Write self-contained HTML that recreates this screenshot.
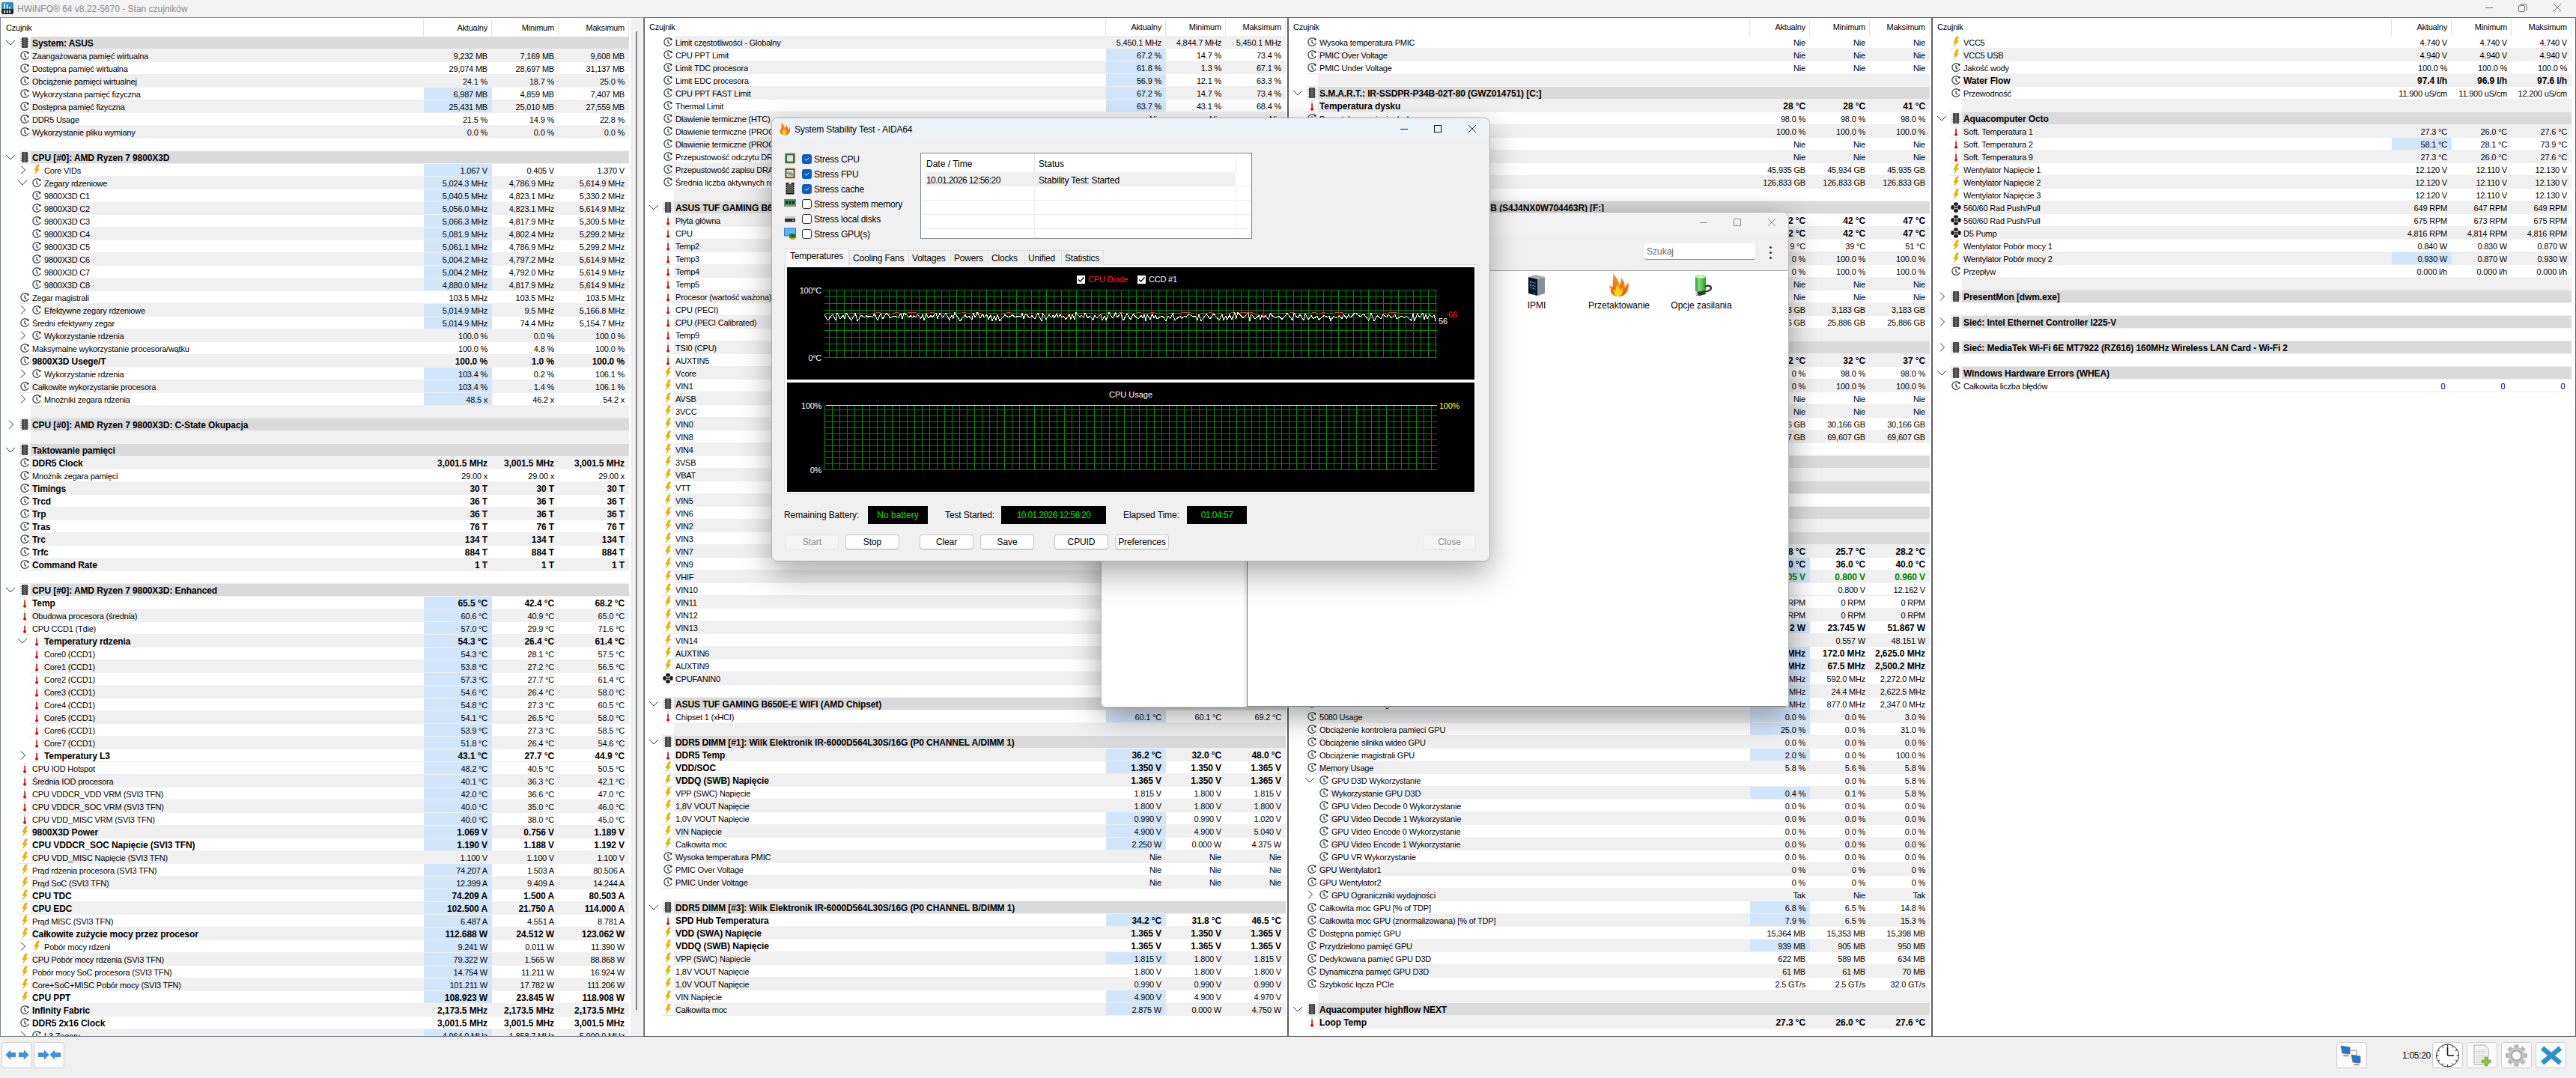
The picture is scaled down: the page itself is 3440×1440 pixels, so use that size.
<!DOCTYPE html>
<html><head><meta charset="utf-8"><title>HWiNFO</title><style>
*{box-sizing:border-box}
html,body{margin:0;padding:0}
body{width:3440px;height:1440px;overflow:hidden;position:relative;background:#f0f0f0;font-family:"Liberation Sans",sans-serif;color:#000}
div,span,svg{position:absolute}
.pn{overflow:hidden;background:#fff}
.t{white-space:nowrap;font-size:11px;line-height:18px;letter-spacing:-0.2px}
.t.b{font-weight:bold;font-size:12px;line-height:17px;letter-spacing:-0.1px}
.t.r{text-align:right}
.t.hd{line-height:20px}
.ic{overflow:visible}
.u{white-space:nowrap}
</style></head>
<body>

<div style="left:0;top:0;width:3440px;height:23px;background:#f3f3f3"></div>
<div class="pn" style="left:0px;top:23px;width:860px;height:1362px">
<div style="position:absolute;left:0px;top:-23px;width:3440px;height:1440px">
<span class="t hd" style="left:8px;top:27px;">Czujnik</span>
<span class="t r hd" style="left:561px;top:27px;width:90px;">Aktualny</span>
<span class="t r hd" style="left:650px;top:27px;width:90px;">Minimum</span>
<span class="t r hd" style="left:744px;top:27px;width:90px;">Maksimum</span>
<div style="left:565px;top:26px;width:1px;height:23px;background:#e5e5e5"></div>
<div style="left:656px;top:26px;width:1px;height:23px;background:#e5e5e5"></div>
<div style="left:745px;top:26px;width:1px;height:23px;background:#e5e5e5"></div>
<div style="left:839px;top:26px;width:1px;height:23px;background:#e5e5e5"></div>
<div style="left:25px;top:49px;width:16px;height:16px;background:#f7f7f7"></div>
<div style="left:41px;top:49px;width:799px;height:16px;background:#dadada"></div>
<div style="left:41px;top:65px;width:799px;height:1px;background:#f0f0f0"></div>
<div style="left:25px;top:65px;width:16px;height:1px;background:#e9e9e9"></div>
<svg class="ic" style="left:7px;top:49px" width="14" height="16" viewBox="0 0 14 16"><path d="M1 5L7 11L13 5" fill="none" stroke="#303030" stroke-width="1"/></svg>
<svg class="ic" style="left:25px;top:49px" width="16" height="16" viewBox="0 0 16 16"><g fill="#a9a9a9"><rect x="2" y="3" width="2" height="1"/><rect x="2" y="6" width="2" height="1"/><rect x="2" y="9" width="2" height="1"/><rect x="2" y="12" width="2" height="1"/><rect x="12" y="3" width="2" height="1"/><rect x="12" y="6" width="2" height="1"/><rect x="12" y="9" width="2" height="1"/><rect x="12" y="12" width="2" height="1"/></g><rect x="4" y="1" width="8" height="14" rx="0.8" fill="#444"/><rect x="6.5" y="1" width="3" height="14" fill="#626262"/></svg>
<span class="t b" style="left:43px;top:50px;">System: ASUS</span>
<div style="left:41px;top:66px;width:799px;height:16px;background:#f0f0f0"></div>
<div style="left:41px;top:82px;width:799px;height:1px;background:#f0f0f0"></div>
<div style="left:25px;top:82px;width:16px;height:1px;background:#e9e9e9"></div>
<svg class="ic" style="left:25px;top:66px" width="16" height="16" viewBox="0 0 16 16"><path d="M13.2 9.8A5.3 5.3 0 1 1 11.6 4.0" fill="none" stroke="#4d5257" stroke-width="1.4"/><circle cx="12.3" cy="4.6" r="1.3" fill="#1e1e1e"/><path d="M8 5.2V8.6L10 10.4" fill="none" stroke="#3d4247" stroke-width="1.3"/></svg>
<span class="t " style="left:43px;top:66px;">Zaangażowana pamięć wirtualna</span>
<span class="t r " style="left:531px;top:66px;width:120px;">9,232 MB</span>
<span class="t r " style="left:620px;top:66px;width:120px;">7,169 MB</span>
<span class="t r " style="left:714px;top:66px;width:120px;">9,608 MB</span>
<div style="left:41px;top:99px;width:799px;height:1px;background:#f0f0f0"></div>
<div style="left:25px;top:99px;width:16px;height:1px;background:#e9e9e9"></div>
<svg class="ic" style="left:25px;top:83px" width="16" height="16" viewBox="0 0 16 16"><path d="M13.2 9.8A5.3 5.3 0 1 1 11.6 4.0" fill="none" stroke="#4d5257" stroke-width="1.4"/><circle cx="12.3" cy="4.6" r="1.3" fill="#1e1e1e"/><path d="M8 5.2V8.6L10 10.4" fill="none" stroke="#3d4247" stroke-width="1.3"/></svg>
<span class="t " style="left:43px;top:83px;">Dostępna pamięć wirtualna</span>
<span class="t r " style="left:531px;top:83px;width:120px;">29,074 MB</span>
<span class="t r " style="left:620px;top:83px;width:120px;">28,697 MB</span>
<span class="t r " style="left:714px;top:83px;width:120px;">31,137 MB</span>
<div style="left:41px;top:100px;width:799px;height:16px;background:#f0f0f0"></div>
<div style="left:41px;top:116px;width:799px;height:1px;background:#f0f0f0"></div>
<div style="left:25px;top:116px;width:16px;height:1px;background:#e9e9e9"></div>
<svg class="ic" style="left:25px;top:100px" width="16" height="16" viewBox="0 0 16 16"><path d="M13.2 9.8A5.3 5.3 0 1 1 11.6 4.0" fill="none" stroke="#4d5257" stroke-width="1.4"/><circle cx="12.3" cy="4.6" r="1.3" fill="#1e1e1e"/><path d="M8 5.2V8.6L10 10.4" fill="none" stroke="#3d4247" stroke-width="1.3"/></svg>
<span class="t " style="left:43px;top:100px;">Obciążenie pamięci wirtualnej</span>
<span class="t r " style="left:531px;top:100px;width:120px;">24.1 %</span>
<span class="t r " style="left:620px;top:100px;width:120px;">18.7 %</span>
<span class="t r " style="left:714px;top:100px;width:120px;">25.0 %</span>
<div style="left:41px;top:133px;width:799px;height:1px;background:#f0f0f0"></div>
<div style="left:25px;top:133px;width:16px;height:1px;background:#e9e9e9"></div>
<svg class="ic" style="left:25px;top:117px" width="16" height="16" viewBox="0 0 16 16"><path d="M13.2 9.8A5.3 5.3 0 1 1 11.6 4.0" fill="none" stroke="#4d5257" stroke-width="1.4"/><circle cx="12.3" cy="4.6" r="1.3" fill="#1e1e1e"/><path d="M8 5.2V8.6L10 10.4" fill="none" stroke="#3d4247" stroke-width="1.3"/></svg>
<div style="left:566px;top:117px;width:91px;height:16px;background:#d1e5fb"></div>
<span class="t " style="left:43px;top:117px;">Wykorzystana pamięć fizyczna</span>
<span class="t r " style="left:531px;top:117px;width:120px;">6,987 MB</span>
<span class="t r " style="left:620px;top:117px;width:120px;">4,859 MB</span>
<span class="t r " style="left:714px;top:117px;width:120px;">7,407 MB</span>
<div style="left:41px;top:134px;width:799px;height:16px;background:#f0f0f0"></div>
<div style="left:41px;top:150px;width:799px;height:1px;background:#f0f0f0"></div>
<div style="left:25px;top:150px;width:16px;height:1px;background:#e9e9e9"></div>
<svg class="ic" style="left:25px;top:134px" width="16" height="16" viewBox="0 0 16 16"><path d="M13.2 9.8A5.3 5.3 0 1 1 11.6 4.0" fill="none" stroke="#4d5257" stroke-width="1.4"/><circle cx="12.3" cy="4.6" r="1.3" fill="#1e1e1e"/><path d="M8 5.2V8.6L10 10.4" fill="none" stroke="#3d4247" stroke-width="1.3"/></svg>
<div style="left:566px;top:134px;width:91px;height:16px;background:#d1e5fb"></div>
<span class="t " style="left:43px;top:134px;">Dostępna pamięć fizyczna</span>
<span class="t r " style="left:531px;top:134px;width:120px;">25,431 MB</span>
<span class="t r " style="left:620px;top:134px;width:120px;">25,010 MB</span>
<span class="t r " style="left:714px;top:134px;width:120px;">27,559 MB</span>
<div style="left:41px;top:167px;width:799px;height:1px;background:#f0f0f0"></div>
<div style="left:25px;top:167px;width:16px;height:1px;background:#e9e9e9"></div>
<svg class="ic" style="left:25px;top:151px" width="16" height="16" viewBox="0 0 16 16"><path d="M13.2 9.8A5.3 5.3 0 1 1 11.6 4.0" fill="none" stroke="#4d5257" stroke-width="1.4"/><circle cx="12.3" cy="4.6" r="1.3" fill="#1e1e1e"/><path d="M8 5.2V8.6L10 10.4" fill="none" stroke="#3d4247" stroke-width="1.3"/></svg>
<span class="t " style="left:43px;top:151px;">DDR5 Usage</span>
<span class="t r " style="left:531px;top:151px;width:120px;">21.5 %</span>
<span class="t r " style="left:620px;top:151px;width:120px;">14.9 %</span>
<span class="t r " style="left:714px;top:151px;width:120px;">22.8 %</span>
<div style="left:41px;top:168px;width:799px;height:16px;background:#f0f0f0"></div>
<div style="left:41px;top:184px;width:799px;height:1px;background:#f0f0f0"></div>
<div style="left:25px;top:184px;width:16px;height:1px;background:#e9e9e9"></div>
<svg class="ic" style="left:25px;top:168px" width="16" height="16" viewBox="0 0 16 16"><path d="M13.2 9.8A5.3 5.3 0 1 1 11.6 4.0" fill="none" stroke="#4d5257" stroke-width="1.4"/><circle cx="12.3" cy="4.6" r="1.3" fill="#1e1e1e"/><path d="M8 5.2V8.6L10 10.4" fill="none" stroke="#3d4247" stroke-width="1.3"/></svg>
<span class="t " style="left:43px;top:168px;">Wykorzystanie pliku wymiany</span>
<span class="t r " style="left:531px;top:168px;width:120px;">0.0 %</span>
<span class="t r " style="left:620px;top:168px;width:120px;">0.0 %</span>
<span class="t r " style="left:714px;top:168px;width:120px;">0.0 %</span>
<div style="left:41px;top:201px;width:799px;height:1px;background:#f0f0f0"></div>
<div style="left:25px;top:201px;width:16px;height:1px;background:#e9e9e9"></div>
<div style="left:25px;top:202px;width:16px;height:16px;background:#f7f7f7"></div>
<div style="left:41px;top:202px;width:799px;height:16px;background:#dadada"></div>
<div style="left:41px;top:218px;width:799px;height:1px;background:#f0f0f0"></div>
<div style="left:25px;top:218px;width:16px;height:1px;background:#e9e9e9"></div>
<svg class="ic" style="left:7px;top:202px" width="14" height="16" viewBox="0 0 14 16"><path d="M1 5L7 11L13 5" fill="none" stroke="#303030" stroke-width="1"/></svg>
<svg class="ic" style="left:25px;top:202px" width="16" height="16" viewBox="0 0 16 16"><g fill="#a9a9a9"><rect x="2" y="3" width="2" height="1"/><rect x="2" y="6" width="2" height="1"/><rect x="2" y="9" width="2" height="1"/><rect x="2" y="12" width="2" height="1"/><rect x="12" y="3" width="2" height="1"/><rect x="12" y="6" width="2" height="1"/><rect x="12" y="9" width="2" height="1"/><rect x="12" y="12" width="2" height="1"/></g><rect x="4" y="1" width="8" height="14" rx="0.8" fill="#444"/><rect x="6.5" y="1" width="3" height="14" fill="#626262"/></svg>
<span class="t b" style="left:43px;top:203px;">CPU [#0]: AMD Ryzen 7 9800X3D</span>
<div style="left:57px;top:235px;width:783px;height:1px;background:#f0f0f0"></div>
<div style="left:41px;top:235px;width:16px;height:1px;background:#e9e9e9"></div>
<svg class="ic" style="left:25px;top:219px" width="12" height="16" viewBox="0 0 12 16"><path d="M3 2.5L8.5 8L3 13.5" fill="none" stroke="#2a2a2a" stroke-width="1"/></svg>
<svg class="ic" style="left:41px;top:219px" width="16" height="16" viewBox="0 0 16 16"><path d="M8.4 0.8H12.2L9.4 6.2L12.2 6.4L4.2 15.6L7 9.2L4.4 9Z" fill="#e9b30c"/></svg>
<div style="left:566px;top:219px;width:91px;height:16px;background:#d1e5fb"></div>
<span class="t " style="left:59px;top:219px;">Core VIDs</span>
<span class="t r " style="left:531px;top:219px;width:120px;">1.067 V</span>
<span class="t r " style="left:620px;top:219px;width:120px;">0.405 V</span>
<span class="t r " style="left:714px;top:219px;width:120px;">1.370 V</span>
<div style="left:57px;top:236px;width:783px;height:16px;background:#f0f0f0"></div>
<div style="left:57px;top:252px;width:783px;height:1px;background:#f0f0f0"></div>
<div style="left:41px;top:252px;width:16px;height:1px;background:#e9e9e9"></div>
<svg class="ic" style="left:23px;top:236px" width="14" height="16" viewBox="0 0 14 16"><path d="M1 5L7 11L13 5" fill="none" stroke="#303030" stroke-width="1"/></svg>
<svg class="ic" style="left:41px;top:236px" width="16" height="16" viewBox="0 0 16 16"><path d="M13.2 9.8A5.3 5.3 0 1 1 11.6 4.0" fill="none" stroke="#4d5257" stroke-width="1.4"/><circle cx="12.3" cy="4.6" r="1.3" fill="#1e1e1e"/><path d="M8 5.2V8.6L10 10.4" fill="none" stroke="#3d4247" stroke-width="1.3"/></svg>
<div style="left:566px;top:236px;width:91px;height:16px;background:#d1e5fb"></div>
<span class="t " style="left:59px;top:236px;">Zegary rdzeniowe</span>
<span class="t r " style="left:531px;top:236px;width:120px;">5,024.3 MHz</span>
<span class="t r " style="left:620px;top:236px;width:120px;">4,786.9 MHz</span>
<span class="t r " style="left:714px;top:236px;width:120px;">5,614.9 MHz</span>
<div style="left:57px;top:269px;width:783px;height:1px;background:#f0f0f0"></div>
<div style="left:41px;top:269px;width:16px;height:1px;background:#e9e9e9"></div>
<svg class="ic" style="left:41px;top:253px" width="16" height="16" viewBox="0 0 16 16"><path d="M13.2 9.8A5.3 5.3 0 1 1 11.6 4.0" fill="none" stroke="#4d5257" stroke-width="1.4"/><circle cx="12.3" cy="4.6" r="1.3" fill="#1e1e1e"/><path d="M8 5.2V8.6L10 10.4" fill="none" stroke="#3d4247" stroke-width="1.3"/></svg>
<div style="left:566px;top:253px;width:91px;height:16px;background:#d1e5fb"></div>
<span class="t " style="left:59px;top:253px;">9800X3D C1</span>
<span class="t r " style="left:531px;top:253px;width:120px;">5,040.5 MHz</span>
<span class="t r " style="left:620px;top:253px;width:120px;">4,823.1 MHz</span>
<span class="t r " style="left:714px;top:253px;width:120px;">5,330.2 MHz</span>
<div style="left:57px;top:270px;width:783px;height:16px;background:#f0f0f0"></div>
<div style="left:57px;top:286px;width:783px;height:1px;background:#f0f0f0"></div>
<div style="left:41px;top:286px;width:16px;height:1px;background:#e9e9e9"></div>
<svg class="ic" style="left:41px;top:270px" width="16" height="16" viewBox="0 0 16 16"><path d="M13.2 9.8A5.3 5.3 0 1 1 11.6 4.0" fill="none" stroke="#4d5257" stroke-width="1.4"/><circle cx="12.3" cy="4.6" r="1.3" fill="#1e1e1e"/><path d="M8 5.2V8.6L10 10.4" fill="none" stroke="#3d4247" stroke-width="1.3"/></svg>
<div style="left:566px;top:270px;width:91px;height:16px;background:#d1e5fb"></div>
<span class="t " style="left:59px;top:270px;">9800X3D C2</span>
<span class="t r " style="left:531px;top:270px;width:120px;">5,056.0 MHz</span>
<span class="t r " style="left:620px;top:270px;width:120px;">4,823.1 MHz</span>
<span class="t r " style="left:714px;top:270px;width:120px;">5,614.9 MHz</span>
<div style="left:57px;top:303px;width:783px;height:1px;background:#f0f0f0"></div>
<div style="left:41px;top:303px;width:16px;height:1px;background:#e9e9e9"></div>
<svg class="ic" style="left:41px;top:287px" width="16" height="16" viewBox="0 0 16 16"><path d="M13.2 9.8A5.3 5.3 0 1 1 11.6 4.0" fill="none" stroke="#4d5257" stroke-width="1.4"/><circle cx="12.3" cy="4.6" r="1.3" fill="#1e1e1e"/><path d="M8 5.2V8.6L10 10.4" fill="none" stroke="#3d4247" stroke-width="1.3"/></svg>
<div style="left:566px;top:287px;width:91px;height:16px;background:#d1e5fb"></div>
<span class="t " style="left:59px;top:287px;">9800X3D C3</span>
<span class="t r " style="left:531px;top:287px;width:120px;">5,066.3 MHz</span>
<span class="t r " style="left:620px;top:287px;width:120px;">4,817.9 MHz</span>
<span class="t r " style="left:714px;top:287px;width:120px;">5,309.5 MHz</span>
<div style="left:57px;top:304px;width:783px;height:16px;background:#f0f0f0"></div>
<div style="left:57px;top:320px;width:783px;height:1px;background:#f0f0f0"></div>
<div style="left:41px;top:320px;width:16px;height:1px;background:#e9e9e9"></div>
<svg class="ic" style="left:41px;top:304px" width="16" height="16" viewBox="0 0 16 16"><path d="M13.2 9.8A5.3 5.3 0 1 1 11.6 4.0" fill="none" stroke="#4d5257" stroke-width="1.4"/><circle cx="12.3" cy="4.6" r="1.3" fill="#1e1e1e"/><path d="M8 5.2V8.6L10 10.4" fill="none" stroke="#3d4247" stroke-width="1.3"/></svg>
<div style="left:566px;top:304px;width:91px;height:16px;background:#d1e5fb"></div>
<span class="t " style="left:59px;top:304px;">9800X3D C4</span>
<span class="t r " style="left:531px;top:304px;width:120px;">5,081.9 MHz</span>
<span class="t r " style="left:620px;top:304px;width:120px;">4,802.4 MHz</span>
<span class="t r " style="left:714px;top:304px;width:120px;">5,299.2 MHz</span>
<div style="left:57px;top:337px;width:783px;height:1px;background:#f0f0f0"></div>
<div style="left:41px;top:337px;width:16px;height:1px;background:#e9e9e9"></div>
<svg class="ic" style="left:41px;top:321px" width="16" height="16" viewBox="0 0 16 16"><path d="M13.2 9.8A5.3 5.3 0 1 1 11.6 4.0" fill="none" stroke="#4d5257" stroke-width="1.4"/><circle cx="12.3" cy="4.6" r="1.3" fill="#1e1e1e"/><path d="M8 5.2V8.6L10 10.4" fill="none" stroke="#3d4247" stroke-width="1.3"/></svg>
<div style="left:566px;top:321px;width:91px;height:16px;background:#d1e5fb"></div>
<span class="t " style="left:59px;top:321px;">9800X3D C5</span>
<span class="t r " style="left:531px;top:321px;width:120px;">5,061.1 MHz</span>
<span class="t r " style="left:620px;top:321px;width:120px;">4,786.9 MHz</span>
<span class="t r " style="left:714px;top:321px;width:120px;">5,299.2 MHz</span>
<div style="left:57px;top:338px;width:783px;height:16px;background:#f0f0f0"></div>
<div style="left:57px;top:354px;width:783px;height:1px;background:#f0f0f0"></div>
<div style="left:41px;top:354px;width:16px;height:1px;background:#e9e9e9"></div>
<svg class="ic" style="left:41px;top:338px" width="16" height="16" viewBox="0 0 16 16"><path d="M13.2 9.8A5.3 5.3 0 1 1 11.6 4.0" fill="none" stroke="#4d5257" stroke-width="1.4"/><circle cx="12.3" cy="4.6" r="1.3" fill="#1e1e1e"/><path d="M8 5.2V8.6L10 10.4" fill="none" stroke="#3d4247" stroke-width="1.3"/></svg>
<div style="left:566px;top:338px;width:91px;height:16px;background:#d1e5fb"></div>
<span class="t " style="left:59px;top:338px;">9800X3D C6</span>
<span class="t r " style="left:531px;top:338px;width:120px;">5,004.2 MHz</span>
<span class="t r " style="left:620px;top:338px;width:120px;">4,797.2 MHz</span>
<span class="t r " style="left:714px;top:338px;width:120px;">5,614.9 MHz</span>
<div style="left:57px;top:371px;width:783px;height:1px;background:#f0f0f0"></div>
<div style="left:41px;top:371px;width:16px;height:1px;background:#e9e9e9"></div>
<svg class="ic" style="left:41px;top:355px" width="16" height="16" viewBox="0 0 16 16"><path d="M13.2 9.8A5.3 5.3 0 1 1 11.6 4.0" fill="none" stroke="#4d5257" stroke-width="1.4"/><circle cx="12.3" cy="4.6" r="1.3" fill="#1e1e1e"/><path d="M8 5.2V8.6L10 10.4" fill="none" stroke="#3d4247" stroke-width="1.3"/></svg>
<div style="left:566px;top:355px;width:91px;height:16px;background:#d1e5fb"></div>
<span class="t " style="left:59px;top:355px;">9800X3D C7</span>
<span class="t r " style="left:531px;top:355px;width:120px;">5,004.2 MHz</span>
<span class="t r " style="left:620px;top:355px;width:120px;">4,792.0 MHz</span>
<span class="t r " style="left:714px;top:355px;width:120px;">5,614.9 MHz</span>
<div style="left:57px;top:372px;width:783px;height:16px;background:#f0f0f0"></div>
<div style="left:57px;top:388px;width:783px;height:1px;background:#f0f0f0"></div>
<div style="left:41px;top:388px;width:16px;height:1px;background:#e9e9e9"></div>
<svg class="ic" style="left:41px;top:372px" width="16" height="16" viewBox="0 0 16 16"><path d="M13.2 9.8A5.3 5.3 0 1 1 11.6 4.0" fill="none" stroke="#4d5257" stroke-width="1.4"/><circle cx="12.3" cy="4.6" r="1.3" fill="#1e1e1e"/><path d="M8 5.2V8.6L10 10.4" fill="none" stroke="#3d4247" stroke-width="1.3"/></svg>
<div style="left:566px;top:372px;width:91px;height:16px;background:#d1e5fb"></div>
<span class="t " style="left:59px;top:372px;">9800X3D C8</span>
<span class="t r " style="left:531px;top:372px;width:120px;">4,880.0 MHz</span>
<span class="t r " style="left:620px;top:372px;width:120px;">4,817.9 MHz</span>
<span class="t r " style="left:714px;top:372px;width:120px;">5,614.9 MHz</span>
<div style="left:41px;top:405px;width:799px;height:1px;background:#f0f0f0"></div>
<div style="left:25px;top:405px;width:16px;height:1px;background:#e9e9e9"></div>
<svg class="ic" style="left:25px;top:389px" width="16" height="16" viewBox="0 0 16 16"><path d="M13.2 9.8A5.3 5.3 0 1 1 11.6 4.0" fill="none" stroke="#4d5257" stroke-width="1.4"/><circle cx="12.3" cy="4.6" r="1.3" fill="#1e1e1e"/><path d="M8 5.2V8.6L10 10.4" fill="none" stroke="#3d4247" stroke-width="1.3"/></svg>
<span class="t " style="left:43px;top:389px;">Zegar magistrali</span>
<span class="t r " style="left:531px;top:389px;width:120px;">103.5 MHz</span>
<span class="t r " style="left:620px;top:389px;width:120px;">103.5 MHz</span>
<span class="t r " style="left:714px;top:389px;width:120px;">103.5 MHz</span>
<div style="left:57px;top:406px;width:783px;height:16px;background:#f0f0f0"></div>
<div style="left:57px;top:422px;width:783px;height:1px;background:#f0f0f0"></div>
<div style="left:41px;top:422px;width:16px;height:1px;background:#e9e9e9"></div>
<svg class="ic" style="left:25px;top:406px" width="12" height="16" viewBox="0 0 12 16"><path d="M3 2.5L8.5 8L3 13.5" fill="none" stroke="#2a2a2a" stroke-width="1"/></svg>
<svg class="ic" style="left:41px;top:406px" width="16" height="16" viewBox="0 0 16 16"><path d="M13.2 9.8A5.3 5.3 0 1 1 11.6 4.0" fill="none" stroke="#4d5257" stroke-width="1.4"/><circle cx="12.3" cy="4.6" r="1.3" fill="#1e1e1e"/><path d="M8 5.2V8.6L10 10.4" fill="none" stroke="#3d4247" stroke-width="1.3"/></svg>
<div style="left:566px;top:406px;width:91px;height:16px;background:#d1e5fb"></div>
<span class="t " style="left:59px;top:406px;">Efektywne zegary rdzeniowe</span>
<span class="t r " style="left:531px;top:406px;width:120px;">5,014.9 MHz</span>
<span class="t r " style="left:620px;top:406px;width:120px;">9.5 MHz</span>
<span class="t r " style="left:714px;top:406px;width:120px;">5,166.8 MHz</span>
<div style="left:41px;top:439px;width:799px;height:1px;background:#f0f0f0"></div>
<div style="left:25px;top:439px;width:16px;height:1px;background:#e9e9e9"></div>
<svg class="ic" style="left:25px;top:423px" width="16" height="16" viewBox="0 0 16 16"><path d="M13.2 9.8A5.3 5.3 0 1 1 11.6 4.0" fill="none" stroke="#4d5257" stroke-width="1.4"/><circle cx="12.3" cy="4.6" r="1.3" fill="#1e1e1e"/><path d="M8 5.2V8.6L10 10.4" fill="none" stroke="#3d4247" stroke-width="1.3"/></svg>
<div style="left:566px;top:423px;width:91px;height:16px;background:#d1e5fb"></div>
<span class="t " style="left:43px;top:423px;">Średni efektywny zegar</span>
<span class="t r " style="left:531px;top:423px;width:120px;">5,014.9 MHz</span>
<span class="t r " style="left:620px;top:423px;width:120px;">74.4 MHz</span>
<span class="t r " style="left:714px;top:423px;width:120px;">5,154.7 MHz</span>
<div style="left:57px;top:440px;width:783px;height:16px;background:#f0f0f0"></div>
<div style="left:57px;top:456px;width:783px;height:1px;background:#f0f0f0"></div>
<div style="left:41px;top:456px;width:16px;height:1px;background:#e9e9e9"></div>
<svg class="ic" style="left:25px;top:440px" width="12" height="16" viewBox="0 0 12 16"><path d="M3 2.5L8.5 8L3 13.5" fill="none" stroke="#2a2a2a" stroke-width="1"/></svg>
<svg class="ic" style="left:41px;top:440px" width="16" height="16" viewBox="0 0 16 16"><path d="M13.2 9.8A5.3 5.3 0 1 1 11.6 4.0" fill="none" stroke="#4d5257" stroke-width="1.4"/><circle cx="12.3" cy="4.6" r="1.3" fill="#1e1e1e"/><path d="M8 5.2V8.6L10 10.4" fill="none" stroke="#3d4247" stroke-width="1.3"/></svg>
<span class="t " style="left:59px;top:440px;">Wykorzystanie rdzenia</span>
<span class="t r " style="left:531px;top:440px;width:120px;">100.0 %</span>
<span class="t r " style="left:620px;top:440px;width:120px;">0.0 %</span>
<span class="t r " style="left:714px;top:440px;width:120px;">100.0 %</span>
<div style="left:41px;top:473px;width:799px;height:1px;background:#f0f0f0"></div>
<div style="left:25px;top:473px;width:16px;height:1px;background:#e9e9e9"></div>
<svg class="ic" style="left:25px;top:457px" width="16" height="16" viewBox="0 0 16 16"><path d="M13.2 9.8A5.3 5.3 0 1 1 11.6 4.0" fill="none" stroke="#4d5257" stroke-width="1.4"/><circle cx="12.3" cy="4.6" r="1.3" fill="#1e1e1e"/><path d="M8 5.2V8.6L10 10.4" fill="none" stroke="#3d4247" stroke-width="1.3"/></svg>
<span class="t " style="left:43px;top:457px;">Maksymalne wykorzystanie procesora/wątku</span>
<span class="t r " style="left:531px;top:457px;width:120px;">100.0 %</span>
<span class="t r " style="left:620px;top:457px;width:120px;">4.8 %</span>
<span class="t r " style="left:714px;top:457px;width:120px;">100.0 %</span>
<div style="left:41px;top:474px;width:799px;height:16px;background:#f0f0f0"></div>
<div style="left:41px;top:490px;width:799px;height:1px;background:#f0f0f0"></div>
<div style="left:25px;top:490px;width:16px;height:1px;background:#e9e9e9"></div>
<svg class="ic" style="left:25px;top:474px" width="16" height="16" viewBox="0 0 16 16"><path d="M13.2 9.8A5.3 5.3 0 1 1 11.6 4.0" fill="none" stroke="#4d5257" stroke-width="1.4"/><circle cx="12.3" cy="4.6" r="1.3" fill="#1e1e1e"/><path d="M8 5.2V8.6L10 10.4" fill="none" stroke="#3d4247" stroke-width="1.3"/></svg>
<span class="t b" style="left:43px;top:475px;">9800X3D Usege/T</span>
<span class="t r b" style="left:531px;top:475px;width:120px;">100.0 %</span>
<span class="t r b" style="left:620px;top:475px;width:120px;">1.0 %</span>
<span class="t r b" style="left:714px;top:475px;width:120px;">100.0 %</span>
<div style="left:57px;top:507px;width:783px;height:1px;background:#f0f0f0"></div>
<div style="left:41px;top:507px;width:16px;height:1px;background:#e9e9e9"></div>
<svg class="ic" style="left:25px;top:491px" width="12" height="16" viewBox="0 0 12 16"><path d="M3 2.5L8.5 8L3 13.5" fill="none" stroke="#2a2a2a" stroke-width="1"/></svg>
<svg class="ic" style="left:41px;top:491px" width="16" height="16" viewBox="0 0 16 16"><path d="M13.2 9.8A5.3 5.3 0 1 1 11.6 4.0" fill="none" stroke="#4d5257" stroke-width="1.4"/><circle cx="12.3" cy="4.6" r="1.3" fill="#1e1e1e"/><path d="M8 5.2V8.6L10 10.4" fill="none" stroke="#3d4247" stroke-width="1.3"/></svg>
<div style="left:566px;top:491px;width:91px;height:16px;background:#d1e5fb"></div>
<span class="t " style="left:59px;top:491px;">Wykorzystanie rdzenia</span>
<span class="t r " style="left:531px;top:491px;width:120px;">103.4 %</span>
<span class="t r " style="left:620px;top:491px;width:120px;">0.2 %</span>
<span class="t r " style="left:714px;top:491px;width:120px;">106.1 %</span>
<div style="left:41px;top:508px;width:799px;height:16px;background:#f0f0f0"></div>
<div style="left:41px;top:524px;width:799px;height:1px;background:#f0f0f0"></div>
<div style="left:25px;top:524px;width:16px;height:1px;background:#e9e9e9"></div>
<svg class="ic" style="left:25px;top:508px" width="16" height="16" viewBox="0 0 16 16"><path d="M13.2 9.8A5.3 5.3 0 1 1 11.6 4.0" fill="none" stroke="#4d5257" stroke-width="1.4"/><circle cx="12.3" cy="4.6" r="1.3" fill="#1e1e1e"/><path d="M8 5.2V8.6L10 10.4" fill="none" stroke="#3d4247" stroke-width="1.3"/></svg>
<div style="left:566px;top:508px;width:91px;height:16px;background:#d1e5fb"></div>
<span class="t " style="left:43px;top:508px;">Całkowite wykorzystanie procesora</span>
<span class="t r " style="left:531px;top:508px;width:120px;">103.4 %</span>
<span class="t r " style="left:620px;top:508px;width:120px;">1.4 %</span>
<span class="t r " style="left:714px;top:508px;width:120px;">106.1 %</span>
<div style="left:57px;top:541px;width:783px;height:1px;background:#f0f0f0"></div>
<div style="left:41px;top:541px;width:16px;height:1px;background:#e9e9e9"></div>
<svg class="ic" style="left:25px;top:525px" width="12" height="16" viewBox="0 0 12 16"><path d="M3 2.5L8.5 8L3 13.5" fill="none" stroke="#2a2a2a" stroke-width="1"/></svg>
<svg class="ic" style="left:41px;top:525px" width="16" height="16" viewBox="0 0 16 16"><path d="M13.2 9.8A5.3 5.3 0 1 1 11.6 4.0" fill="none" stroke="#4d5257" stroke-width="1.4"/><circle cx="12.3" cy="4.6" r="1.3" fill="#1e1e1e"/><path d="M8 5.2V8.6L10 10.4" fill="none" stroke="#3d4247" stroke-width="1.3"/></svg>
<div style="left:566px;top:525px;width:91px;height:16px;background:#d1e5fb"></div>
<span class="t " style="left:59px;top:525px;">Mnożniki zegara rdzenia</span>
<span class="t r " style="left:531px;top:525px;width:120px;">48.5 x</span>
<span class="t r " style="left:620px;top:525px;width:120px;">46.2 x</span>
<span class="t r " style="left:714px;top:525px;width:120px;">54.2 x</span>
<div style="left:41px;top:542px;width:799px;height:16px;background:#f0f0f0"></div>
<div style="left:41px;top:558px;width:799px;height:1px;background:#f0f0f0"></div>
<div style="left:25px;top:558px;width:16px;height:1px;background:#e9e9e9"></div>
<div style="left:25px;top:559px;width:16px;height:16px;background:#f7f7f7"></div>
<div style="left:41px;top:559px;width:799px;height:16px;background:#dadada"></div>
<div style="left:41px;top:575px;width:799px;height:1px;background:#f0f0f0"></div>
<div style="left:25px;top:575px;width:16px;height:1px;background:#e9e9e9"></div>
<svg class="ic" style="left:9px;top:559px" width="12" height="16" viewBox="0 0 12 16"><path d="M3 2.5L8.5 8L3 13.5" fill="none" stroke="#2a2a2a" stroke-width="1"/></svg>
<svg class="ic" style="left:25px;top:559px" width="16" height="16" viewBox="0 0 16 16"><g fill="#a9a9a9"><rect x="2" y="3" width="2" height="1"/><rect x="2" y="6" width="2" height="1"/><rect x="2" y="9" width="2" height="1"/><rect x="2" y="12" width="2" height="1"/><rect x="12" y="3" width="2" height="1"/><rect x="12" y="6" width="2" height="1"/><rect x="12" y="9" width="2" height="1"/><rect x="12" y="12" width="2" height="1"/></g><rect x="4" y="1" width="8" height="14" rx="0.8" fill="#444"/><rect x="6.5" y="1" width="3" height="14" fill="#626262"/></svg>
<span class="t b" style="left:43px;top:560px;">CPU [#0]: AMD Ryzen 7 9800X3D: C-State Okupacja</span>
<div style="left:41px;top:576px;width:799px;height:16px;background:#f0f0f0"></div>
<div style="left:41px;top:592px;width:799px;height:1px;background:#f0f0f0"></div>
<div style="left:25px;top:592px;width:16px;height:1px;background:#e9e9e9"></div>
<div style="left:25px;top:593px;width:16px;height:16px;background:#f7f7f7"></div>
<div style="left:41px;top:593px;width:799px;height:16px;background:#dadada"></div>
<div style="left:41px;top:609px;width:799px;height:1px;background:#f0f0f0"></div>
<div style="left:25px;top:609px;width:16px;height:1px;background:#e9e9e9"></div>
<svg class="ic" style="left:7px;top:593px" width="14" height="16" viewBox="0 0 14 16"><path d="M1 5L7 11L13 5" fill="none" stroke="#303030" stroke-width="1"/></svg>
<svg class="ic" style="left:25px;top:593px" width="16" height="16" viewBox="0 0 16 16"><g fill="#a9a9a9"><rect x="2" y="3" width="2" height="1"/><rect x="2" y="6" width="2" height="1"/><rect x="2" y="9" width="2" height="1"/><rect x="2" y="12" width="2" height="1"/><rect x="12" y="3" width="2" height="1"/><rect x="12" y="6" width="2" height="1"/><rect x="12" y="9" width="2" height="1"/><rect x="12" y="12" width="2" height="1"/></g><rect x="4" y="1" width="8" height="14" rx="0.8" fill="#444"/><rect x="6.5" y="1" width="3" height="14" fill="#626262"/></svg>
<span class="t b" style="left:43px;top:594px;">Taktowanie pamięci</span>
<div style="left:41px;top:610px;width:799px;height:16px;background:#f0f0f0"></div>
<div style="left:41px;top:626px;width:799px;height:1px;background:#f0f0f0"></div>
<div style="left:25px;top:626px;width:16px;height:1px;background:#e9e9e9"></div>
<svg class="ic" style="left:25px;top:610px" width="16" height="16" viewBox="0 0 16 16"><path d="M13.2 9.8A5.3 5.3 0 1 1 11.6 4.0" fill="none" stroke="#4d5257" stroke-width="1.4"/><circle cx="12.3" cy="4.6" r="1.3" fill="#1e1e1e"/><path d="M8 5.2V8.6L10 10.4" fill="none" stroke="#3d4247" stroke-width="1.3"/></svg>
<span class="t b" style="left:43px;top:611px;">DDR5 Clock</span>
<span class="t r b" style="left:531px;top:611px;width:120px;">3,001.5 MHz</span>
<span class="t r b" style="left:620px;top:611px;width:120px;">3,001.5 MHz</span>
<span class="t r b" style="left:714px;top:611px;width:120px;">3,001.5 MHz</span>
<div style="left:41px;top:643px;width:799px;height:1px;background:#f0f0f0"></div>
<div style="left:25px;top:643px;width:16px;height:1px;background:#e9e9e9"></div>
<svg class="ic" style="left:25px;top:627px" width="16" height="16" viewBox="0 0 16 16"><path d="M13.2 9.8A5.3 5.3 0 1 1 11.6 4.0" fill="none" stroke="#4d5257" stroke-width="1.4"/><circle cx="12.3" cy="4.6" r="1.3" fill="#1e1e1e"/><path d="M8 5.2V8.6L10 10.4" fill="none" stroke="#3d4247" stroke-width="1.3"/></svg>
<span class="t " style="left:43px;top:627px;">Mnożnik zegara pamięci</span>
<span class="t r " style="left:531px;top:627px;width:120px;">29.00 x</span>
<span class="t r " style="left:620px;top:627px;width:120px;">29.00 x</span>
<span class="t r " style="left:714px;top:627px;width:120px;">29.00 x</span>
<div style="left:41px;top:644px;width:799px;height:16px;background:#f0f0f0"></div>
<div style="left:41px;top:660px;width:799px;height:1px;background:#f0f0f0"></div>
<div style="left:25px;top:660px;width:16px;height:1px;background:#e9e9e9"></div>
<svg class="ic" style="left:25px;top:644px" width="16" height="16" viewBox="0 0 16 16"><path d="M13.2 9.8A5.3 5.3 0 1 1 11.6 4.0" fill="none" stroke="#4d5257" stroke-width="1.4"/><circle cx="12.3" cy="4.6" r="1.3" fill="#1e1e1e"/><path d="M8 5.2V8.6L10 10.4" fill="none" stroke="#3d4247" stroke-width="1.3"/></svg>
<span class="t b" style="left:43px;top:645px;">Timings</span>
<span class="t r b" style="left:531px;top:645px;width:120px;">30 T</span>
<span class="t r b" style="left:620px;top:645px;width:120px;">30 T</span>
<span class="t r b" style="left:714px;top:645px;width:120px;">30 T</span>
<div style="left:41px;top:677px;width:799px;height:1px;background:#f0f0f0"></div>
<div style="left:25px;top:677px;width:16px;height:1px;background:#e9e9e9"></div>
<svg class="ic" style="left:25px;top:661px" width="16" height="16" viewBox="0 0 16 16"><path d="M13.2 9.8A5.3 5.3 0 1 1 11.6 4.0" fill="none" stroke="#4d5257" stroke-width="1.4"/><circle cx="12.3" cy="4.6" r="1.3" fill="#1e1e1e"/><path d="M8 5.2V8.6L10 10.4" fill="none" stroke="#3d4247" stroke-width="1.3"/></svg>
<span class="t b" style="left:43px;top:662px;">Trcd</span>
<span class="t r b" style="left:531px;top:662px;width:120px;">36 T</span>
<span class="t r b" style="left:620px;top:662px;width:120px;">36 T</span>
<span class="t r b" style="left:714px;top:662px;width:120px;">36 T</span>
<div style="left:41px;top:678px;width:799px;height:16px;background:#f0f0f0"></div>
<div style="left:41px;top:694px;width:799px;height:1px;background:#f0f0f0"></div>
<div style="left:25px;top:694px;width:16px;height:1px;background:#e9e9e9"></div>
<svg class="ic" style="left:25px;top:678px" width="16" height="16" viewBox="0 0 16 16"><path d="M13.2 9.8A5.3 5.3 0 1 1 11.6 4.0" fill="none" stroke="#4d5257" stroke-width="1.4"/><circle cx="12.3" cy="4.6" r="1.3" fill="#1e1e1e"/><path d="M8 5.2V8.6L10 10.4" fill="none" stroke="#3d4247" stroke-width="1.3"/></svg>
<span class="t b" style="left:43px;top:679px;">Trp</span>
<span class="t r b" style="left:531px;top:679px;width:120px;">36 T</span>
<span class="t r b" style="left:620px;top:679px;width:120px;">36 T</span>
<span class="t r b" style="left:714px;top:679px;width:120px;">36 T</span>
<div style="left:41px;top:711px;width:799px;height:1px;background:#f0f0f0"></div>
<div style="left:25px;top:711px;width:16px;height:1px;background:#e9e9e9"></div>
<svg class="ic" style="left:25px;top:695px" width="16" height="16" viewBox="0 0 16 16"><path d="M13.2 9.8A5.3 5.3 0 1 1 11.6 4.0" fill="none" stroke="#4d5257" stroke-width="1.4"/><circle cx="12.3" cy="4.6" r="1.3" fill="#1e1e1e"/><path d="M8 5.2V8.6L10 10.4" fill="none" stroke="#3d4247" stroke-width="1.3"/></svg>
<span class="t b" style="left:43px;top:696px;">Tras</span>
<span class="t r b" style="left:531px;top:696px;width:120px;">76 T</span>
<span class="t r b" style="left:620px;top:696px;width:120px;">76 T</span>
<span class="t r b" style="left:714px;top:696px;width:120px;">76 T</span>
<div style="left:41px;top:712px;width:799px;height:16px;background:#f0f0f0"></div>
<div style="left:41px;top:728px;width:799px;height:1px;background:#f0f0f0"></div>
<div style="left:25px;top:728px;width:16px;height:1px;background:#e9e9e9"></div>
<svg class="ic" style="left:25px;top:712px" width="16" height="16" viewBox="0 0 16 16"><path d="M13.2 9.8A5.3 5.3 0 1 1 11.6 4.0" fill="none" stroke="#4d5257" stroke-width="1.4"/><circle cx="12.3" cy="4.6" r="1.3" fill="#1e1e1e"/><path d="M8 5.2V8.6L10 10.4" fill="none" stroke="#3d4247" stroke-width="1.3"/></svg>
<span class="t b" style="left:43px;top:713px;">Trc</span>
<span class="t r b" style="left:531px;top:713px;width:120px;">134 T</span>
<span class="t r b" style="left:620px;top:713px;width:120px;">134 T</span>
<span class="t r b" style="left:714px;top:713px;width:120px;">134 T</span>
<div style="left:41px;top:745px;width:799px;height:1px;background:#f0f0f0"></div>
<div style="left:25px;top:745px;width:16px;height:1px;background:#e9e9e9"></div>
<svg class="ic" style="left:25px;top:729px" width="16" height="16" viewBox="0 0 16 16"><path d="M13.2 9.8A5.3 5.3 0 1 1 11.6 4.0" fill="none" stroke="#4d5257" stroke-width="1.4"/><circle cx="12.3" cy="4.6" r="1.3" fill="#1e1e1e"/><path d="M8 5.2V8.6L10 10.4" fill="none" stroke="#3d4247" stroke-width="1.3"/></svg>
<span class="t b" style="left:43px;top:730px;">Trfc</span>
<span class="t r b" style="left:531px;top:730px;width:120px;">884 T</span>
<span class="t r b" style="left:620px;top:730px;width:120px;">884 T</span>
<span class="t r b" style="left:714px;top:730px;width:120px;">884 T</span>
<div style="left:41px;top:746px;width:799px;height:16px;background:#f0f0f0"></div>
<div style="left:41px;top:762px;width:799px;height:1px;background:#f0f0f0"></div>
<div style="left:25px;top:762px;width:16px;height:1px;background:#e9e9e9"></div>
<svg class="ic" style="left:25px;top:746px" width="16" height="16" viewBox="0 0 16 16"><path d="M13.2 9.8A5.3 5.3 0 1 1 11.6 4.0" fill="none" stroke="#4d5257" stroke-width="1.4"/><circle cx="12.3" cy="4.6" r="1.3" fill="#1e1e1e"/><path d="M8 5.2V8.6L10 10.4" fill="none" stroke="#3d4247" stroke-width="1.3"/></svg>
<span class="t b" style="left:43px;top:747px;">Command Rate</span>
<span class="t r b" style="left:531px;top:747px;width:120px;">1 T</span>
<span class="t r b" style="left:620px;top:747px;width:120px;">1 T</span>
<span class="t r b" style="left:714px;top:747px;width:120px;">1 T</span>
<div style="left:41px;top:779px;width:799px;height:1px;background:#f0f0f0"></div>
<div style="left:25px;top:779px;width:16px;height:1px;background:#e9e9e9"></div>
<div style="left:25px;top:780px;width:16px;height:16px;background:#f7f7f7"></div>
<div style="left:41px;top:780px;width:799px;height:16px;background:#dadada"></div>
<div style="left:41px;top:796px;width:799px;height:1px;background:#f0f0f0"></div>
<div style="left:25px;top:796px;width:16px;height:1px;background:#e9e9e9"></div>
<svg class="ic" style="left:7px;top:780px" width="14" height="16" viewBox="0 0 14 16"><path d="M1 5L7 11L13 5" fill="none" stroke="#303030" stroke-width="1"/></svg>
<svg class="ic" style="left:25px;top:780px" width="16" height="16" viewBox="0 0 16 16"><g fill="#a9a9a9"><rect x="2" y="3" width="2" height="1"/><rect x="2" y="6" width="2" height="1"/><rect x="2" y="9" width="2" height="1"/><rect x="2" y="12" width="2" height="1"/><rect x="12" y="3" width="2" height="1"/><rect x="12" y="6" width="2" height="1"/><rect x="12" y="9" width="2" height="1"/><rect x="12" y="12" width="2" height="1"/></g><rect x="4" y="1" width="8" height="14" rx="0.8" fill="#444"/><rect x="6.5" y="1" width="3" height="14" fill="#626262"/></svg>
<span class="t b" style="left:43px;top:781px;">CPU [#0]: AMD Ryzen 7 9800X3D: Enhanced</span>
<div style="left:41px;top:813px;width:799px;height:1px;background:#f0f0f0"></div>
<div style="left:25px;top:813px;width:16px;height:1px;background:#e9e9e9"></div>
<svg class="ic" style="left:25px;top:797px" width="16" height="16" viewBox="0 0 16 16"><rect x="7.2" y="1" width="1.8" height="4" fill="#d8d8d8"/><rect x="7.2" y="5" width="1.8" height="7" fill="#cf2a2a"/><circle cx="8.1" cy="12.7" r="2" fill="#d40f0f"/></svg>
<div style="left:566px;top:797px;width:91px;height:16px;background:#d1e5fb"></div>
<span class="t b" style="left:43px;top:798px;">Temp</span>
<span class="t r b" style="left:531px;top:798px;width:120px;">65.5 °C</span>
<span class="t r b" style="left:620px;top:798px;width:120px;">42.4 °C</span>
<span class="t r b" style="left:714px;top:798px;width:120px;">68.2 °C</span>
<div style="left:41px;top:814px;width:799px;height:16px;background:#f0f0f0"></div>
<div style="left:41px;top:830px;width:799px;height:1px;background:#f0f0f0"></div>
<div style="left:25px;top:830px;width:16px;height:1px;background:#e9e9e9"></div>
<svg class="ic" style="left:25px;top:814px" width="16" height="16" viewBox="0 0 16 16"><rect x="7.2" y="1" width="1.8" height="4" fill="#d8d8d8"/><rect x="7.2" y="5" width="1.8" height="7" fill="#cf2a2a"/><circle cx="8.1" cy="12.7" r="2" fill="#d40f0f"/></svg>
<div style="left:566px;top:814px;width:91px;height:16px;background:#d1e5fb"></div>
<span class="t " style="left:43px;top:814px;">Obudowa procesora (średnia)</span>
<span class="t r " style="left:531px;top:814px;width:120px;">60.6 °C</span>
<span class="t r " style="left:620px;top:814px;width:120px;">40.9 °C</span>
<span class="t r " style="left:714px;top:814px;width:120px;">65.0 °C</span>
<div style="left:41px;top:847px;width:799px;height:1px;background:#f0f0f0"></div>
<div style="left:25px;top:847px;width:16px;height:1px;background:#e9e9e9"></div>
<svg class="ic" style="left:25px;top:831px" width="16" height="16" viewBox="0 0 16 16"><rect x="7.2" y="1" width="1.8" height="4" fill="#d8d8d8"/><rect x="7.2" y="5" width="1.8" height="7" fill="#cf2a2a"/><circle cx="8.1" cy="12.7" r="2" fill="#d40f0f"/></svg>
<div style="left:566px;top:831px;width:91px;height:16px;background:#d1e5fb"></div>
<span class="t " style="left:43px;top:831px;">CPU CCD1 (Tdie)</span>
<span class="t r " style="left:531px;top:831px;width:120px;">57.0 °C</span>
<span class="t r " style="left:620px;top:831px;width:120px;">29.9 °C</span>
<span class="t r " style="left:714px;top:831px;width:120px;">71.6 °C</span>
<div style="left:57px;top:848px;width:783px;height:16px;background:#f0f0f0"></div>
<div style="left:57px;top:864px;width:783px;height:1px;background:#f0f0f0"></div>
<div style="left:41px;top:864px;width:16px;height:1px;background:#e9e9e9"></div>
<svg class="ic" style="left:23px;top:848px" width="14" height="16" viewBox="0 0 14 16"><path d="M1 5L7 11L13 5" fill="none" stroke="#303030" stroke-width="1"/></svg>
<svg class="ic" style="left:41px;top:848px" width="16" height="16" viewBox="0 0 16 16"><rect x="7.2" y="1" width="1.8" height="4" fill="#d8d8d8"/><rect x="7.2" y="5" width="1.8" height="7" fill="#cf2a2a"/><circle cx="8.1" cy="12.7" r="2" fill="#d40f0f"/></svg>
<div style="left:566px;top:848px;width:91px;height:16px;background:#d1e5fb"></div>
<span class="t b" style="left:59px;top:849px;">Temperatury rdzenia</span>
<span class="t r b" style="left:531px;top:849px;width:120px;">54.3 °C</span>
<span class="t r b" style="left:620px;top:849px;width:120px;">26.4 °C</span>
<span class="t r b" style="left:714px;top:849px;width:120px;">61.4 °C</span>
<div style="left:57px;top:881px;width:783px;height:1px;background:#f0f0f0"></div>
<div style="left:41px;top:881px;width:16px;height:1px;background:#e9e9e9"></div>
<svg class="ic" style="left:41px;top:865px" width="16" height="16" viewBox="0 0 16 16"><rect x="7.2" y="1" width="1.8" height="4" fill="#d8d8d8"/><rect x="7.2" y="5" width="1.8" height="7" fill="#cf2a2a"/><circle cx="8.1" cy="12.7" r="2" fill="#d40f0f"/></svg>
<div style="left:566px;top:865px;width:91px;height:16px;background:#d1e5fb"></div>
<span class="t " style="left:59px;top:865px;">Core0 (CCD1)</span>
<span class="t r " style="left:531px;top:865px;width:120px;">54.3 °C</span>
<span class="t r " style="left:620px;top:865px;width:120px;">28.1 °C</span>
<span class="t r " style="left:714px;top:865px;width:120px;">57.5 °C</span>
<div style="left:57px;top:882px;width:783px;height:16px;background:#f0f0f0"></div>
<div style="left:57px;top:898px;width:783px;height:1px;background:#f0f0f0"></div>
<div style="left:41px;top:898px;width:16px;height:1px;background:#e9e9e9"></div>
<svg class="ic" style="left:41px;top:882px" width="16" height="16" viewBox="0 0 16 16"><rect x="7.2" y="1" width="1.8" height="4" fill="#d8d8d8"/><rect x="7.2" y="5" width="1.8" height="7" fill="#cf2a2a"/><circle cx="8.1" cy="12.7" r="2" fill="#d40f0f"/></svg>
<div style="left:566px;top:882px;width:91px;height:16px;background:#d1e5fb"></div>
<span class="t " style="left:59px;top:882px;">Core1 (CCD1)</span>
<span class="t r " style="left:531px;top:882px;width:120px;">53.8 °C</span>
<span class="t r " style="left:620px;top:882px;width:120px;">27.2 °C</span>
<span class="t r " style="left:714px;top:882px;width:120px;">56.5 °C</span>
<div style="left:57px;top:915px;width:783px;height:1px;background:#f0f0f0"></div>
<div style="left:41px;top:915px;width:16px;height:1px;background:#e9e9e9"></div>
<svg class="ic" style="left:41px;top:899px" width="16" height="16" viewBox="0 0 16 16"><rect x="7.2" y="1" width="1.8" height="4" fill="#d8d8d8"/><rect x="7.2" y="5" width="1.8" height="7" fill="#cf2a2a"/><circle cx="8.1" cy="12.7" r="2" fill="#d40f0f"/></svg>
<div style="left:566px;top:899px;width:91px;height:16px;background:#d1e5fb"></div>
<span class="t " style="left:59px;top:899px;">Core2 (CCD1)</span>
<span class="t r " style="left:531px;top:899px;width:120px;">57.3 °C</span>
<span class="t r " style="left:620px;top:899px;width:120px;">27.7 °C</span>
<span class="t r " style="left:714px;top:899px;width:120px;">61.4 °C</span>
<div style="left:57px;top:916px;width:783px;height:16px;background:#f0f0f0"></div>
<div style="left:57px;top:932px;width:783px;height:1px;background:#f0f0f0"></div>
<div style="left:41px;top:932px;width:16px;height:1px;background:#e9e9e9"></div>
<svg class="ic" style="left:41px;top:916px" width="16" height="16" viewBox="0 0 16 16"><rect x="7.2" y="1" width="1.8" height="4" fill="#d8d8d8"/><rect x="7.2" y="5" width="1.8" height="7" fill="#cf2a2a"/><circle cx="8.1" cy="12.7" r="2" fill="#d40f0f"/></svg>
<div style="left:566px;top:916px;width:91px;height:16px;background:#d1e5fb"></div>
<span class="t " style="left:59px;top:916px;">Core3 (CCD1)</span>
<span class="t r " style="left:531px;top:916px;width:120px;">54.6 °C</span>
<span class="t r " style="left:620px;top:916px;width:120px;">26.4 °C</span>
<span class="t r " style="left:714px;top:916px;width:120px;">58.0 °C</span>
<div style="left:57px;top:949px;width:783px;height:1px;background:#f0f0f0"></div>
<div style="left:41px;top:949px;width:16px;height:1px;background:#e9e9e9"></div>
<svg class="ic" style="left:41px;top:933px" width="16" height="16" viewBox="0 0 16 16"><rect x="7.2" y="1" width="1.8" height="4" fill="#d8d8d8"/><rect x="7.2" y="5" width="1.8" height="7" fill="#cf2a2a"/><circle cx="8.1" cy="12.7" r="2" fill="#d40f0f"/></svg>
<div style="left:566px;top:933px;width:91px;height:16px;background:#d1e5fb"></div>
<span class="t " style="left:59px;top:933px;">Core4 (CCD1)</span>
<span class="t r " style="left:531px;top:933px;width:120px;">54.8 °C</span>
<span class="t r " style="left:620px;top:933px;width:120px;">27.3 °C</span>
<span class="t r " style="left:714px;top:933px;width:120px;">60.5 °C</span>
<div style="left:57px;top:950px;width:783px;height:16px;background:#f0f0f0"></div>
<div style="left:57px;top:966px;width:783px;height:1px;background:#f0f0f0"></div>
<div style="left:41px;top:966px;width:16px;height:1px;background:#e9e9e9"></div>
<svg class="ic" style="left:41px;top:950px" width="16" height="16" viewBox="0 0 16 16"><rect x="7.2" y="1" width="1.8" height="4" fill="#d8d8d8"/><rect x="7.2" y="5" width="1.8" height="7" fill="#cf2a2a"/><circle cx="8.1" cy="12.7" r="2" fill="#d40f0f"/></svg>
<div style="left:566px;top:950px;width:91px;height:16px;background:#d1e5fb"></div>
<span class="t " style="left:59px;top:950px;">Core5 (CCD1)</span>
<span class="t r " style="left:531px;top:950px;width:120px;">54.1 °C</span>
<span class="t r " style="left:620px;top:950px;width:120px;">26.5 °C</span>
<span class="t r " style="left:714px;top:950px;width:120px;">58.0 °C</span>
<div style="left:57px;top:983px;width:783px;height:1px;background:#f0f0f0"></div>
<div style="left:41px;top:983px;width:16px;height:1px;background:#e9e9e9"></div>
<svg class="ic" style="left:41px;top:967px" width="16" height="16" viewBox="0 0 16 16"><rect x="7.2" y="1" width="1.8" height="4" fill="#d8d8d8"/><rect x="7.2" y="5" width="1.8" height="7" fill="#cf2a2a"/><circle cx="8.1" cy="12.7" r="2" fill="#d40f0f"/></svg>
<div style="left:566px;top:967px;width:91px;height:16px;background:#d1e5fb"></div>
<span class="t " style="left:59px;top:967px;">Core6 (CCD1)</span>
<span class="t r " style="left:531px;top:967px;width:120px;">53.9 °C</span>
<span class="t r " style="left:620px;top:967px;width:120px;">27.3 °C</span>
<span class="t r " style="left:714px;top:967px;width:120px;">58.5 °C</span>
<div style="left:57px;top:984px;width:783px;height:16px;background:#f0f0f0"></div>
<div style="left:57px;top:1000px;width:783px;height:1px;background:#f0f0f0"></div>
<div style="left:41px;top:1000px;width:16px;height:1px;background:#e9e9e9"></div>
<svg class="ic" style="left:41px;top:984px" width="16" height="16" viewBox="0 0 16 16"><rect x="7.2" y="1" width="1.8" height="4" fill="#d8d8d8"/><rect x="7.2" y="5" width="1.8" height="7" fill="#cf2a2a"/><circle cx="8.1" cy="12.7" r="2" fill="#d40f0f"/></svg>
<div style="left:566px;top:984px;width:91px;height:16px;background:#d1e5fb"></div>
<span class="t " style="left:59px;top:984px;">Core7 (CCD1)</span>
<span class="t r " style="left:531px;top:984px;width:120px;">51.8 °C</span>
<span class="t r " style="left:620px;top:984px;width:120px;">26.4 °C</span>
<span class="t r " style="left:714px;top:984px;width:120px;">54.6 °C</span>
<div style="left:57px;top:1017px;width:783px;height:1px;background:#f0f0f0"></div>
<div style="left:41px;top:1017px;width:16px;height:1px;background:#e9e9e9"></div>
<svg class="ic" style="left:25px;top:1001px" width="12" height="16" viewBox="0 0 12 16"><path d="M3 2.5L8.5 8L3 13.5" fill="none" stroke="#2a2a2a" stroke-width="1"/></svg>
<svg class="ic" style="left:41px;top:1001px" width="16" height="16" viewBox="0 0 16 16"><rect x="7.2" y="1" width="1.8" height="4" fill="#d8d8d8"/><rect x="7.2" y="5" width="1.8" height="7" fill="#cf2a2a"/><circle cx="8.1" cy="12.7" r="2" fill="#d40f0f"/></svg>
<div style="left:566px;top:1001px;width:91px;height:16px;background:#d1e5fb"></div>
<span class="t b" style="left:59px;top:1002px;">Temperatury L3</span>
<span class="t r b" style="left:531px;top:1002px;width:120px;">43.1 °C</span>
<span class="t r b" style="left:620px;top:1002px;width:120px;">27.7 °C</span>
<span class="t r b" style="left:714px;top:1002px;width:120px;">44.9 °C</span>
<div style="left:41px;top:1034px;width:799px;height:1px;background:#f0f0f0"></div>
<div style="left:25px;top:1034px;width:16px;height:1px;background:#e9e9e9"></div>
<svg class="ic" style="left:25px;top:1018px" width="16" height="16" viewBox="0 0 16 16"><rect x="7.2" y="1" width="1.8" height="4" fill="#d8d8d8"/><rect x="7.2" y="5" width="1.8" height="7" fill="#cf2a2a"/><circle cx="8.1" cy="12.7" r="2" fill="#d40f0f"/></svg>
<div style="left:566px;top:1018px;width:91px;height:16px;background:#d1e5fb"></div>
<span class="t " style="left:43px;top:1018px;">CPU IOD Hotspot</span>
<span class="t r " style="left:531px;top:1018px;width:120px;">48.2 °C</span>
<span class="t r " style="left:620px;top:1018px;width:120px;">40.5 °C</span>
<span class="t r " style="left:714px;top:1018px;width:120px;">50.5 °C</span>
<div style="left:41px;top:1035px;width:799px;height:16px;background:#f0f0f0"></div>
<div style="left:41px;top:1051px;width:799px;height:1px;background:#f0f0f0"></div>
<div style="left:25px;top:1051px;width:16px;height:1px;background:#e9e9e9"></div>
<svg class="ic" style="left:25px;top:1035px" width="16" height="16" viewBox="0 0 16 16"><rect x="7.2" y="1" width="1.8" height="4" fill="#d8d8d8"/><rect x="7.2" y="5" width="1.8" height="7" fill="#cf2a2a"/><circle cx="8.1" cy="12.7" r="2" fill="#d40f0f"/></svg>
<div style="left:566px;top:1035px;width:91px;height:16px;background:#d1e5fb"></div>
<span class="t " style="left:43px;top:1035px;">Średnia IOD procesora</span>
<span class="t r " style="left:531px;top:1035px;width:120px;">40.1 °C</span>
<span class="t r " style="left:620px;top:1035px;width:120px;">36.3 °C</span>
<span class="t r " style="left:714px;top:1035px;width:120px;">42.1 °C</span>
<div style="left:41px;top:1068px;width:799px;height:1px;background:#f0f0f0"></div>
<div style="left:25px;top:1068px;width:16px;height:1px;background:#e9e9e9"></div>
<svg class="ic" style="left:25px;top:1052px" width="16" height="16" viewBox="0 0 16 16"><rect x="7.2" y="1" width="1.8" height="4" fill="#d8d8d8"/><rect x="7.2" y="5" width="1.8" height="7" fill="#cf2a2a"/><circle cx="8.1" cy="12.7" r="2" fill="#d40f0f"/></svg>
<div style="left:566px;top:1052px;width:91px;height:16px;background:#d1e5fb"></div>
<span class="t " style="left:43px;top:1052px;">CPU VDDCR_VDD VRM (SVI3 TFN)</span>
<span class="t r " style="left:531px;top:1052px;width:120px;">42.0 °C</span>
<span class="t r " style="left:620px;top:1052px;width:120px;">36.6 °C</span>
<span class="t r " style="left:714px;top:1052px;width:120px;">47.0 °C</span>
<div style="left:41px;top:1069px;width:799px;height:16px;background:#f0f0f0"></div>
<div style="left:41px;top:1085px;width:799px;height:1px;background:#f0f0f0"></div>
<div style="left:25px;top:1085px;width:16px;height:1px;background:#e9e9e9"></div>
<svg class="ic" style="left:25px;top:1069px" width="16" height="16" viewBox="0 0 16 16"><rect x="7.2" y="1" width="1.8" height="4" fill="#d8d8d8"/><rect x="7.2" y="5" width="1.8" height="7" fill="#cf2a2a"/><circle cx="8.1" cy="12.7" r="2" fill="#d40f0f"/></svg>
<div style="left:566px;top:1069px;width:91px;height:16px;background:#d1e5fb"></div>
<span class="t " style="left:43px;top:1069px;">CPU VDDCR_SOC VRM (SVI3 TFN)</span>
<span class="t r " style="left:531px;top:1069px;width:120px;">40.0 °C</span>
<span class="t r " style="left:620px;top:1069px;width:120px;">35.0 °C</span>
<span class="t r " style="left:714px;top:1069px;width:120px;">46.0 °C</span>
<div style="left:41px;top:1102px;width:799px;height:1px;background:#f0f0f0"></div>
<div style="left:25px;top:1102px;width:16px;height:1px;background:#e9e9e9"></div>
<svg class="ic" style="left:25px;top:1086px" width="16" height="16" viewBox="0 0 16 16"><rect x="7.2" y="1" width="1.8" height="4" fill="#d8d8d8"/><rect x="7.2" y="5" width="1.8" height="7" fill="#cf2a2a"/><circle cx="8.1" cy="12.7" r="2" fill="#d40f0f"/></svg>
<div style="left:566px;top:1086px;width:91px;height:16px;background:#d1e5fb"></div>
<span class="t " style="left:43px;top:1086px;">CPU VDD_MISC VRM (SVI3 TFN)</span>
<span class="t r " style="left:531px;top:1086px;width:120px;">40.0 °C</span>
<span class="t r " style="left:620px;top:1086px;width:120px;">38.0 °C</span>
<span class="t r " style="left:714px;top:1086px;width:120px;">45.0 °C</span>
<div style="left:41px;top:1103px;width:799px;height:16px;background:#f0f0f0"></div>
<div style="left:41px;top:1119px;width:799px;height:1px;background:#f0f0f0"></div>
<div style="left:25px;top:1119px;width:16px;height:1px;background:#e9e9e9"></div>
<svg class="ic" style="left:25px;top:1103px" width="16" height="16" viewBox="0 0 16 16"><path d="M8.4 0.8H12.2L9.4 6.2L12.2 6.4L4.2 15.6L7 9.2L4.4 9Z" fill="#e9b30c"/></svg>
<div style="left:566px;top:1103px;width:91px;height:16px;background:#d1e5fb"></div>
<span class="t b" style="left:43px;top:1104px;">9800X3D Power</span>
<span class="t r b" style="left:531px;top:1104px;width:120px;">1.069 V</span>
<span class="t r b" style="left:620px;top:1104px;width:120px;">0.756 V</span>
<span class="t r b" style="left:714px;top:1104px;width:120px;">1.189 V</span>
<div style="left:41px;top:1136px;width:799px;height:1px;background:#f0f0f0"></div>
<div style="left:25px;top:1136px;width:16px;height:1px;background:#e9e9e9"></div>
<svg class="ic" style="left:25px;top:1120px" width="16" height="16" viewBox="0 0 16 16"><path d="M8.4 0.8H12.2L9.4 6.2L12.2 6.4L4.2 15.6L7 9.2L4.4 9Z" fill="#e9b30c"/></svg>
<div style="left:566px;top:1120px;width:91px;height:16px;background:#d1e5fb"></div>
<span class="t b" style="left:43px;top:1121px;">CPU VDDCR_SOC Napięcie (SVI3 TFN)</span>
<span class="t r b" style="left:531px;top:1121px;width:120px;">1.190 V</span>
<span class="t r b" style="left:620px;top:1121px;width:120px;">1.188 V</span>
<span class="t r b" style="left:714px;top:1121px;width:120px;">1.192 V</span>
<div style="left:41px;top:1137px;width:799px;height:16px;background:#f0f0f0"></div>
<div style="left:41px;top:1153px;width:799px;height:1px;background:#f0f0f0"></div>
<div style="left:25px;top:1153px;width:16px;height:1px;background:#e9e9e9"></div>
<svg class="ic" style="left:25px;top:1137px" width="16" height="16" viewBox="0 0 16 16"><path d="M8.4 0.8H12.2L9.4 6.2L12.2 6.4L4.2 15.6L7 9.2L4.4 9Z" fill="#e9b30c"/></svg>
<span class="t " style="left:43px;top:1137px;">CPU VDD_MISC Napięcie (SVI3 TFN)</span>
<span class="t r " style="left:531px;top:1137px;width:120px;">1.100 V</span>
<span class="t r " style="left:620px;top:1137px;width:120px;">1.100 V</span>
<span class="t r " style="left:714px;top:1137px;width:120px;">1.100 V</span>
<div style="left:41px;top:1170px;width:799px;height:1px;background:#f0f0f0"></div>
<div style="left:25px;top:1170px;width:16px;height:1px;background:#e9e9e9"></div>
<svg class="ic" style="left:25px;top:1154px" width="16" height="16" viewBox="0 0 16 16"><path d="M8.4 0.8H12.2L9.4 6.2L12.2 6.4L4.2 15.6L7 9.2L4.4 9Z" fill="#e9b30c"/></svg>
<div style="left:566px;top:1154px;width:91px;height:16px;background:#d1e5fb"></div>
<span class="t " style="left:43px;top:1154px;">Prąd rdzenia procesora (SVI3 TFN)</span>
<span class="t r " style="left:531px;top:1154px;width:120px;">74.207 A</span>
<span class="t r " style="left:620px;top:1154px;width:120px;">1.503 A</span>
<span class="t r " style="left:714px;top:1154px;width:120px;">80.506 A</span>
<div style="left:41px;top:1171px;width:799px;height:16px;background:#f0f0f0"></div>
<div style="left:41px;top:1187px;width:799px;height:1px;background:#f0f0f0"></div>
<div style="left:25px;top:1187px;width:16px;height:1px;background:#e9e9e9"></div>
<svg class="ic" style="left:25px;top:1171px" width="16" height="16" viewBox="0 0 16 16"><path d="M8.4 0.8H12.2L9.4 6.2L12.2 6.4L4.2 15.6L7 9.2L4.4 9Z" fill="#e9b30c"/></svg>
<div style="left:566px;top:1171px;width:91px;height:16px;background:#d1e5fb"></div>
<span class="t " style="left:43px;top:1171px;">Prąd SoC (SVI3 TFN)</span>
<span class="t r " style="left:531px;top:1171px;width:120px;">12.399 A</span>
<span class="t r " style="left:620px;top:1171px;width:120px;">9.409 A</span>
<span class="t r " style="left:714px;top:1171px;width:120px;">14.244 A</span>
<div style="left:41px;top:1204px;width:799px;height:1px;background:#f0f0f0"></div>
<div style="left:25px;top:1204px;width:16px;height:1px;background:#e9e9e9"></div>
<svg class="ic" style="left:25px;top:1188px" width="16" height="16" viewBox="0 0 16 16"><path d="M8.4 0.8H12.2L9.4 6.2L12.2 6.4L4.2 15.6L7 9.2L4.4 9Z" fill="#e9b30c"/></svg>
<div style="left:566px;top:1188px;width:91px;height:16px;background:#d1e5fb"></div>
<span class="t b" style="left:43px;top:1189px;">CPU TDC</span>
<span class="t r b" style="left:531px;top:1189px;width:120px;">74.209 A</span>
<span class="t r b" style="left:620px;top:1189px;width:120px;">1.500 A</span>
<span class="t r b" style="left:714px;top:1189px;width:120px;">80.503 A</span>
<div style="left:41px;top:1205px;width:799px;height:16px;background:#f0f0f0"></div>
<div style="left:41px;top:1221px;width:799px;height:1px;background:#f0f0f0"></div>
<div style="left:25px;top:1221px;width:16px;height:1px;background:#e9e9e9"></div>
<svg class="ic" style="left:25px;top:1205px" width="16" height="16" viewBox="0 0 16 16"><path d="M8.4 0.8H12.2L9.4 6.2L12.2 6.4L4.2 15.6L7 9.2L4.4 9Z" fill="#e9b30c"/></svg>
<div style="left:566px;top:1205px;width:91px;height:16px;background:#d1e5fb"></div>
<span class="t b" style="left:43px;top:1206px;">CPU EDC</span>
<span class="t r b" style="left:531px;top:1206px;width:120px;">102.500 A</span>
<span class="t r b" style="left:620px;top:1206px;width:120px;">21.750 A</span>
<span class="t r b" style="left:714px;top:1206px;width:120px;">114.000 A</span>
<div style="left:41px;top:1238px;width:799px;height:1px;background:#f0f0f0"></div>
<div style="left:25px;top:1238px;width:16px;height:1px;background:#e9e9e9"></div>
<svg class="ic" style="left:25px;top:1222px" width="16" height="16" viewBox="0 0 16 16"><path d="M8.4 0.8H12.2L9.4 6.2L12.2 6.4L4.2 15.6L7 9.2L4.4 9Z" fill="#e9b30c"/></svg>
<div style="left:566px;top:1222px;width:91px;height:16px;background:#d1e5fb"></div>
<span class="t " style="left:43px;top:1222px;">Prąd MISC (SVI3 TFN)</span>
<span class="t r " style="left:531px;top:1222px;width:120px;">6.487 A</span>
<span class="t r " style="left:620px;top:1222px;width:120px;">4.551 A</span>
<span class="t r " style="left:714px;top:1222px;width:120px;">8.781 A</span>
<div style="left:41px;top:1239px;width:799px;height:16px;background:#f0f0f0"></div>
<div style="left:41px;top:1255px;width:799px;height:1px;background:#f0f0f0"></div>
<div style="left:25px;top:1255px;width:16px;height:1px;background:#e9e9e9"></div>
<svg class="ic" style="left:25px;top:1239px" width="16" height="16" viewBox="0 0 16 16"><path d="M8.4 0.8H12.2L9.4 6.2L12.2 6.4L4.2 15.6L7 9.2L4.4 9Z" fill="#e9b30c"/></svg>
<div style="left:566px;top:1239px;width:91px;height:16px;background:#d1e5fb"></div>
<span class="t b" style="left:43px;top:1240px;">Całkowite zużycie mocy przez procesor</span>
<span class="t r b" style="left:531px;top:1240px;width:120px;">112.688 W</span>
<span class="t r b" style="left:620px;top:1240px;width:120px;">24.512 W</span>
<span class="t r b" style="left:714px;top:1240px;width:120px;">123.062 W</span>
<div style="left:57px;top:1272px;width:783px;height:1px;background:#f0f0f0"></div>
<div style="left:41px;top:1272px;width:16px;height:1px;background:#e9e9e9"></div>
<svg class="ic" style="left:25px;top:1256px" width="12" height="16" viewBox="0 0 12 16"><path d="M3 2.5L8.5 8L3 13.5" fill="none" stroke="#2a2a2a" stroke-width="1"/></svg>
<svg class="ic" style="left:41px;top:1256px" width="16" height="16" viewBox="0 0 16 16"><path d="M8.4 0.8H12.2L9.4 6.2L12.2 6.4L4.2 15.6L7 9.2L4.4 9Z" fill="#e9b30c"/></svg>
<div style="left:566px;top:1256px;width:91px;height:16px;background:#d1e5fb"></div>
<span class="t " style="left:59px;top:1256px;">Pobór mocy rdzeni</span>
<span class="t r " style="left:531px;top:1256px;width:120px;">9.241 W</span>
<span class="t r " style="left:620px;top:1256px;width:120px;">0.011 W</span>
<span class="t r " style="left:714px;top:1256px;width:120px;">11.390 W</span>
<div style="left:41px;top:1273px;width:799px;height:16px;background:#f0f0f0"></div>
<div style="left:41px;top:1289px;width:799px;height:1px;background:#f0f0f0"></div>
<div style="left:25px;top:1289px;width:16px;height:1px;background:#e9e9e9"></div>
<svg class="ic" style="left:25px;top:1273px" width="16" height="16" viewBox="0 0 16 16"><path d="M8.4 0.8H12.2L9.4 6.2L12.2 6.4L4.2 15.6L7 9.2L4.4 9Z" fill="#e9b30c"/></svg>
<div style="left:566px;top:1273px;width:91px;height:16px;background:#d1e5fb"></div>
<span class="t " style="left:43px;top:1273px;">CPU Pobór mocy rdzenia (SVI3 TFN)</span>
<span class="t r " style="left:531px;top:1273px;width:120px;">79.322 W</span>
<span class="t r " style="left:620px;top:1273px;width:120px;">1.565 W</span>
<span class="t r " style="left:714px;top:1273px;width:120px;">88.868 W</span>
<div style="left:41px;top:1306px;width:799px;height:1px;background:#f0f0f0"></div>
<div style="left:25px;top:1306px;width:16px;height:1px;background:#e9e9e9"></div>
<svg class="ic" style="left:25px;top:1290px" width="16" height="16" viewBox="0 0 16 16"><path d="M8.4 0.8H12.2L9.4 6.2L12.2 6.4L4.2 15.6L7 9.2L4.4 9Z" fill="#e9b30c"/></svg>
<div style="left:566px;top:1290px;width:91px;height:16px;background:#d1e5fb"></div>
<span class="t " style="left:43px;top:1290px;">Pobór mocy SoC procesora (SVI3 TFN)</span>
<span class="t r " style="left:531px;top:1290px;width:120px;">14.754 W</span>
<span class="t r " style="left:620px;top:1290px;width:120px;">11.211 W</span>
<span class="t r " style="left:714px;top:1290px;width:120px;">16.924 W</span>
<div style="left:41px;top:1307px;width:799px;height:16px;background:#f0f0f0"></div>
<div style="left:41px;top:1323px;width:799px;height:1px;background:#f0f0f0"></div>
<div style="left:25px;top:1323px;width:16px;height:1px;background:#e9e9e9"></div>
<svg class="ic" style="left:25px;top:1307px" width="16" height="16" viewBox="0 0 16 16"><path d="M8.4 0.8H12.2L9.4 6.2L12.2 6.4L4.2 15.6L7 9.2L4.4 9Z" fill="#e9b30c"/></svg>
<div style="left:566px;top:1307px;width:91px;height:16px;background:#d1e5fb"></div>
<span class="t " style="left:43px;top:1307px;">Core+SoC+MISC Pobór mocy (SVI3 TFN)</span>
<span class="t r " style="left:531px;top:1307px;width:120px;">101.211 W</span>
<span class="t r " style="left:620px;top:1307px;width:120px;">17.782 W</span>
<span class="t r " style="left:714px;top:1307px;width:120px;">111.206 W</span>
<div style="left:41px;top:1340px;width:799px;height:1px;background:#f0f0f0"></div>
<div style="left:25px;top:1340px;width:16px;height:1px;background:#e9e9e9"></div>
<svg class="ic" style="left:25px;top:1324px" width="16" height="16" viewBox="0 0 16 16"><path d="M8.4 0.8H12.2L9.4 6.2L12.2 6.4L4.2 15.6L7 9.2L4.4 9Z" fill="#e9b30c"/></svg>
<div style="left:566px;top:1324px;width:91px;height:16px;background:#d1e5fb"></div>
<span class="t b" style="left:43px;top:1325px;">CPU PPT</span>
<span class="t r b" style="left:531px;top:1325px;width:120px;">108.923 W</span>
<span class="t r b" style="left:620px;top:1325px;width:120px;">23.845 W</span>
<span class="t r b" style="left:714px;top:1325px;width:120px;">118.908 W</span>
<div style="left:41px;top:1341px;width:799px;height:16px;background:#f0f0f0"></div>
<div style="left:41px;top:1357px;width:799px;height:1px;background:#f0f0f0"></div>
<div style="left:25px;top:1357px;width:16px;height:1px;background:#e9e9e9"></div>
<svg class="ic" style="left:25px;top:1341px" width="16" height="16" viewBox="0 0 16 16"><path d="M13.2 9.8A5.3 5.3 0 1 1 11.6 4.0" fill="none" stroke="#4d5257" stroke-width="1.4"/><circle cx="12.3" cy="4.6" r="1.3" fill="#1e1e1e"/><path d="M8 5.2V8.6L10 10.4" fill="none" stroke="#3d4247" stroke-width="1.3"/></svg>
<span class="t b" style="left:43px;top:1342px;">Infinity Fabric</span>
<span class="t r b" style="left:531px;top:1342px;width:120px;">2,173.5 MHz</span>
<span class="t r b" style="left:620px;top:1342px;width:120px;">2,173.5 MHz</span>
<span class="t r b" style="left:714px;top:1342px;width:120px;">2,173.5 MHz</span>
<div style="left:41px;top:1374px;width:799px;height:1px;background:#f0f0f0"></div>
<div style="left:25px;top:1374px;width:16px;height:1px;background:#e9e9e9"></div>
<svg class="ic" style="left:25px;top:1358px" width="16" height="16" viewBox="0 0 16 16"><path d="M13.2 9.8A5.3 5.3 0 1 1 11.6 4.0" fill="none" stroke="#4d5257" stroke-width="1.4"/><circle cx="12.3" cy="4.6" r="1.3" fill="#1e1e1e"/><path d="M8 5.2V8.6L10 10.4" fill="none" stroke="#3d4247" stroke-width="1.3"/></svg>
<span class="t b" style="left:43px;top:1359px;">DDR5 2x16 Clock</span>
<span class="t r b" style="left:531px;top:1359px;width:120px;">3,001.5 MHz</span>
<span class="t r b" style="left:620px;top:1359px;width:120px;">3,001.5 MHz</span>
<span class="t r b" style="left:714px;top:1359px;width:120px;">3,001.5 MHz</span>
<div style="left:57px;top:1375px;width:783px;height:16px;background:#f0f0f0"></div>
<div style="left:57px;top:1391px;width:783px;height:1px;background:#f0f0f0"></div>
<div style="left:41px;top:1391px;width:16px;height:1px;background:#e9e9e9"></div>
<svg class="ic" style="left:25px;top:1375px" width="12" height="16" viewBox="0 0 12 16"><path d="M3 2.5L8.5 8L3 13.5" fill="none" stroke="#2a2a2a" stroke-width="1"/></svg>
<svg class="ic" style="left:41px;top:1375px" width="16" height="16" viewBox="0 0 16 16"><path d="M13.2 9.8A5.3 5.3 0 1 1 11.6 4.0" fill="none" stroke="#4d5257" stroke-width="1.4"/><circle cx="12.3" cy="4.6" r="1.3" fill="#1e1e1e"/><path d="M8 5.2V8.6L10 10.4" fill="none" stroke="#3d4247" stroke-width="1.3"/></svg>
<div style="left:566px;top:1375px;width:91px;height:16px;background:#d1e5fb"></div>
<span class="t " style="left:59px;top:1375px;">L3 Zegary</span>
<span class="t r " style="left:531px;top:1375px;width:120px;">4,964.0 MHz</span>
<span class="t r " style="left:620px;top:1375px;width:120px;">1,858.7 MHz</span>
<span class="t r " style="left:714px;top:1375px;width:120px;">5,900.0 MHz</span>
<div style="left:842px;top:25px;width:16px;height:1359px;background:#f0f0f0"></div>
<div style="left:849px;top:42px;width:2px;height:1307px;background:#858585"></div>
</div>
<div style="left:0px;top:0px;width:860px;height:1px;background:#7b838d"></div>
<div style="left:0px;top:1361px;width:860px;height:1px;background:#7b838d"></div>
<div style="left:0px;top:0px;width:1px;height:1362px;background:#7b838d"></div>
<div style="left:859px;top:0px;width:1px;height:1362px;background:#7b838d"></div>
</div>
<div class="pn" style="left:860px;top:23px;width:860px;height:1362px">
<div style="position:absolute;left:-860px;top:-23px;width:3440px;height:1440px">
<span class="t hd" style="left:867px;top:26px;">Czujnik</span>
<span class="t r hd" style="left:1461px;top:26px;width:90px;">Aktualny</span>
<span class="t r hd" style="left:1541px;top:26px;width:90px;">Minimum</span>
<span class="t r hd" style="left:1621px;top:26px;width:90px;">Maksimum</span>
<div style="left:1476px;top:25px;width:1px;height:23px;background:#e5e5e5"></div>
<div style="left:1556px;top:25px;width:1px;height:23px;background:#e5e5e5"></div>
<div style="left:1636px;top:25px;width:1px;height:23px;background:#e5e5e5"></div>
<div style="left:1716px;top:25px;width:1px;height:23px;background:#e5e5e5"></div>
<div style="left:900px;top:48px;width:817px;height:16px;background:#f0f0f0"></div>
<div style="left:900px;top:64px;width:817px;height:1px;background:#f0f0f0"></div>
<div style="left:884px;top:64px;width:16px;height:1px;background:#e9e9e9"></div>
<svg class="ic" style="left:884px;top:48px" width="16" height="16" viewBox="0 0 16 16"><path d="M13.2 9.8A5.3 5.3 0 1 1 11.6 4.0" fill="none" stroke="#4d5257" stroke-width="1.4"/><circle cx="12.3" cy="4.6" r="1.3" fill="#1e1e1e"/><path d="M8 5.2V8.6L10 10.4" fill="none" stroke="#3d4247" stroke-width="1.3"/></svg>
<span class="t " style="left:902px;top:48px;">Limit częstotliwości - Globalny</span>
<span class="t r " style="left:1431px;top:48px;width:120px;">5,450.1 MHz</span>
<span class="t r " style="left:1511px;top:48px;width:120px;">4,844.7 MHz</span>
<span class="t r " style="left:1591px;top:48px;width:120px;">5,450.1 MHz</span>
<div style="left:900px;top:81px;width:817px;height:1px;background:#f0f0f0"></div>
<div style="left:884px;top:81px;width:16px;height:1px;background:#e9e9e9"></div>
<svg class="ic" style="left:884px;top:65px" width="16" height="16" viewBox="0 0 16 16"><path d="M13.2 9.8A5.3 5.3 0 1 1 11.6 4.0" fill="none" stroke="#4d5257" stroke-width="1.4"/><circle cx="12.3" cy="4.6" r="1.3" fill="#1e1e1e"/><path d="M8 5.2V8.6L10 10.4" fill="none" stroke="#3d4247" stroke-width="1.3"/></svg>
<div style="left:1477px;top:65px;width:80px;height:16px;background:#d1e5fb"></div>
<span class="t " style="left:902px;top:65px;">CPU PPT Limit</span>
<span class="t r " style="left:1431px;top:65px;width:120px;">67.2 %</span>
<span class="t r " style="left:1511px;top:65px;width:120px;">14.7 %</span>
<span class="t r " style="left:1591px;top:65px;width:120px;">73.4 %</span>
<div style="left:900px;top:82px;width:817px;height:16px;background:#f0f0f0"></div>
<div style="left:900px;top:98px;width:817px;height:1px;background:#f0f0f0"></div>
<div style="left:884px;top:98px;width:16px;height:1px;background:#e9e9e9"></div>
<svg class="ic" style="left:884px;top:82px" width="16" height="16" viewBox="0 0 16 16"><path d="M13.2 9.8A5.3 5.3 0 1 1 11.6 4.0" fill="none" stroke="#4d5257" stroke-width="1.4"/><circle cx="12.3" cy="4.6" r="1.3" fill="#1e1e1e"/><path d="M8 5.2V8.6L10 10.4" fill="none" stroke="#3d4247" stroke-width="1.3"/></svg>
<div style="left:1477px;top:82px;width:80px;height:16px;background:#d1e5fb"></div>
<span class="t " style="left:902px;top:82px;">Limit TDC procesora</span>
<span class="t r " style="left:1431px;top:82px;width:120px;">61.8 %</span>
<span class="t r " style="left:1511px;top:82px;width:120px;">1.3 %</span>
<span class="t r " style="left:1591px;top:82px;width:120px;">67.1 %</span>
<div style="left:900px;top:115px;width:817px;height:1px;background:#f0f0f0"></div>
<div style="left:884px;top:115px;width:16px;height:1px;background:#e9e9e9"></div>
<svg class="ic" style="left:884px;top:99px" width="16" height="16" viewBox="0 0 16 16"><path d="M13.2 9.8A5.3 5.3 0 1 1 11.6 4.0" fill="none" stroke="#4d5257" stroke-width="1.4"/><circle cx="12.3" cy="4.6" r="1.3" fill="#1e1e1e"/><path d="M8 5.2V8.6L10 10.4" fill="none" stroke="#3d4247" stroke-width="1.3"/></svg>
<div style="left:1477px;top:99px;width:80px;height:16px;background:#d1e5fb"></div>
<span class="t " style="left:902px;top:99px;">Limit EDC procesora</span>
<span class="t r " style="left:1431px;top:99px;width:120px;">56.9 %</span>
<span class="t r " style="left:1511px;top:99px;width:120px;">12.1 %</span>
<span class="t r " style="left:1591px;top:99px;width:120px;">63.3 %</span>
<div style="left:900px;top:116px;width:817px;height:16px;background:#f0f0f0"></div>
<div style="left:900px;top:132px;width:817px;height:1px;background:#f0f0f0"></div>
<div style="left:884px;top:132px;width:16px;height:1px;background:#e9e9e9"></div>
<svg class="ic" style="left:884px;top:116px" width="16" height="16" viewBox="0 0 16 16"><path d="M13.2 9.8A5.3 5.3 0 1 1 11.6 4.0" fill="none" stroke="#4d5257" stroke-width="1.4"/><circle cx="12.3" cy="4.6" r="1.3" fill="#1e1e1e"/><path d="M8 5.2V8.6L10 10.4" fill="none" stroke="#3d4247" stroke-width="1.3"/></svg>
<div style="left:1477px;top:116px;width:80px;height:16px;background:#d1e5fb"></div>
<span class="t " style="left:902px;top:116px;">CPU PPT FAST Limit</span>
<span class="t r " style="left:1431px;top:116px;width:120px;">67.2 %</span>
<span class="t r " style="left:1511px;top:116px;width:120px;">14.7 %</span>
<span class="t r " style="left:1591px;top:116px;width:120px;">73.4 %</span>
<div style="left:900px;top:149px;width:817px;height:1px;background:#f0f0f0"></div>
<div style="left:884px;top:149px;width:16px;height:1px;background:#e9e9e9"></div>
<svg class="ic" style="left:884px;top:133px" width="16" height="16" viewBox="0 0 16 16"><path d="M13.2 9.8A5.3 5.3 0 1 1 11.6 4.0" fill="none" stroke="#4d5257" stroke-width="1.4"/><circle cx="12.3" cy="4.6" r="1.3" fill="#1e1e1e"/><path d="M8 5.2V8.6L10 10.4" fill="none" stroke="#3d4247" stroke-width="1.3"/></svg>
<div style="left:1477px;top:133px;width:80px;height:16px;background:#d1e5fb"></div>
<span class="t " style="left:902px;top:133px;">Thermal Limit</span>
<span class="t r " style="left:1431px;top:133px;width:120px;">63.7 %</span>
<span class="t r " style="left:1511px;top:133px;width:120px;">43.1 %</span>
<span class="t r " style="left:1591px;top:133px;width:120px;">68.4 %</span>
<div style="left:900px;top:150px;width:817px;height:16px;background:#f0f0f0"></div>
<div style="left:900px;top:166px;width:817px;height:1px;background:#f0f0f0"></div>
<div style="left:884px;top:166px;width:16px;height:1px;background:#e9e9e9"></div>
<svg class="ic" style="left:884px;top:150px" width="16" height="16" viewBox="0 0 16 16"><path d="M13.2 9.8A5.3 5.3 0 1 1 11.6 4.0" fill="none" stroke="#4d5257" stroke-width="1.4"/><circle cx="12.3" cy="4.6" r="1.3" fill="#1e1e1e"/><path d="M8 5.2V8.6L10 10.4" fill="none" stroke="#3d4247" stroke-width="1.3"/></svg>
<span class="t " style="left:902px;top:150px;">Dławienie termiczne (HTC)</span>
<span class="t r " style="left:1431px;top:150px;width:120px;">Nie</span>
<span class="t r " style="left:1511px;top:150px;width:120px;">Nie</span>
<span class="t r " style="left:1591px;top:150px;width:120px;">Nie</span>
<div style="left:900px;top:183px;width:817px;height:1px;background:#f0f0f0"></div>
<div style="left:884px;top:183px;width:16px;height:1px;background:#e9e9e9"></div>
<svg class="ic" style="left:884px;top:167px" width="16" height="16" viewBox="0 0 16 16"><path d="M13.2 9.8A5.3 5.3 0 1 1 11.6 4.0" fill="none" stroke="#4d5257" stroke-width="1.4"/><circle cx="12.3" cy="4.6" r="1.3" fill="#1e1e1e"/><path d="M8 5.2V8.6L10 10.4" fill="none" stroke="#3d4247" stroke-width="1.3"/></svg>
<span class="t " style="left:902px;top:167px;">Dławienie termiczne (PROCHOT CPU)</span>
<span class="t r " style="left:1431px;top:167px;width:120px;">Nie</span>
<span class="t r " style="left:1511px;top:167px;width:120px;">Nie</span>
<span class="t r " style="left:1591px;top:167px;width:120px;">Nie</span>
<div style="left:900px;top:184px;width:817px;height:16px;background:#f0f0f0"></div>
<div style="left:900px;top:200px;width:817px;height:1px;background:#f0f0f0"></div>
<div style="left:884px;top:200px;width:16px;height:1px;background:#e9e9e9"></div>
<svg class="ic" style="left:884px;top:184px" width="16" height="16" viewBox="0 0 16 16"><path d="M13.2 9.8A5.3 5.3 0 1 1 11.6 4.0" fill="none" stroke="#4d5257" stroke-width="1.4"/><circle cx="12.3" cy="4.6" r="1.3" fill="#1e1e1e"/><path d="M8 5.2V8.6L10 10.4" fill="none" stroke="#3d4247" stroke-width="1.3"/></svg>
<span class="t " style="left:902px;top:184px;">Dławienie termiczne (PROCHOT EXT)</span>
<span class="t r " style="left:1431px;top:184px;width:120px;">Nie</span>
<span class="t r " style="left:1511px;top:184px;width:120px;">Nie</span>
<span class="t r " style="left:1591px;top:184px;width:120px;">Nie</span>
<div style="left:900px;top:217px;width:817px;height:1px;background:#f0f0f0"></div>
<div style="left:884px;top:217px;width:16px;height:1px;background:#e9e9e9"></div>
<svg class="ic" style="left:884px;top:201px" width="16" height="16" viewBox="0 0 16 16"><path d="M13.2 9.8A5.3 5.3 0 1 1 11.6 4.0" fill="none" stroke="#4d5257" stroke-width="1.4"/><circle cx="12.3" cy="4.6" r="1.3" fill="#1e1e1e"/><path d="M8 5.2V8.6L10 10.4" fill="none" stroke="#3d4247" stroke-width="1.3"/></svg>
<span class="t " style="left:902px;top:201px;">Przepustowość odczytu DRAM</span>
<div style="left:900px;top:218px;width:817px;height:16px;background:#f0f0f0"></div>
<div style="left:900px;top:234px;width:817px;height:1px;background:#f0f0f0"></div>
<div style="left:884px;top:234px;width:16px;height:1px;background:#e9e9e9"></div>
<svg class="ic" style="left:884px;top:218px" width="16" height="16" viewBox="0 0 16 16"><path d="M13.2 9.8A5.3 5.3 0 1 1 11.6 4.0" fill="none" stroke="#4d5257" stroke-width="1.4"/><circle cx="12.3" cy="4.6" r="1.3" fill="#1e1e1e"/><path d="M8 5.2V8.6L10 10.4" fill="none" stroke="#3d4247" stroke-width="1.3"/></svg>
<span class="t " style="left:902px;top:218px;">Przepustowość zapisu DRAM</span>
<div style="left:900px;top:251px;width:817px;height:1px;background:#f0f0f0"></div>
<div style="left:884px;top:251px;width:16px;height:1px;background:#e9e9e9"></div>
<svg class="ic" style="left:884px;top:235px" width="16" height="16" viewBox="0 0 16 16"><path d="M13.2 9.8A5.3 5.3 0 1 1 11.6 4.0" fill="none" stroke="#4d5257" stroke-width="1.4"/><circle cx="12.3" cy="4.6" r="1.3" fill="#1e1e1e"/><path d="M8 5.2V8.6L10 10.4" fill="none" stroke="#3d4247" stroke-width="1.3"/></svg>
<span class="t " style="left:902px;top:235px;">Średnia liczba aktywnych rdzeni</span>
<div style="left:900px;top:252px;width:817px;height:16px;background:#f0f0f0"></div>
<div style="left:900px;top:268px;width:817px;height:1px;background:#f0f0f0"></div>
<div style="left:884px;top:268px;width:16px;height:1px;background:#e9e9e9"></div>
<div style="left:884px;top:269px;width:16px;height:16px;background:#f7f7f7"></div>
<div style="left:900px;top:269px;width:817px;height:16px;background:#dadada"></div>
<div style="left:900px;top:285px;width:817px;height:1px;background:#f0f0f0"></div>
<div style="left:884px;top:285px;width:16px;height:1px;background:#e9e9e9"></div>
<svg class="ic" style="left:866px;top:269px" width="14" height="16" viewBox="0 0 14 16"><path d="M1 5L7 11L13 5" fill="none" stroke="#303030" stroke-width="1"/></svg>
<svg class="ic" style="left:884px;top:269px" width="16" height="16" viewBox="0 0 16 16"><g fill="#a9a9a9"><rect x="2" y="3" width="2" height="1"/><rect x="2" y="6" width="2" height="1"/><rect x="2" y="9" width="2" height="1"/><rect x="2" y="12" width="2" height="1"/><rect x="12" y="3" width="2" height="1"/><rect x="12" y="6" width="2" height="1"/><rect x="12" y="9" width="2" height="1"/><rect x="12" y="12" width="2" height="1"/></g><rect x="4" y="1" width="8" height="14" rx="0.8" fill="#444"/><rect x="6.5" y="1" width="3" height="14" fill="#626262"/></svg>
<span class="t b" style="left:902px;top:270px;">ASUS TUF GAMING B650E-E WIFI (Nuvoton NCT6799D)</span>
<div style="left:900px;top:286px;width:817px;height:16px;background:#f0f0f0"></div>
<div style="left:900px;top:302px;width:817px;height:1px;background:#f0f0f0"></div>
<div style="left:884px;top:302px;width:16px;height:1px;background:#e9e9e9"></div>
<svg class="ic" style="left:884px;top:286px" width="16" height="16" viewBox="0 0 16 16"><rect x="7.2" y="1" width="1.8" height="4" fill="#d8d8d8"/><rect x="7.2" y="5" width="1.8" height="7" fill="#cf2a2a"/><circle cx="8.1" cy="12.7" r="2" fill="#d40f0f"/></svg>
<span class="t " style="left:902px;top:286px;">Płyta główna</span>
<div style="left:900px;top:319px;width:817px;height:1px;background:#f0f0f0"></div>
<div style="left:884px;top:319px;width:16px;height:1px;background:#e9e9e9"></div>
<svg class="ic" style="left:884px;top:303px" width="16" height="16" viewBox="0 0 16 16"><rect x="7.2" y="1" width="1.8" height="4" fill="#d8d8d8"/><rect x="7.2" y="5" width="1.8" height="7" fill="#cf2a2a"/><circle cx="8.1" cy="12.7" r="2" fill="#d40f0f"/></svg>
<span class="t " style="left:902px;top:303px;">CPU</span>
<div style="left:900px;top:320px;width:817px;height:16px;background:#f0f0f0"></div>
<div style="left:900px;top:336px;width:817px;height:1px;background:#f0f0f0"></div>
<div style="left:884px;top:336px;width:16px;height:1px;background:#e9e9e9"></div>
<svg class="ic" style="left:884px;top:320px" width="16" height="16" viewBox="0 0 16 16"><rect x="7.2" y="1" width="1.8" height="4" fill="#d8d8d8"/><rect x="7.2" y="5" width="1.8" height="7" fill="#cf2a2a"/><circle cx="8.1" cy="12.7" r="2" fill="#d40f0f"/></svg>
<span class="t " style="left:902px;top:320px;">Temp2</span>
<div style="left:900px;top:353px;width:817px;height:1px;background:#f0f0f0"></div>
<div style="left:884px;top:353px;width:16px;height:1px;background:#e9e9e9"></div>
<svg class="ic" style="left:884px;top:337px" width="16" height="16" viewBox="0 0 16 16"><rect x="7.2" y="1" width="1.8" height="4" fill="#d8d8d8"/><rect x="7.2" y="5" width="1.8" height="7" fill="#cf2a2a"/><circle cx="8.1" cy="12.7" r="2" fill="#d40f0f"/></svg>
<span class="t " style="left:902px;top:337px;">Temp3</span>
<div style="left:900px;top:354px;width:817px;height:16px;background:#f0f0f0"></div>
<div style="left:900px;top:370px;width:817px;height:1px;background:#f0f0f0"></div>
<div style="left:884px;top:370px;width:16px;height:1px;background:#e9e9e9"></div>
<svg class="ic" style="left:884px;top:354px" width="16" height="16" viewBox="0 0 16 16"><rect x="7.2" y="1" width="1.8" height="4" fill="#d8d8d8"/><rect x="7.2" y="5" width="1.8" height="7" fill="#cf2a2a"/><circle cx="8.1" cy="12.7" r="2" fill="#d40f0f"/></svg>
<span class="t " style="left:902px;top:354px;">Temp4</span>
<div style="left:900px;top:387px;width:817px;height:1px;background:#f0f0f0"></div>
<div style="left:884px;top:387px;width:16px;height:1px;background:#e9e9e9"></div>
<svg class="ic" style="left:884px;top:371px" width="16" height="16" viewBox="0 0 16 16"><rect x="7.2" y="1" width="1.8" height="4" fill="#d8d8d8"/><rect x="7.2" y="5" width="1.8" height="7" fill="#cf2a2a"/><circle cx="8.1" cy="12.7" r="2" fill="#d40f0f"/></svg>
<span class="t " style="left:902px;top:371px;">Temp5</span>
<div style="left:900px;top:388px;width:817px;height:16px;background:#f0f0f0"></div>
<div style="left:900px;top:404px;width:817px;height:1px;background:#f0f0f0"></div>
<div style="left:884px;top:404px;width:16px;height:1px;background:#e9e9e9"></div>
<svg class="ic" style="left:884px;top:388px" width="16" height="16" viewBox="0 0 16 16"><rect x="7.2" y="1" width="1.8" height="4" fill="#d8d8d8"/><rect x="7.2" y="5" width="1.8" height="7" fill="#cf2a2a"/><circle cx="8.1" cy="12.7" r="2" fill="#d40f0f"/></svg>
<span class="t " style="left:902px;top:388px;">Procesor (wartość ważona)</span>
<div style="left:900px;top:421px;width:817px;height:1px;background:#f0f0f0"></div>
<div style="left:884px;top:421px;width:16px;height:1px;background:#e9e9e9"></div>
<svg class="ic" style="left:884px;top:405px" width="16" height="16" viewBox="0 0 16 16"><rect x="7.2" y="1" width="1.8" height="4" fill="#d8d8d8"/><rect x="7.2" y="5" width="1.8" height="7" fill="#cf2a2a"/><circle cx="8.1" cy="12.7" r="2" fill="#d40f0f"/></svg>
<span class="t " style="left:902px;top:405px;">CPU (PECI)</span>
<div style="left:900px;top:422px;width:817px;height:16px;background:#f0f0f0"></div>
<div style="left:900px;top:438px;width:817px;height:1px;background:#f0f0f0"></div>
<div style="left:884px;top:438px;width:16px;height:1px;background:#e9e9e9"></div>
<svg class="ic" style="left:884px;top:422px" width="16" height="16" viewBox="0 0 16 16"><rect x="7.2" y="1" width="1.8" height="4" fill="#d8d8d8"/><rect x="7.2" y="5" width="1.8" height="7" fill="#cf2a2a"/><circle cx="8.1" cy="12.7" r="2" fill="#d40f0f"/></svg>
<span class="t " style="left:902px;top:422px;">CPU (PECI Calibrated)</span>
<div style="left:900px;top:455px;width:817px;height:1px;background:#f0f0f0"></div>
<div style="left:884px;top:455px;width:16px;height:1px;background:#e9e9e9"></div>
<svg class="ic" style="left:884px;top:439px" width="16" height="16" viewBox="0 0 16 16"><rect x="7.2" y="1" width="1.8" height="4" fill="#d8d8d8"/><rect x="7.2" y="5" width="1.8" height="7" fill="#cf2a2a"/><circle cx="8.1" cy="12.7" r="2" fill="#d40f0f"/></svg>
<span class="t " style="left:902px;top:439px;">Temp9</span>
<div style="left:900px;top:456px;width:817px;height:16px;background:#f0f0f0"></div>
<div style="left:900px;top:472px;width:817px;height:1px;background:#f0f0f0"></div>
<div style="left:884px;top:472px;width:16px;height:1px;background:#e9e9e9"></div>
<svg class="ic" style="left:884px;top:456px" width="16" height="16" viewBox="0 0 16 16"><rect x="7.2" y="1" width="1.8" height="4" fill="#d8d8d8"/><rect x="7.2" y="5" width="1.8" height="7" fill="#cf2a2a"/><circle cx="8.1" cy="12.7" r="2" fill="#d40f0f"/></svg>
<span class="t " style="left:902px;top:456px;">TSI0 (CPU)</span>
<div style="left:900px;top:489px;width:817px;height:1px;background:#f0f0f0"></div>
<div style="left:884px;top:489px;width:16px;height:1px;background:#e9e9e9"></div>
<svg class="ic" style="left:884px;top:473px" width="16" height="16" viewBox="0 0 16 16"><rect x="7.2" y="1" width="1.8" height="4" fill="#d8d8d8"/><rect x="7.2" y="5" width="1.8" height="7" fill="#cf2a2a"/><circle cx="8.1" cy="12.7" r="2" fill="#d40f0f"/></svg>
<span class="t " style="left:902px;top:473px;">AUXTIN5</span>
<div style="left:900px;top:490px;width:817px;height:16px;background:#f0f0f0"></div>
<div style="left:900px;top:506px;width:817px;height:1px;background:#f0f0f0"></div>
<div style="left:884px;top:506px;width:16px;height:1px;background:#e9e9e9"></div>
<svg class="ic" style="left:884px;top:490px" width="16" height="16" viewBox="0 0 16 16"><path d="M8.4 0.8H12.2L9.4 6.2L12.2 6.4L4.2 15.6L7 9.2L4.4 9Z" fill="#e9b30c"/></svg>
<span class="t " style="left:902px;top:490px;">Vcore</span>
<div style="left:900px;top:523px;width:817px;height:1px;background:#f0f0f0"></div>
<div style="left:884px;top:523px;width:16px;height:1px;background:#e9e9e9"></div>
<svg class="ic" style="left:884px;top:507px" width="16" height="16" viewBox="0 0 16 16"><path d="M8.4 0.8H12.2L9.4 6.2L12.2 6.4L4.2 15.6L7 9.2L4.4 9Z" fill="#e9b30c"/></svg>
<span class="t " style="left:902px;top:507px;">VIN1</span>
<div style="left:900px;top:524px;width:817px;height:16px;background:#f0f0f0"></div>
<div style="left:900px;top:540px;width:817px;height:1px;background:#f0f0f0"></div>
<div style="left:884px;top:540px;width:16px;height:1px;background:#e9e9e9"></div>
<svg class="ic" style="left:884px;top:524px" width="16" height="16" viewBox="0 0 16 16"><path d="M8.4 0.8H12.2L9.4 6.2L12.2 6.4L4.2 15.6L7 9.2L4.4 9Z" fill="#e9b30c"/></svg>
<span class="t " style="left:902px;top:524px;">AVSB</span>
<div style="left:900px;top:557px;width:817px;height:1px;background:#f0f0f0"></div>
<div style="left:884px;top:557px;width:16px;height:1px;background:#e9e9e9"></div>
<svg class="ic" style="left:884px;top:541px" width="16" height="16" viewBox="0 0 16 16"><path d="M8.4 0.8H12.2L9.4 6.2L12.2 6.4L4.2 15.6L7 9.2L4.4 9Z" fill="#e9b30c"/></svg>
<span class="t " style="left:902px;top:541px;">3VCC</span>
<div style="left:900px;top:558px;width:817px;height:16px;background:#f0f0f0"></div>
<div style="left:900px;top:574px;width:817px;height:1px;background:#f0f0f0"></div>
<div style="left:884px;top:574px;width:16px;height:1px;background:#e9e9e9"></div>
<svg class="ic" style="left:884px;top:558px" width="16" height="16" viewBox="0 0 16 16"><path d="M8.4 0.8H12.2L9.4 6.2L12.2 6.4L4.2 15.6L7 9.2L4.4 9Z" fill="#e9b30c"/></svg>
<span class="t " style="left:902px;top:558px;">VIN0</span>
<div style="left:900px;top:591px;width:817px;height:1px;background:#f0f0f0"></div>
<div style="left:884px;top:591px;width:16px;height:1px;background:#e9e9e9"></div>
<svg class="ic" style="left:884px;top:575px" width="16" height="16" viewBox="0 0 16 16"><path d="M8.4 0.8H12.2L9.4 6.2L12.2 6.4L4.2 15.6L7 9.2L4.4 9Z" fill="#e9b30c"/></svg>
<span class="t " style="left:902px;top:575px;">VIN8</span>
<div style="left:900px;top:592px;width:817px;height:16px;background:#f0f0f0"></div>
<div style="left:900px;top:608px;width:817px;height:1px;background:#f0f0f0"></div>
<div style="left:884px;top:608px;width:16px;height:1px;background:#e9e9e9"></div>
<svg class="ic" style="left:884px;top:592px" width="16" height="16" viewBox="0 0 16 16"><path d="M8.4 0.8H12.2L9.4 6.2L12.2 6.4L4.2 15.6L7 9.2L4.4 9Z" fill="#e9b30c"/></svg>
<span class="t " style="left:902px;top:592px;">VIN4</span>
<div style="left:900px;top:625px;width:817px;height:1px;background:#f0f0f0"></div>
<div style="left:884px;top:625px;width:16px;height:1px;background:#e9e9e9"></div>
<svg class="ic" style="left:884px;top:609px" width="16" height="16" viewBox="0 0 16 16"><path d="M8.4 0.8H12.2L9.4 6.2L12.2 6.4L4.2 15.6L7 9.2L4.4 9Z" fill="#e9b30c"/></svg>
<span class="t " style="left:902px;top:609px;">3VSB</span>
<div style="left:900px;top:626px;width:817px;height:16px;background:#f0f0f0"></div>
<div style="left:900px;top:642px;width:817px;height:1px;background:#f0f0f0"></div>
<div style="left:884px;top:642px;width:16px;height:1px;background:#e9e9e9"></div>
<svg class="ic" style="left:884px;top:626px" width="16" height="16" viewBox="0 0 16 16"><path d="M8.4 0.8H12.2L9.4 6.2L12.2 6.4L4.2 15.6L7 9.2L4.4 9Z" fill="#e9b30c"/></svg>
<span class="t " style="left:902px;top:626px;">VBAT</span>
<div style="left:900px;top:659px;width:817px;height:1px;background:#f0f0f0"></div>
<div style="left:884px;top:659px;width:16px;height:1px;background:#e9e9e9"></div>
<svg class="ic" style="left:884px;top:643px" width="16" height="16" viewBox="0 0 16 16"><path d="M8.4 0.8H12.2L9.4 6.2L12.2 6.4L4.2 15.6L7 9.2L4.4 9Z" fill="#e9b30c"/></svg>
<span class="t " style="left:902px;top:643px;">VTT</span>
<div style="left:900px;top:660px;width:817px;height:16px;background:#f0f0f0"></div>
<div style="left:900px;top:676px;width:817px;height:1px;background:#f0f0f0"></div>
<div style="left:884px;top:676px;width:16px;height:1px;background:#e9e9e9"></div>
<svg class="ic" style="left:884px;top:660px" width="16" height="16" viewBox="0 0 16 16"><path d="M8.4 0.8H12.2L9.4 6.2L12.2 6.4L4.2 15.6L7 9.2L4.4 9Z" fill="#e9b30c"/></svg>
<span class="t " style="left:902px;top:660px;">VIN5</span>
<div style="left:900px;top:693px;width:817px;height:1px;background:#f0f0f0"></div>
<div style="left:884px;top:693px;width:16px;height:1px;background:#e9e9e9"></div>
<svg class="ic" style="left:884px;top:677px" width="16" height="16" viewBox="0 0 16 16"><path d="M8.4 0.8H12.2L9.4 6.2L12.2 6.4L4.2 15.6L7 9.2L4.4 9Z" fill="#e9b30c"/></svg>
<span class="t " style="left:902px;top:677px;">VIN6</span>
<div style="left:900px;top:694px;width:817px;height:16px;background:#f0f0f0"></div>
<div style="left:900px;top:710px;width:817px;height:1px;background:#f0f0f0"></div>
<div style="left:884px;top:710px;width:16px;height:1px;background:#e9e9e9"></div>
<svg class="ic" style="left:884px;top:694px" width="16" height="16" viewBox="0 0 16 16"><path d="M8.4 0.8H12.2L9.4 6.2L12.2 6.4L4.2 15.6L7 9.2L4.4 9Z" fill="#e9b30c"/></svg>
<span class="t " style="left:902px;top:694px;">VIN2</span>
<div style="left:900px;top:727px;width:817px;height:1px;background:#f0f0f0"></div>
<div style="left:884px;top:727px;width:16px;height:1px;background:#e9e9e9"></div>
<svg class="ic" style="left:884px;top:711px" width="16" height="16" viewBox="0 0 16 16"><path d="M8.4 0.8H12.2L9.4 6.2L12.2 6.4L4.2 15.6L7 9.2L4.4 9Z" fill="#e9b30c"/></svg>
<span class="t " style="left:902px;top:711px;">VIN3</span>
<div style="left:900px;top:728px;width:817px;height:16px;background:#f0f0f0"></div>
<div style="left:900px;top:744px;width:817px;height:1px;background:#f0f0f0"></div>
<div style="left:884px;top:744px;width:16px;height:1px;background:#e9e9e9"></div>
<svg class="ic" style="left:884px;top:728px" width="16" height="16" viewBox="0 0 16 16"><path d="M8.4 0.8H12.2L9.4 6.2L12.2 6.4L4.2 15.6L7 9.2L4.4 9Z" fill="#e9b30c"/></svg>
<span class="t " style="left:902px;top:728px;">VIN7</span>
<div style="left:900px;top:761px;width:817px;height:1px;background:#f0f0f0"></div>
<div style="left:884px;top:761px;width:16px;height:1px;background:#e9e9e9"></div>
<svg class="ic" style="left:884px;top:745px" width="16" height="16" viewBox="0 0 16 16"><path d="M8.4 0.8H12.2L9.4 6.2L12.2 6.4L4.2 15.6L7 9.2L4.4 9Z" fill="#e9b30c"/></svg>
<span class="t " style="left:902px;top:745px;">VIN9</span>
<div style="left:900px;top:762px;width:817px;height:16px;background:#f0f0f0"></div>
<div style="left:900px;top:778px;width:817px;height:1px;background:#f0f0f0"></div>
<div style="left:884px;top:778px;width:16px;height:1px;background:#e9e9e9"></div>
<svg class="ic" style="left:884px;top:762px" width="16" height="16" viewBox="0 0 16 16"><path d="M8.4 0.8H12.2L9.4 6.2L12.2 6.4L4.2 15.6L7 9.2L4.4 9Z" fill="#e9b30c"/></svg>
<span class="t " style="left:902px;top:762px;">VHIF</span>
<div style="left:900px;top:795px;width:817px;height:1px;background:#f0f0f0"></div>
<div style="left:884px;top:795px;width:16px;height:1px;background:#e9e9e9"></div>
<svg class="ic" style="left:884px;top:779px" width="16" height="16" viewBox="0 0 16 16"><path d="M8.4 0.8H12.2L9.4 6.2L12.2 6.4L4.2 15.6L7 9.2L4.4 9Z" fill="#e9b30c"/></svg>
<span class="t " style="left:902px;top:779px;">VIN10</span>
<div style="left:900px;top:796px;width:817px;height:16px;background:#f0f0f0"></div>
<div style="left:900px;top:812px;width:817px;height:1px;background:#f0f0f0"></div>
<div style="left:884px;top:812px;width:16px;height:1px;background:#e9e9e9"></div>
<svg class="ic" style="left:884px;top:796px" width="16" height="16" viewBox="0 0 16 16"><path d="M8.4 0.8H12.2L9.4 6.2L12.2 6.4L4.2 15.6L7 9.2L4.4 9Z" fill="#e9b30c"/></svg>
<span class="t " style="left:902px;top:796px;">VIN11</span>
<div style="left:900px;top:829px;width:817px;height:1px;background:#f0f0f0"></div>
<div style="left:884px;top:829px;width:16px;height:1px;background:#e9e9e9"></div>
<svg class="ic" style="left:884px;top:813px" width="16" height="16" viewBox="0 0 16 16"><path d="M8.4 0.8H12.2L9.4 6.2L12.2 6.4L4.2 15.6L7 9.2L4.4 9Z" fill="#e9b30c"/></svg>
<span class="t " style="left:902px;top:813px;">VIN12</span>
<div style="left:900px;top:830px;width:817px;height:16px;background:#f0f0f0"></div>
<div style="left:900px;top:846px;width:817px;height:1px;background:#f0f0f0"></div>
<div style="left:884px;top:846px;width:16px;height:1px;background:#e9e9e9"></div>
<svg class="ic" style="left:884px;top:830px" width="16" height="16" viewBox="0 0 16 16"><path d="M8.4 0.8H12.2L9.4 6.2L12.2 6.4L4.2 15.6L7 9.2L4.4 9Z" fill="#e9b30c"/></svg>
<span class="t " style="left:902px;top:830px;">VIN13</span>
<div style="left:900px;top:863px;width:817px;height:1px;background:#f0f0f0"></div>
<div style="left:884px;top:863px;width:16px;height:1px;background:#e9e9e9"></div>
<svg class="ic" style="left:884px;top:847px" width="16" height="16" viewBox="0 0 16 16"><path d="M8.4 0.8H12.2L9.4 6.2L12.2 6.4L4.2 15.6L7 9.2L4.4 9Z" fill="#e9b30c"/></svg>
<span class="t " style="left:902px;top:847px;">VIN14</span>
<div style="left:900px;top:864px;width:817px;height:16px;background:#f0f0f0"></div>
<div style="left:900px;top:880px;width:817px;height:1px;background:#f0f0f0"></div>
<div style="left:884px;top:880px;width:16px;height:1px;background:#e9e9e9"></div>
<svg class="ic" style="left:884px;top:864px" width="16" height="16" viewBox="0 0 16 16"><path d="M8.4 0.8H12.2L9.4 6.2L12.2 6.4L4.2 15.6L7 9.2L4.4 9Z" fill="#e9b30c"/></svg>
<span class="t " style="left:902px;top:864px;">AUXTIN6</span>
<div style="left:900px;top:897px;width:817px;height:1px;background:#f0f0f0"></div>
<div style="left:884px;top:897px;width:16px;height:1px;background:#e9e9e9"></div>
<svg class="ic" style="left:884px;top:881px" width="16" height="16" viewBox="0 0 16 16"><path d="M8.4 0.8H12.2L9.4 6.2L12.2 6.4L4.2 15.6L7 9.2L4.4 9Z" fill="#e9b30c"/></svg>
<span class="t " style="left:902px;top:881px;">AUXTIN9</span>
<div style="left:900px;top:898px;width:817px;height:16px;background:#f0f0f0"></div>
<div style="left:900px;top:914px;width:817px;height:1px;background:#f0f0f0"></div>
<div style="left:884px;top:914px;width:16px;height:1px;background:#e9e9e9"></div>
<svg class="ic" style="left:884px;top:898px" width="16" height="16" viewBox="0 0 16 16"><g fill="#1f1f1f"><ellipse cx="8" cy="3.6" rx="3" ry="2.4"/><ellipse cx="8" cy="12.4" rx="3" ry="2.4"/><ellipse cx="3.6" cy="8" rx="2.4" ry="3"/><ellipse cx="12.4" cy="8" rx="2.4" ry="3"/><circle cx="8" cy="8" r="1.6"/></g></svg>
<span class="t " style="left:902px;top:898px;">CPUFANIN0</span>
<div style="left:900px;top:931px;width:817px;height:1px;background:#f0f0f0"></div>
<div style="left:884px;top:931px;width:16px;height:1px;background:#e9e9e9"></div>
<div style="left:884px;top:932px;width:16px;height:16px;background:#f7f7f7"></div>
<div style="left:900px;top:932px;width:817px;height:16px;background:#dadada"></div>
<div style="left:900px;top:948px;width:817px;height:1px;background:#f0f0f0"></div>
<div style="left:884px;top:948px;width:16px;height:1px;background:#e9e9e9"></div>
<svg class="ic" style="left:866px;top:932px" width="14" height="16" viewBox="0 0 14 16"><path d="M1 5L7 11L13 5" fill="none" stroke="#303030" stroke-width="1"/></svg>
<svg class="ic" style="left:884px;top:932px" width="16" height="16" viewBox="0 0 16 16"><g fill="#a9a9a9"><rect x="2" y="3" width="2" height="1"/><rect x="2" y="6" width="2" height="1"/><rect x="2" y="9" width="2" height="1"/><rect x="2" y="12" width="2" height="1"/><rect x="12" y="3" width="2" height="1"/><rect x="12" y="6" width="2" height="1"/><rect x="12" y="9" width="2" height="1"/><rect x="12" y="12" width="2" height="1"/></g><rect x="4" y="1" width="8" height="14" rx="0.8" fill="#444"/><rect x="6.5" y="1" width="3" height="14" fill="#626262"/></svg>
<span class="t b" style="left:902px;top:933px;">ASUS TUF GAMING B650E-E WIFI (AMD Chipset)</span>
<div style="left:900px;top:965px;width:817px;height:1px;background:#f0f0f0"></div>
<div style="left:884px;top:965px;width:16px;height:1px;background:#e9e9e9"></div>
<svg class="ic" style="left:884px;top:949px" width="16" height="16" viewBox="0 0 16 16"><rect x="7.2" y="1" width="1.8" height="4" fill="#d8d8d8"/><rect x="7.2" y="5" width="1.8" height="7" fill="#cf2a2a"/><circle cx="8.1" cy="12.7" r="2" fill="#d40f0f"/></svg>
<div style="left:1477px;top:949px;width:80px;height:16px;background:#d1e5fb"></div>
<span class="t " style="left:902px;top:949px;">Chipset 1 (xHCI)</span>
<span class="t r " style="left:1431px;top:949px;width:120px;">60.1 °C</span>
<span class="t r " style="left:1511px;top:949px;width:120px;">60.1 °C</span>
<span class="t r " style="left:1591px;top:949px;width:120px;">69.2 °C</span>
<div style="left:900px;top:966px;width:817px;height:16px;background:#f0f0f0"></div>
<div style="left:900px;top:982px;width:817px;height:1px;background:#f0f0f0"></div>
<div style="left:884px;top:982px;width:16px;height:1px;background:#e9e9e9"></div>
<div style="left:884px;top:983px;width:16px;height:16px;background:#f7f7f7"></div>
<div style="left:900px;top:983px;width:817px;height:16px;background:#dadada"></div>
<div style="left:900px;top:999px;width:817px;height:1px;background:#f0f0f0"></div>
<div style="left:884px;top:999px;width:16px;height:1px;background:#e9e9e9"></div>
<svg class="ic" style="left:866px;top:983px" width="14" height="16" viewBox="0 0 14 16"><path d="M1 5L7 11L13 5" fill="none" stroke="#303030" stroke-width="1"/></svg>
<svg class="ic" style="left:884px;top:983px" width="16" height="16" viewBox="0 0 16 16"><g fill="#a9a9a9"><rect x="2" y="3" width="2" height="1"/><rect x="2" y="6" width="2" height="1"/><rect x="2" y="9" width="2" height="1"/><rect x="2" y="12" width="2" height="1"/><rect x="12" y="3" width="2" height="1"/><rect x="12" y="6" width="2" height="1"/><rect x="12" y="9" width="2" height="1"/><rect x="12" y="12" width="2" height="1"/></g><rect x="4" y="1" width="8" height="14" rx="0.8" fill="#444"/><rect x="6.5" y="1" width="3" height="14" fill="#626262"/></svg>
<span class="t b" style="left:902px;top:984px;">DDR5 DIMM [#1]: Wilk Elektronik IR-6000D564L30S/16G (P0 CHANNEL A/DIMM 1)</span>
<div style="left:900px;top:1000px;width:817px;height:16px;background:#f0f0f0"></div>
<div style="left:900px;top:1016px;width:817px;height:1px;background:#f0f0f0"></div>
<div style="left:884px;top:1016px;width:16px;height:1px;background:#e9e9e9"></div>
<svg class="ic" style="left:884px;top:1000px" width="16" height="16" viewBox="0 0 16 16"><rect x="7.2" y="1" width="1.8" height="4" fill="#d8d8d8"/><rect x="7.2" y="5" width="1.8" height="7" fill="#cf2a2a"/><circle cx="8.1" cy="12.7" r="2" fill="#d40f0f"/></svg>
<div style="left:1477px;top:1000px;width:80px;height:16px;background:#d1e5fb"></div>
<span class="t b" style="left:902px;top:1001px;">DDR5 Temp</span>
<span class="t r b" style="left:1431px;top:1001px;width:120px;">36.2 °C</span>
<span class="t r b" style="left:1511px;top:1001px;width:120px;">32.0 °C</span>
<span class="t r b" style="left:1591px;top:1001px;width:120px;">48.0 °C</span>
<div style="left:900px;top:1033px;width:817px;height:1px;background:#f0f0f0"></div>
<div style="left:884px;top:1033px;width:16px;height:1px;background:#e9e9e9"></div>
<svg class="ic" style="left:884px;top:1017px" width="16" height="16" viewBox="0 0 16 16"><path d="M8.4 0.8H12.2L9.4 6.2L12.2 6.4L4.2 15.6L7 9.2L4.4 9Z" fill="#e9b30c"/></svg>
<div style="left:1477px;top:1017px;width:80px;height:16px;background:#d1e5fb"></div>
<span class="t b" style="left:902px;top:1018px;">VDD/SOC</span>
<span class="t r b" style="left:1431px;top:1018px;width:120px;">1.350 V</span>
<span class="t r b" style="left:1511px;top:1018px;width:120px;">1.350 V</span>
<span class="t r b" style="left:1591px;top:1018px;width:120px;">1.365 V</span>
<div style="left:900px;top:1034px;width:817px;height:16px;background:#f0f0f0"></div>
<div style="left:900px;top:1050px;width:817px;height:1px;background:#f0f0f0"></div>
<div style="left:884px;top:1050px;width:16px;height:1px;background:#e9e9e9"></div>
<svg class="ic" style="left:884px;top:1034px" width="16" height="16" viewBox="0 0 16 16"><path d="M8.4 0.8H12.2L9.4 6.2L12.2 6.4L4.2 15.6L7 9.2L4.4 9Z" fill="#e9b30c"/></svg>
<span class="t b" style="left:902px;top:1035px;">VDDQ (SWB) Napięcie</span>
<span class="t r b" style="left:1431px;top:1035px;width:120px;">1.365 V</span>
<span class="t r b" style="left:1511px;top:1035px;width:120px;">1.350 V</span>
<span class="t r b" style="left:1591px;top:1035px;width:120px;">1.365 V</span>
<div style="left:900px;top:1067px;width:817px;height:1px;background:#f0f0f0"></div>
<div style="left:884px;top:1067px;width:16px;height:1px;background:#e9e9e9"></div>
<svg class="ic" style="left:884px;top:1051px" width="16" height="16" viewBox="0 0 16 16"><path d="M8.4 0.8H12.2L9.4 6.2L12.2 6.4L4.2 15.6L7 9.2L4.4 9Z" fill="#e9b30c"/></svg>
<span class="t " style="left:902px;top:1051px;">VPP (SWC) Napięcie</span>
<span class="t r " style="left:1431px;top:1051px;width:120px;">1.815 V</span>
<span class="t r " style="left:1511px;top:1051px;width:120px;">1.800 V</span>
<span class="t r " style="left:1591px;top:1051px;width:120px;">1.815 V</span>
<div style="left:900px;top:1068px;width:817px;height:16px;background:#f0f0f0"></div>
<div style="left:900px;top:1084px;width:817px;height:1px;background:#f0f0f0"></div>
<div style="left:884px;top:1084px;width:16px;height:1px;background:#e9e9e9"></div>
<svg class="ic" style="left:884px;top:1068px" width="16" height="16" viewBox="0 0 16 16"><path d="M8.4 0.8H12.2L9.4 6.2L12.2 6.4L4.2 15.6L7 9.2L4.4 9Z" fill="#e9b30c"/></svg>
<span class="t " style="left:902px;top:1068px;">1,8V VOUT Napięcie</span>
<span class="t r " style="left:1431px;top:1068px;width:120px;">1.800 V</span>
<span class="t r " style="left:1511px;top:1068px;width:120px;">1.800 V</span>
<span class="t r " style="left:1591px;top:1068px;width:120px;">1.800 V</span>
<div style="left:900px;top:1101px;width:817px;height:1px;background:#f0f0f0"></div>
<div style="left:884px;top:1101px;width:16px;height:1px;background:#e9e9e9"></div>
<svg class="ic" style="left:884px;top:1085px" width="16" height="16" viewBox="0 0 16 16"><path d="M8.4 0.8H12.2L9.4 6.2L12.2 6.4L4.2 15.6L7 9.2L4.4 9Z" fill="#e9b30c"/></svg>
<div style="left:1477px;top:1085px;width:80px;height:16px;background:#d1e5fb"></div>
<span class="t " style="left:902px;top:1085px;">1,0V VOUT Napięcie</span>
<span class="t r " style="left:1431px;top:1085px;width:120px;">0.990 V</span>
<span class="t r " style="left:1511px;top:1085px;width:120px;">0.990 V</span>
<span class="t r " style="left:1591px;top:1085px;width:120px;">1.020 V</span>
<div style="left:900px;top:1102px;width:817px;height:16px;background:#f0f0f0"></div>
<div style="left:900px;top:1118px;width:817px;height:1px;background:#f0f0f0"></div>
<div style="left:884px;top:1118px;width:16px;height:1px;background:#e9e9e9"></div>
<svg class="ic" style="left:884px;top:1102px" width="16" height="16" viewBox="0 0 16 16"><path d="M8.4 0.8H12.2L9.4 6.2L12.2 6.4L4.2 15.6L7 9.2L4.4 9Z" fill="#e9b30c"/></svg>
<div style="left:1477px;top:1102px;width:80px;height:16px;background:#d1e5fb"></div>
<span class="t " style="left:902px;top:1102px;">VIN Napięcie</span>
<span class="t r " style="left:1431px;top:1102px;width:120px;">4.900 V</span>
<span class="t r " style="left:1511px;top:1102px;width:120px;">4.900 V</span>
<span class="t r " style="left:1591px;top:1102px;width:120px;">5.040 V</span>
<div style="left:900px;top:1135px;width:817px;height:1px;background:#f0f0f0"></div>
<div style="left:884px;top:1135px;width:16px;height:1px;background:#e9e9e9"></div>
<svg class="ic" style="left:884px;top:1119px" width="16" height="16" viewBox="0 0 16 16"><path d="M8.4 0.8H12.2L9.4 6.2L12.2 6.4L4.2 15.6L7 9.2L4.4 9Z" fill="#e9b30c"/></svg>
<div style="left:1477px;top:1119px;width:80px;height:16px;background:#d1e5fb"></div>
<span class="t " style="left:902px;top:1119px;">Całkowita moc</span>
<span class="t r " style="left:1431px;top:1119px;width:120px;">2.250 W</span>
<span class="t r " style="left:1511px;top:1119px;width:120px;">0.000 W</span>
<span class="t r " style="left:1591px;top:1119px;width:120px;">4.375 W</span>
<div style="left:900px;top:1136px;width:817px;height:16px;background:#f0f0f0"></div>
<div style="left:900px;top:1152px;width:817px;height:1px;background:#f0f0f0"></div>
<div style="left:884px;top:1152px;width:16px;height:1px;background:#e9e9e9"></div>
<svg class="ic" style="left:884px;top:1136px" width="16" height="16" viewBox="0 0 16 16"><path d="M13.2 9.8A5.3 5.3 0 1 1 11.6 4.0" fill="none" stroke="#4d5257" stroke-width="1.4"/><circle cx="12.3" cy="4.6" r="1.3" fill="#1e1e1e"/><path d="M8 5.2V8.6L10 10.4" fill="none" stroke="#3d4247" stroke-width="1.3"/></svg>
<span class="t " style="left:902px;top:1136px;">Wysoka temperatura PMIC</span>
<span class="t r " style="left:1431px;top:1136px;width:120px;">Nie</span>
<span class="t r " style="left:1511px;top:1136px;width:120px;">Nie</span>
<span class="t r " style="left:1591px;top:1136px;width:120px;">Nie</span>
<div style="left:900px;top:1169px;width:817px;height:1px;background:#f0f0f0"></div>
<div style="left:884px;top:1169px;width:16px;height:1px;background:#e9e9e9"></div>
<svg class="ic" style="left:884px;top:1153px" width="16" height="16" viewBox="0 0 16 16"><path d="M13.2 9.8A5.3 5.3 0 1 1 11.6 4.0" fill="none" stroke="#4d5257" stroke-width="1.4"/><circle cx="12.3" cy="4.6" r="1.3" fill="#1e1e1e"/><path d="M8 5.2V8.6L10 10.4" fill="none" stroke="#3d4247" stroke-width="1.3"/></svg>
<span class="t " style="left:902px;top:1153px;">PMIC Over Voltage</span>
<span class="t r " style="left:1431px;top:1153px;width:120px;">Nie</span>
<span class="t r " style="left:1511px;top:1153px;width:120px;">Nie</span>
<span class="t r " style="left:1591px;top:1153px;width:120px;">Nie</span>
<div style="left:900px;top:1170px;width:817px;height:16px;background:#f0f0f0"></div>
<div style="left:900px;top:1186px;width:817px;height:1px;background:#f0f0f0"></div>
<div style="left:884px;top:1186px;width:16px;height:1px;background:#e9e9e9"></div>
<svg class="ic" style="left:884px;top:1170px" width="16" height="16" viewBox="0 0 16 16"><path d="M13.2 9.8A5.3 5.3 0 1 1 11.6 4.0" fill="none" stroke="#4d5257" stroke-width="1.4"/><circle cx="12.3" cy="4.6" r="1.3" fill="#1e1e1e"/><path d="M8 5.2V8.6L10 10.4" fill="none" stroke="#3d4247" stroke-width="1.3"/></svg>
<span class="t " style="left:902px;top:1170px;">PMIC Under Voltage</span>
<span class="t r " style="left:1431px;top:1170px;width:120px;">Nie</span>
<span class="t r " style="left:1511px;top:1170px;width:120px;">Nie</span>
<span class="t r " style="left:1591px;top:1170px;width:120px;">Nie</span>
<div style="left:900px;top:1203px;width:817px;height:1px;background:#f0f0f0"></div>
<div style="left:884px;top:1203px;width:16px;height:1px;background:#e9e9e9"></div>
<div style="left:884px;top:1204px;width:16px;height:16px;background:#f7f7f7"></div>
<div style="left:900px;top:1204px;width:817px;height:16px;background:#dadada"></div>
<div style="left:900px;top:1220px;width:817px;height:1px;background:#f0f0f0"></div>
<div style="left:884px;top:1220px;width:16px;height:1px;background:#e9e9e9"></div>
<svg class="ic" style="left:866px;top:1204px" width="14" height="16" viewBox="0 0 14 16"><path d="M1 5L7 11L13 5" fill="none" stroke="#303030" stroke-width="1"/></svg>
<svg class="ic" style="left:884px;top:1204px" width="16" height="16" viewBox="0 0 16 16"><g fill="#a9a9a9"><rect x="2" y="3" width="2" height="1"/><rect x="2" y="6" width="2" height="1"/><rect x="2" y="9" width="2" height="1"/><rect x="2" y="12" width="2" height="1"/><rect x="12" y="3" width="2" height="1"/><rect x="12" y="6" width="2" height="1"/><rect x="12" y="9" width="2" height="1"/><rect x="12" y="12" width="2" height="1"/></g><rect x="4" y="1" width="8" height="14" rx="0.8" fill="#444"/><rect x="6.5" y="1" width="3" height="14" fill="#626262"/></svg>
<span class="t b" style="left:902px;top:1205px;">DDR5 DIMM [#3]: Wilk Elektronik IR-6000D564L30S/16G (P0 CHANNEL B/DIMM 1)</span>
<div style="left:900px;top:1237px;width:817px;height:1px;background:#f0f0f0"></div>
<div style="left:884px;top:1237px;width:16px;height:1px;background:#e9e9e9"></div>
<svg class="ic" style="left:884px;top:1221px" width="16" height="16" viewBox="0 0 16 16"><rect x="7.2" y="1" width="1.8" height="4" fill="#d8d8d8"/><rect x="7.2" y="5" width="1.8" height="7" fill="#cf2a2a"/><circle cx="8.1" cy="12.7" r="2" fill="#d40f0f"/></svg>
<div style="left:1477px;top:1221px;width:80px;height:16px;background:#d1e5fb"></div>
<span class="t b" style="left:902px;top:1222px;">SPD Hub Temperatura</span>
<span class="t r b" style="left:1431px;top:1222px;width:120px;">34.2 °C</span>
<span class="t r b" style="left:1511px;top:1222px;width:120px;">31.8 °C</span>
<span class="t r b" style="left:1591px;top:1222px;width:120px;">46.5 °C</span>
<div style="left:900px;top:1238px;width:817px;height:16px;background:#f0f0f0"></div>
<div style="left:900px;top:1254px;width:817px;height:1px;background:#f0f0f0"></div>
<div style="left:884px;top:1254px;width:16px;height:1px;background:#e9e9e9"></div>
<svg class="ic" style="left:884px;top:1238px" width="16" height="16" viewBox="0 0 16 16"><path d="M8.4 0.8H12.2L9.4 6.2L12.2 6.4L4.2 15.6L7 9.2L4.4 9Z" fill="#e9b30c"/></svg>
<span class="t b" style="left:902px;top:1239px;">VDD (SWA) Napięcie</span>
<span class="t r b" style="left:1431px;top:1239px;width:120px;">1.365 V</span>
<span class="t r b" style="left:1511px;top:1239px;width:120px;">1.350 V</span>
<span class="t r b" style="left:1591px;top:1239px;width:120px;">1.365 V</span>
<div style="left:900px;top:1271px;width:817px;height:1px;background:#f0f0f0"></div>
<div style="left:884px;top:1271px;width:16px;height:1px;background:#e9e9e9"></div>
<svg class="ic" style="left:884px;top:1255px" width="16" height="16" viewBox="0 0 16 16"><path d="M8.4 0.8H12.2L9.4 6.2L12.2 6.4L4.2 15.6L7 9.2L4.4 9Z" fill="#e9b30c"/></svg>
<span class="t b" style="left:902px;top:1256px;">VDDQ (SWB) Napięcie</span>
<span class="t r b" style="left:1431px;top:1256px;width:120px;">1.365 V</span>
<span class="t r b" style="left:1511px;top:1256px;width:120px;">1.365 V</span>
<span class="t r b" style="left:1591px;top:1256px;width:120px;">1.365 V</span>
<div style="left:900px;top:1272px;width:817px;height:16px;background:#f0f0f0"></div>
<div style="left:900px;top:1288px;width:817px;height:1px;background:#f0f0f0"></div>
<div style="left:884px;top:1288px;width:16px;height:1px;background:#e9e9e9"></div>
<svg class="ic" style="left:884px;top:1272px" width="16" height="16" viewBox="0 0 16 16"><path d="M8.4 0.8H12.2L9.4 6.2L12.2 6.4L4.2 15.6L7 9.2L4.4 9Z" fill="#e9b30c"/></svg>
<div style="left:1477px;top:1272px;width:80px;height:16px;background:#d1e5fb"></div>
<span class="t " style="left:902px;top:1272px;">VPP (SWC) Napięcie</span>
<span class="t r " style="left:1431px;top:1272px;width:120px;">1.815 V</span>
<span class="t r " style="left:1511px;top:1272px;width:120px;">1.800 V</span>
<span class="t r " style="left:1591px;top:1272px;width:120px;">1.815 V</span>
<div style="left:900px;top:1305px;width:817px;height:1px;background:#f0f0f0"></div>
<div style="left:884px;top:1305px;width:16px;height:1px;background:#e9e9e9"></div>
<svg class="ic" style="left:884px;top:1289px" width="16" height="16" viewBox="0 0 16 16"><path d="M8.4 0.8H12.2L9.4 6.2L12.2 6.4L4.2 15.6L7 9.2L4.4 9Z" fill="#e9b30c"/></svg>
<span class="t " style="left:902px;top:1289px;">1,8V VOUT Napięcie</span>
<span class="t r " style="left:1431px;top:1289px;width:120px;">1.800 V</span>
<span class="t r " style="left:1511px;top:1289px;width:120px;">1.800 V</span>
<span class="t r " style="left:1591px;top:1289px;width:120px;">1.800 V</span>
<div style="left:900px;top:1306px;width:817px;height:16px;background:#f0f0f0"></div>
<div style="left:900px;top:1322px;width:817px;height:1px;background:#f0f0f0"></div>
<div style="left:884px;top:1322px;width:16px;height:1px;background:#e9e9e9"></div>
<svg class="ic" style="left:884px;top:1306px" width="16" height="16" viewBox="0 0 16 16"><path d="M8.4 0.8H12.2L9.4 6.2L12.2 6.4L4.2 15.6L7 9.2L4.4 9Z" fill="#e9b30c"/></svg>
<span class="t " style="left:902px;top:1306px;">1,0V VOUT Napięcie</span>
<span class="t r " style="left:1431px;top:1306px;width:120px;">0.990 V</span>
<span class="t r " style="left:1511px;top:1306px;width:120px;">0.990 V</span>
<span class="t r " style="left:1591px;top:1306px;width:120px;">0.990 V</span>
<div style="left:900px;top:1339px;width:817px;height:1px;background:#f0f0f0"></div>
<div style="left:884px;top:1339px;width:16px;height:1px;background:#e9e9e9"></div>
<svg class="ic" style="left:884px;top:1323px" width="16" height="16" viewBox="0 0 16 16"><path d="M8.4 0.8H12.2L9.4 6.2L12.2 6.4L4.2 15.6L7 9.2L4.4 9Z" fill="#e9b30c"/></svg>
<div style="left:1477px;top:1323px;width:80px;height:16px;background:#d1e5fb"></div>
<span class="t " style="left:902px;top:1323px;">VIN Napięcie</span>
<span class="t r " style="left:1431px;top:1323px;width:120px;">4.900 V</span>
<span class="t r " style="left:1511px;top:1323px;width:120px;">4.900 V</span>
<span class="t r " style="left:1591px;top:1323px;width:120px;">4.970 V</span>
<div style="left:900px;top:1340px;width:817px;height:16px;background:#f0f0f0"></div>
<div style="left:900px;top:1356px;width:817px;height:1px;background:#f0f0f0"></div>
<div style="left:884px;top:1356px;width:16px;height:1px;background:#e9e9e9"></div>
<svg class="ic" style="left:884px;top:1340px" width="16" height="16" viewBox="0 0 16 16"><path d="M8.4 0.8H12.2L9.4 6.2L12.2 6.4L4.2 15.6L7 9.2L4.4 9Z" fill="#e9b30c"/></svg>
<div style="left:1477px;top:1340px;width:80px;height:16px;background:#d1e5fb"></div>
<span class="t " style="left:902px;top:1340px;">Całkowita moc</span>
<span class="t r " style="left:1431px;top:1340px;width:120px;">2.875 W</span>
<span class="t r " style="left:1511px;top:1340px;width:120px;">0.000 W</span>
<span class="t r " style="left:1591px;top:1340px;width:120px;">4.750 W</span>
</div>
<div style="left:0px;top:0px;width:860px;height:1px;background:#606060"></div>
<div style="left:0px;top:1361px;width:860px;height:1px;background:#606060"></div>
<div style="left:0px;top:0px;width:1px;height:1362px;background:#606060"></div>
<div style="left:859px;top:0px;width:1px;height:1362px;background:#606060"></div>
</div>
<div class="pn" style="left:1720px;top:23px;width:860px;height:1362px">
<div style="position:absolute;left:-1720px;top:-23px;width:3440px;height:1440px">
<span class="t hd" style="left:1727px;top:26px;">Czujnik</span>
<span class="t r hd" style="left:2321px;top:26px;width:90px;">Aktualny</span>
<span class="t r hd" style="left:2401px;top:26px;width:90px;">Minimum</span>
<span class="t r hd" style="left:2481px;top:26px;width:90px;">Maksimum</span>
<div style="left:2336px;top:25px;width:1px;height:23px;background:#e5e5e5"></div>
<div style="left:2416px;top:25px;width:1px;height:23px;background:#e5e5e5"></div>
<div style="left:2496px;top:25px;width:1px;height:23px;background:#e5e5e5"></div>
<div style="left:2576px;top:25px;width:1px;height:23px;background:#e5e5e5"></div>
<div style="left:1760px;top:64px;width:817px;height:1px;background:#f0f0f0"></div>
<div style="left:1744px;top:64px;width:16px;height:1px;background:#e9e9e9"></div>
<svg class="ic" style="left:1744px;top:48px" width="16" height="16" viewBox="0 0 16 16"><path d="M13.2 9.8A5.3 5.3 0 1 1 11.6 4.0" fill="none" stroke="#4d5257" stroke-width="1.4"/><circle cx="12.3" cy="4.6" r="1.3" fill="#1e1e1e"/><path d="M8 5.2V8.6L10 10.4" fill="none" stroke="#3d4247" stroke-width="1.3"/></svg>
<span class="t " style="left:1762px;top:48px;">Wysoka temperatura PMIC</span>
<span class="t r " style="left:2291px;top:48px;width:120px;">Nie</span>
<span class="t r " style="left:2371px;top:48px;width:120px;">Nie</span>
<span class="t r " style="left:2451px;top:48px;width:120px;">Nie</span>
<div style="left:1760px;top:65px;width:817px;height:16px;background:#f0f0f0"></div>
<div style="left:1760px;top:81px;width:817px;height:1px;background:#f0f0f0"></div>
<div style="left:1744px;top:81px;width:16px;height:1px;background:#e9e9e9"></div>
<svg class="ic" style="left:1744px;top:65px" width="16" height="16" viewBox="0 0 16 16"><path d="M13.2 9.8A5.3 5.3 0 1 1 11.6 4.0" fill="none" stroke="#4d5257" stroke-width="1.4"/><circle cx="12.3" cy="4.6" r="1.3" fill="#1e1e1e"/><path d="M8 5.2V8.6L10 10.4" fill="none" stroke="#3d4247" stroke-width="1.3"/></svg>
<span class="t " style="left:1762px;top:65px;">PMIC Over Voltage</span>
<span class="t r " style="left:2291px;top:65px;width:120px;">Nie</span>
<span class="t r " style="left:2371px;top:65px;width:120px;">Nie</span>
<span class="t r " style="left:2451px;top:65px;width:120px;">Nie</span>
<div style="left:1760px;top:98px;width:817px;height:1px;background:#f0f0f0"></div>
<div style="left:1744px;top:98px;width:16px;height:1px;background:#e9e9e9"></div>
<svg class="ic" style="left:1744px;top:82px" width="16" height="16" viewBox="0 0 16 16"><path d="M13.2 9.8A5.3 5.3 0 1 1 11.6 4.0" fill="none" stroke="#4d5257" stroke-width="1.4"/><circle cx="12.3" cy="4.6" r="1.3" fill="#1e1e1e"/><path d="M8 5.2V8.6L10 10.4" fill="none" stroke="#3d4247" stroke-width="1.3"/></svg>
<span class="t " style="left:1762px;top:82px;">PMIC Under Voltage</span>
<span class="t r " style="left:2291px;top:82px;width:120px;">Nie</span>
<span class="t r " style="left:2371px;top:82px;width:120px;">Nie</span>
<span class="t r " style="left:2451px;top:82px;width:120px;">Nie</span>
<div style="left:1760px;top:99px;width:817px;height:16px;background:#f0f0f0"></div>
<div style="left:1760px;top:115px;width:817px;height:1px;background:#f0f0f0"></div>
<div style="left:1744px;top:115px;width:16px;height:1px;background:#e9e9e9"></div>
<div style="left:1744px;top:116px;width:16px;height:16px;background:#f7f7f7"></div>
<div style="left:1760px;top:116px;width:817px;height:16px;background:#dadada"></div>
<div style="left:1760px;top:132px;width:817px;height:1px;background:#f0f0f0"></div>
<div style="left:1744px;top:132px;width:16px;height:1px;background:#e9e9e9"></div>
<svg class="ic" style="left:1726px;top:116px" width="14" height="16" viewBox="0 0 14 16"><path d="M1 5L7 11L13 5" fill="none" stroke="#303030" stroke-width="1"/></svg>
<svg class="ic" style="left:1744px;top:116px" width="16" height="16" viewBox="0 0 16 16"><g fill="#a9a9a9"><rect x="2" y="3" width="2" height="1"/><rect x="2" y="6" width="2" height="1"/><rect x="2" y="9" width="2" height="1"/><rect x="2" y="12" width="2" height="1"/><rect x="12" y="3" width="2" height="1"/><rect x="12" y="6" width="2" height="1"/><rect x="12" y="9" width="2" height="1"/><rect x="12" y="12" width="2" height="1"/></g><rect x="4" y="1" width="8" height="14" rx="0.8" fill="#444"/><rect x="6.5" y="1" width="3" height="14" fill="#626262"/></svg>
<span class="t b" style="left:1762px;top:117px;">S.M.A.R.T.: IR-SSDPR-P34B-02T-80 (GWZ014751) [C:]</span>
<div style="left:1760px;top:133px;width:817px;height:16px;background:#f0f0f0"></div>
<div style="left:1760px;top:149px;width:817px;height:1px;background:#f0f0f0"></div>
<div style="left:1744px;top:149px;width:16px;height:1px;background:#e9e9e9"></div>
<svg class="ic" style="left:1744px;top:133px" width="16" height="16" viewBox="0 0 16 16"><rect x="7.2" y="1" width="1.8" height="4" fill="#d8d8d8"/><rect x="7.2" y="5" width="1.8" height="7" fill="#cf2a2a"/><circle cx="8.1" cy="12.7" r="2" fill="#d40f0f"/></svg>
<span class="t b" style="left:1762px;top:134px;">Temperatura dysku</span>
<span class="t r b" style="left:2291px;top:134px;width:120px;">28 °C</span>
<span class="t r b" style="left:2371px;top:134px;width:120px;">28 °C</span>
<span class="t r b" style="left:2451px;top:134px;width:120px;">41 °C</span>
<div style="left:1760px;top:166px;width:817px;height:1px;background:#f0f0f0"></div>
<div style="left:1744px;top:166px;width:16px;height:1px;background:#e9e9e9"></div>
<svg class="ic" style="left:1744px;top:150px" width="16" height="16" viewBox="0 0 16 16"><path d="M13.2 9.8A5.3 5.3 0 1 1 11.6 4.0" fill="none" stroke="#4d5257" stroke-width="1.4"/><circle cx="12.3" cy="4.6" r="1.3" fill="#1e1e1e"/><path d="M8 5.2V8.6L10 10.4" fill="none" stroke="#3d4247" stroke-width="1.3"/></svg>
<span class="t " style="left:1762px;top:150px;">Pozostały czas życia dysku</span>
<span class="t r " style="left:2291px;top:150px;width:120px;">98.0 %</span>
<span class="t r " style="left:2371px;top:150px;width:120px;">98.0 %</span>
<span class="t r " style="left:2451px;top:150px;width:120px;">98.0 %</span>
<div style="left:1760px;top:167px;width:817px;height:16px;background:#f0f0f0"></div>
<div style="left:1760px;top:183px;width:817px;height:1px;background:#f0f0f0"></div>
<div style="left:1744px;top:183px;width:16px;height:1px;background:#e9e9e9"></div>
<svg class="ic" style="left:1744px;top:167px" width="16" height="16" viewBox="0 0 16 16"><path d="M13.2 9.8A5.3 5.3 0 1 1 11.6 4.0" fill="none" stroke="#4d5257" stroke-width="1.4"/><circle cx="12.3" cy="4.6" r="1.3" fill="#1e1e1e"/><path d="M8 5.2V8.6L10 10.4" fill="none" stroke="#3d4247" stroke-width="1.3"/></svg>
<span class="t " style="left:1762px;top:167px;">Dostępna rezerwa</span>
<span class="t r " style="left:2291px;top:167px;width:120px;">100.0 %</span>
<span class="t r " style="left:2371px;top:167px;width:120px;">100.0 %</span>
<span class="t r " style="left:2451px;top:167px;width:120px;">100.0 %</span>
<div style="left:1760px;top:200px;width:817px;height:1px;background:#f0f0f0"></div>
<div style="left:1744px;top:200px;width:16px;height:1px;background:#e9e9e9"></div>
<svg class="ic" style="left:1744px;top:184px" width="16" height="16" viewBox="0 0 16 16"><path d="M13.2 9.8A5.3 5.3 0 1 1 11.6 4.0" fill="none" stroke="#4d5257" stroke-width="1.4"/><circle cx="12.3" cy="4.6" r="1.3" fill="#1e1e1e"/><path d="M8 5.2V8.6L10 10.4" fill="none" stroke="#3d4247" stroke-width="1.3"/></svg>
<span class="t " style="left:1762px;top:184px;">Ostrzeżenie o awarii</span>
<span class="t r " style="left:2291px;top:184px;width:120px;">Nie</span>
<span class="t r " style="left:2371px;top:184px;width:120px;">Nie</span>
<span class="t r " style="left:2451px;top:184px;width:120px;">Nie</span>
<div style="left:1760px;top:201px;width:817px;height:16px;background:#f0f0f0"></div>
<div style="left:1760px;top:217px;width:817px;height:1px;background:#f0f0f0"></div>
<div style="left:1744px;top:217px;width:16px;height:1px;background:#e9e9e9"></div>
<svg class="ic" style="left:1744px;top:201px" width="16" height="16" viewBox="0 0 16 16"><path d="M13.2 9.8A5.3 5.3 0 1 1 11.6 4.0" fill="none" stroke="#4d5257" stroke-width="1.4"/><circle cx="12.3" cy="4.6" r="1.3" fill="#1e1e1e"/><path d="M8 5.2V8.6L10 10.4" fill="none" stroke="#3d4247" stroke-width="1.3"/></svg>
<span class="t " style="left:1762px;top:201px;">Ostrzeżenie o stanie</span>
<span class="t r " style="left:2291px;top:201px;width:120px;">Nie</span>
<span class="t r " style="left:2371px;top:201px;width:120px;">Nie</span>
<span class="t r " style="left:2451px;top:201px;width:120px;">Nie</span>
<div style="left:1760px;top:234px;width:817px;height:1px;background:#f0f0f0"></div>
<div style="left:1744px;top:234px;width:16px;height:1px;background:#e9e9e9"></div>
<svg class="ic" style="left:1744px;top:218px" width="16" height="16" viewBox="0 0 16 16"><path d="M13.2 9.8A5.3 5.3 0 1 1 11.6 4.0" fill="none" stroke="#4d5257" stroke-width="1.4"/><circle cx="12.3" cy="4.6" r="1.3" fill="#1e1e1e"/><path d="M8 5.2V8.6L10 10.4" fill="none" stroke="#3d4247" stroke-width="1.3"/></svg>
<span class="t " style="left:1762px;top:218px;">Całkowite odczyty hosta</span>
<span class="t r " style="left:2291px;top:218px;width:120px;">45,935 GB</span>
<span class="t r " style="left:2371px;top:218px;width:120px;">45,934 GB</span>
<span class="t r " style="left:2451px;top:218px;width:120px;">45,935 GB</span>
<div style="left:1760px;top:235px;width:817px;height:16px;background:#f0f0f0"></div>
<div style="left:1760px;top:251px;width:817px;height:1px;background:#f0f0f0"></div>
<div style="left:1744px;top:251px;width:16px;height:1px;background:#e9e9e9"></div>
<svg class="ic" style="left:1744px;top:235px" width="16" height="16" viewBox="0 0 16 16"><path d="M13.2 9.8A5.3 5.3 0 1 1 11.6 4.0" fill="none" stroke="#4d5257" stroke-width="1.4"/><circle cx="12.3" cy="4.6" r="1.3" fill="#1e1e1e"/><path d="M8 5.2V8.6L10 10.4" fill="none" stroke="#3d4247" stroke-width="1.3"/></svg>
<span class="t " style="left:1762px;top:235px;">Całkowite zapisy hosta</span>
<span class="t r " style="left:2291px;top:235px;width:120px;">126,833 GB</span>
<span class="t r " style="left:2371px;top:235px;width:120px;">126,833 GB</span>
<span class="t r " style="left:2451px;top:235px;width:120px;">126,833 GB</span>
<div style="left:1760px;top:268px;width:817px;height:1px;background:#f0f0f0"></div>
<div style="left:1744px;top:268px;width:16px;height:1px;background:#e9e9e9"></div>
<div style="left:1744px;top:269px;width:16px;height:16px;background:#f7f7f7"></div>
<div style="left:1760px;top:269px;width:817px;height:16px;background:#dadada"></div>
<div style="left:1760px;top:285px;width:817px;height:1px;background:#f0f0f0"></div>
<div style="left:1744px;top:285px;width:16px;height:1px;background:#e9e9e9"></div>
<svg class="ic" style="left:1726px;top:269px" width="14" height="16" viewBox="0 0 14 16"><path d="M1 5L7 11L13 5" fill="none" stroke="#303030" stroke-width="1"/></svg>
<svg class="ic" style="left:1744px;top:269px" width="16" height="16" viewBox="0 0 16 16"><g fill="#a9a9a9"><rect x="2" y="3" width="2" height="1"/><rect x="2" y="6" width="2" height="1"/><rect x="2" y="9" width="2" height="1"/><rect x="2" y="12" width="2" height="1"/><rect x="12" y="3" width="2" height="1"/><rect x="12" y="6" width="2" height="1"/><rect x="12" y="9" width="2" height="1"/><rect x="12" y="12" width="2" height="1"/></g><rect x="4" y="1" width="8" height="14" rx="0.8" fill="#444"/><rect x="6.5" y="1" width="3" height="14" fill="#626262"/></svg>
<span class="t r b" style="left:1542px;top:270px;width:600px;">S.M.A.R.T.: Samsung SSD 980 PRO 2TB (S4J4NX0W704463R) [F:]</span>
<div style="left:1760px;top:302px;width:817px;height:1px;background:#f0f0f0"></div>
<div style="left:1744px;top:302px;width:16px;height:1px;background:#e9e9e9"></div>
<svg class="ic" style="left:1744px;top:286px" width="16" height="16" viewBox="0 0 16 16"><rect x="7.2" y="1" width="1.8" height="4" fill="#d8d8d8"/><rect x="7.2" y="5" width="1.8" height="7" fill="#cf2a2a"/><circle cx="8.1" cy="12.7" r="2" fill="#d40f0f"/></svg>
<span class="t b" style="left:1762px;top:287px;">Temperatura dysku</span>
<span class="t r b" style="left:2291px;top:287px;width:120px;">2 °C</span>
<span class="t r b" style="left:2371px;top:287px;width:120px;">42 °C</span>
<span class="t r b" style="left:2451px;top:287px;width:120px;">47 °C</span>
<div style="left:1760px;top:303px;width:817px;height:16px;background:#f0f0f0"></div>
<div style="left:1760px;top:319px;width:817px;height:1px;background:#f0f0f0"></div>
<div style="left:1744px;top:319px;width:16px;height:1px;background:#e9e9e9"></div>
<svg class="ic" style="left:1744px;top:303px" width="16" height="16" viewBox="0 0 16 16"><rect x="7.2" y="1" width="1.8" height="4" fill="#d8d8d8"/><rect x="7.2" y="5" width="1.8" height="7" fill="#cf2a2a"/><circle cx="8.1" cy="12.7" r="2" fill="#d40f0f"/></svg>
<span class="t b" style="left:1762px;top:304px;">Temperatura dysku 2</span>
<span class="t r b" style="left:2291px;top:304px;width:120px;">2 °C</span>
<span class="t r b" style="left:2371px;top:304px;width:120px;">42 °C</span>
<span class="t r b" style="left:2451px;top:304px;width:120px;">47 °C</span>
<div style="left:1760px;top:336px;width:817px;height:1px;background:#f0f0f0"></div>
<div style="left:1744px;top:336px;width:16px;height:1px;background:#e9e9e9"></div>
<svg class="ic" style="left:1744px;top:320px" width="16" height="16" viewBox="0 0 16 16"><rect x="7.2" y="1" width="1.8" height="4" fill="#d8d8d8"/><rect x="7.2" y="5" width="1.8" height="7" fill="#cf2a2a"/><circle cx="8.1" cy="12.7" r="2" fill="#d40f0f"/></svg>
<span class="t " style="left:1762px;top:320px;">Temperatura dysku 3</span>
<span class="t r " style="left:2291px;top:320px;width:120px;">9 °C</span>
<span class="t r " style="left:2371px;top:320px;width:120px;">39 °C</span>
<span class="t r " style="left:2451px;top:320px;width:120px;">51 °C</span>
<div style="left:1760px;top:337px;width:817px;height:16px;background:#f0f0f0"></div>
<div style="left:1760px;top:353px;width:817px;height:1px;background:#f0f0f0"></div>
<div style="left:1744px;top:353px;width:16px;height:1px;background:#e9e9e9"></div>
<svg class="ic" style="left:1744px;top:337px" width="16" height="16" viewBox="0 0 16 16"><path d="M13.2 9.8A5.3 5.3 0 1 1 11.6 4.0" fill="none" stroke="#4d5257" stroke-width="1.4"/><circle cx="12.3" cy="4.6" r="1.3" fill="#1e1e1e"/><path d="M8 5.2V8.6L10 10.4" fill="none" stroke="#3d4247" stroke-width="1.3"/></svg>
<span class="t " style="left:1762px;top:337px;">Pozostały czas życia dysku</span>
<span class="t r " style="left:2291px;top:337px;width:120px;">0 %</span>
<span class="t r " style="left:2371px;top:337px;width:120px;">100.0 %</span>
<span class="t r " style="left:2451px;top:337px;width:120px;">100.0 %</span>
<div style="left:1760px;top:370px;width:817px;height:1px;background:#f0f0f0"></div>
<div style="left:1744px;top:370px;width:16px;height:1px;background:#e9e9e9"></div>
<svg class="ic" style="left:1744px;top:354px" width="16" height="16" viewBox="0 0 16 16"><path d="M13.2 9.8A5.3 5.3 0 1 1 11.6 4.0" fill="none" stroke="#4d5257" stroke-width="1.4"/><circle cx="12.3" cy="4.6" r="1.3" fill="#1e1e1e"/><path d="M8 5.2V8.6L10 10.4" fill="none" stroke="#3d4247" stroke-width="1.3"/></svg>
<span class="t " style="left:1762px;top:354px;">Dostępna rezerwa</span>
<span class="t r " style="left:2291px;top:354px;width:120px;">0 %</span>
<span class="t r " style="left:2371px;top:354px;width:120px;">100.0 %</span>
<span class="t r " style="left:2451px;top:354px;width:120px;">100.0 %</span>
<div style="left:1760px;top:371px;width:817px;height:16px;background:#f0f0f0"></div>
<div style="left:1760px;top:387px;width:817px;height:1px;background:#f0f0f0"></div>
<div style="left:1744px;top:387px;width:16px;height:1px;background:#e9e9e9"></div>
<svg class="ic" style="left:1744px;top:371px" width="16" height="16" viewBox="0 0 16 16"><path d="M13.2 9.8A5.3 5.3 0 1 1 11.6 4.0" fill="none" stroke="#4d5257" stroke-width="1.4"/><circle cx="12.3" cy="4.6" r="1.3" fill="#1e1e1e"/><path d="M8 5.2V8.6L10 10.4" fill="none" stroke="#3d4247" stroke-width="1.3"/></svg>
<span class="t " style="left:1762px;top:371px;">Ostrzeżenie o awarii</span>
<span class="t r " style="left:2291px;top:371px;width:120px;">Nie</span>
<span class="t r " style="left:2371px;top:371px;width:120px;">Nie</span>
<span class="t r " style="left:2451px;top:371px;width:120px;">Nie</span>
<div style="left:1760px;top:404px;width:817px;height:1px;background:#f0f0f0"></div>
<div style="left:1744px;top:404px;width:16px;height:1px;background:#e9e9e9"></div>
<svg class="ic" style="left:1744px;top:388px" width="16" height="16" viewBox="0 0 16 16"><path d="M13.2 9.8A5.3 5.3 0 1 1 11.6 4.0" fill="none" stroke="#4d5257" stroke-width="1.4"/><circle cx="12.3" cy="4.6" r="1.3" fill="#1e1e1e"/><path d="M8 5.2V8.6L10 10.4" fill="none" stroke="#3d4247" stroke-width="1.3"/></svg>
<span class="t " style="left:1762px;top:388px;">Ostrzeżenie o stanie</span>
<span class="t r " style="left:2291px;top:388px;width:120px;">Nie</span>
<span class="t r " style="left:2371px;top:388px;width:120px;">Nie</span>
<span class="t r " style="left:2451px;top:388px;width:120px;">Nie</span>
<div style="left:1760px;top:405px;width:817px;height:16px;background:#f0f0f0"></div>
<div style="left:1760px;top:421px;width:817px;height:1px;background:#f0f0f0"></div>
<div style="left:1744px;top:421px;width:16px;height:1px;background:#e9e9e9"></div>
<svg class="ic" style="left:1744px;top:405px" width="16" height="16" viewBox="0 0 16 16"><path d="M13.2 9.8A5.3 5.3 0 1 1 11.6 4.0" fill="none" stroke="#4d5257" stroke-width="1.4"/><circle cx="12.3" cy="4.6" r="1.3" fill="#1e1e1e"/><path d="M8 5.2V8.6L10 10.4" fill="none" stroke="#3d4247" stroke-width="1.3"/></svg>
<span class="t " style="left:1762px;top:405px;">Całkowite odczyty hosta</span>
<span class="t r " style="left:2291px;top:405px;width:120px;">3 GB</span>
<span class="t r " style="left:2371px;top:405px;width:120px;">3,183 GB</span>
<span class="t r " style="left:2451px;top:405px;width:120px;">3,183 GB</span>
<div style="left:1760px;top:438px;width:817px;height:1px;background:#f0f0f0"></div>
<div style="left:1744px;top:438px;width:16px;height:1px;background:#e9e9e9"></div>
<svg class="ic" style="left:1744px;top:422px" width="16" height="16" viewBox="0 0 16 16"><path d="M13.2 9.8A5.3 5.3 0 1 1 11.6 4.0" fill="none" stroke="#4d5257" stroke-width="1.4"/><circle cx="12.3" cy="4.6" r="1.3" fill="#1e1e1e"/><path d="M8 5.2V8.6L10 10.4" fill="none" stroke="#3d4247" stroke-width="1.3"/></svg>
<span class="t " style="left:1762px;top:422px;">Całkowite zapisy hosta</span>
<span class="t r " style="left:2291px;top:422px;width:120px;">6 GB</span>
<span class="t r " style="left:2371px;top:422px;width:120px;">25,886 GB</span>
<span class="t r " style="left:2451px;top:422px;width:120px;">25,886 GB</span>
<div style="left:1760px;top:439px;width:817px;height:16px;background:#f0f0f0"></div>
<div style="left:1760px;top:455px;width:817px;height:1px;background:#f0f0f0"></div>
<div style="left:1744px;top:455px;width:16px;height:1px;background:#e9e9e9"></div>
<div style="left:1744px;top:456px;width:16px;height:16px;background:#f7f7f7"></div>
<div style="left:1760px;top:456px;width:817px;height:16px;background:#dadada"></div>
<div style="left:1760px;top:472px;width:817px;height:1px;background:#f0f0f0"></div>
<div style="left:1744px;top:472px;width:16px;height:1px;background:#e9e9e9"></div>
<svg class="ic" style="left:1726px;top:456px" width="14" height="16" viewBox="0 0 14 16"><path d="M1 5L7 11L13 5" fill="none" stroke="#303030" stroke-width="1"/></svg>
<svg class="ic" style="left:1744px;top:456px" width="16" height="16" viewBox="0 0 16 16"><g fill="#a9a9a9"><rect x="2" y="3" width="2" height="1"/><rect x="2" y="6" width="2" height="1"/><rect x="2" y="9" width="2" height="1"/><rect x="2" y="12" width="2" height="1"/><rect x="12" y="3" width="2" height="1"/><rect x="12" y="6" width="2" height="1"/><rect x="12" y="9" width="2" height="1"/><rect x="12" y="12" width="2" height="1"/></g><rect x="4" y="1" width="8" height="14" rx="0.8" fill="#444"/><rect x="6.5" y="1" width="3" height="14" fill="#626262"/></svg>
<span class="t b" style="left:1762px;top:457px;">S.M.A.R.T.: Samsung SSD 990 PRO 2TB [D:]</span>
<div style="left:1760px;top:473px;width:817px;height:16px;background:#f0f0f0"></div>
<div style="left:1760px;top:489px;width:817px;height:1px;background:#f0f0f0"></div>
<div style="left:1744px;top:489px;width:16px;height:1px;background:#e9e9e9"></div>
<svg class="ic" style="left:1744px;top:473px" width="16" height="16" viewBox="0 0 16 16"><rect x="7.2" y="1" width="1.8" height="4" fill="#d8d8d8"/><rect x="7.2" y="5" width="1.8" height="7" fill="#cf2a2a"/><circle cx="8.1" cy="12.7" r="2" fill="#d40f0f"/></svg>
<span class="t b" style="left:1762px;top:474px;">Temperatura dysku</span>
<span class="t r b" style="left:2291px;top:474px;width:120px;">2 °C</span>
<span class="t r b" style="left:2371px;top:474px;width:120px;">32 °C</span>
<span class="t r b" style="left:2451px;top:474px;width:120px;">37 °C</span>
<div style="left:1760px;top:506px;width:817px;height:1px;background:#f0f0f0"></div>
<div style="left:1744px;top:506px;width:16px;height:1px;background:#e9e9e9"></div>
<svg class="ic" style="left:1744px;top:490px" width="16" height="16" viewBox="0 0 16 16"><path d="M13.2 9.8A5.3 5.3 0 1 1 11.6 4.0" fill="none" stroke="#4d5257" stroke-width="1.4"/><circle cx="12.3" cy="4.6" r="1.3" fill="#1e1e1e"/><path d="M8 5.2V8.6L10 10.4" fill="none" stroke="#3d4247" stroke-width="1.3"/></svg>
<span class="t " style="left:1762px;top:490px;">Pozostały czas życia dysku</span>
<span class="t r " style="left:2291px;top:490px;width:120px;">0 %</span>
<span class="t r " style="left:2371px;top:490px;width:120px;">98.0 %</span>
<span class="t r " style="left:2451px;top:490px;width:120px;">98.0 %</span>
<div style="left:1760px;top:507px;width:817px;height:16px;background:#f0f0f0"></div>
<div style="left:1760px;top:523px;width:817px;height:1px;background:#f0f0f0"></div>
<div style="left:1744px;top:523px;width:16px;height:1px;background:#e9e9e9"></div>
<svg class="ic" style="left:1744px;top:507px" width="16" height="16" viewBox="0 0 16 16"><path d="M13.2 9.8A5.3 5.3 0 1 1 11.6 4.0" fill="none" stroke="#4d5257" stroke-width="1.4"/><circle cx="12.3" cy="4.6" r="1.3" fill="#1e1e1e"/><path d="M8 5.2V8.6L10 10.4" fill="none" stroke="#3d4247" stroke-width="1.3"/></svg>
<span class="t " style="left:1762px;top:507px;">Dostępna rezerwa</span>
<span class="t r " style="left:2291px;top:507px;width:120px;">0 %</span>
<span class="t r " style="left:2371px;top:507px;width:120px;">100.0 %</span>
<span class="t r " style="left:2451px;top:507px;width:120px;">100.0 %</span>
<div style="left:1760px;top:540px;width:817px;height:1px;background:#f0f0f0"></div>
<div style="left:1744px;top:540px;width:16px;height:1px;background:#e9e9e9"></div>
<svg class="ic" style="left:1744px;top:524px" width="16" height="16" viewBox="0 0 16 16"><path d="M13.2 9.8A5.3 5.3 0 1 1 11.6 4.0" fill="none" stroke="#4d5257" stroke-width="1.4"/><circle cx="12.3" cy="4.6" r="1.3" fill="#1e1e1e"/><path d="M8 5.2V8.6L10 10.4" fill="none" stroke="#3d4247" stroke-width="1.3"/></svg>
<span class="t " style="left:1762px;top:524px;">Ostrzeżenie o awarii</span>
<span class="t r " style="left:2291px;top:524px;width:120px;">Nie</span>
<span class="t r " style="left:2371px;top:524px;width:120px;">Nie</span>
<span class="t r " style="left:2451px;top:524px;width:120px;">Nie</span>
<div style="left:1760px;top:541px;width:817px;height:16px;background:#f0f0f0"></div>
<div style="left:1760px;top:557px;width:817px;height:1px;background:#f0f0f0"></div>
<div style="left:1744px;top:557px;width:16px;height:1px;background:#e9e9e9"></div>
<svg class="ic" style="left:1744px;top:541px" width="16" height="16" viewBox="0 0 16 16"><path d="M13.2 9.8A5.3 5.3 0 1 1 11.6 4.0" fill="none" stroke="#4d5257" stroke-width="1.4"/><circle cx="12.3" cy="4.6" r="1.3" fill="#1e1e1e"/><path d="M8 5.2V8.6L10 10.4" fill="none" stroke="#3d4247" stroke-width="1.3"/></svg>
<span class="t " style="left:1762px;top:541px;">Ostrzeżenie o stanie</span>
<span class="t r " style="left:2291px;top:541px;width:120px;">Nie</span>
<span class="t r " style="left:2371px;top:541px;width:120px;">Nie</span>
<span class="t r " style="left:2451px;top:541px;width:120px;">Nie</span>
<div style="left:1760px;top:574px;width:817px;height:1px;background:#f0f0f0"></div>
<div style="left:1744px;top:574px;width:16px;height:1px;background:#e9e9e9"></div>
<svg class="ic" style="left:1744px;top:558px" width="16" height="16" viewBox="0 0 16 16"><path d="M13.2 9.8A5.3 5.3 0 1 1 11.6 4.0" fill="none" stroke="#4d5257" stroke-width="1.4"/><circle cx="12.3" cy="4.6" r="1.3" fill="#1e1e1e"/><path d="M8 5.2V8.6L10 10.4" fill="none" stroke="#3d4247" stroke-width="1.3"/></svg>
<span class="t " style="left:1762px;top:558px;">Całkowite odczyty hosta</span>
<span class="t r " style="left:2291px;top:558px;width:120px;">6 GB</span>
<span class="t r " style="left:2371px;top:558px;width:120px;">30,166 GB</span>
<span class="t r " style="left:2451px;top:558px;width:120px;">30,166 GB</span>
<div style="left:1760px;top:575px;width:817px;height:16px;background:#f0f0f0"></div>
<div style="left:1760px;top:591px;width:817px;height:1px;background:#f0f0f0"></div>
<div style="left:1744px;top:591px;width:16px;height:1px;background:#e9e9e9"></div>
<svg class="ic" style="left:1744px;top:575px" width="16" height="16" viewBox="0 0 16 16"><path d="M13.2 9.8A5.3 5.3 0 1 1 11.6 4.0" fill="none" stroke="#4d5257" stroke-width="1.4"/><circle cx="12.3" cy="4.6" r="1.3" fill="#1e1e1e"/><path d="M8 5.2V8.6L10 10.4" fill="none" stroke="#3d4247" stroke-width="1.3"/></svg>
<span class="t " style="left:1762px;top:575px;">Całkowite zapisy hosta</span>
<span class="t r " style="left:2291px;top:575px;width:120px;">7 GB</span>
<span class="t r " style="left:2371px;top:575px;width:120px;">69,607 GB</span>
<span class="t r " style="left:2451px;top:575px;width:120px;">69,607 GB</span>
<div style="left:1760px;top:608px;width:817px;height:1px;background:#f0f0f0"></div>
<div style="left:1744px;top:608px;width:16px;height:1px;background:#e9e9e9"></div>
<div style="left:1744px;top:609px;width:16px;height:16px;background:#f7f7f7"></div>
<div style="left:1760px;top:609px;width:817px;height:16px;background:#dadada"></div>
<div style="left:1760px;top:625px;width:817px;height:1px;background:#f0f0f0"></div>
<div style="left:1744px;top:625px;width:16px;height:1px;background:#e9e9e9"></div>
<svg class="ic" style="left:1728px;top:609px" width="12" height="16" viewBox="0 0 12 16"><path d="M3 2.5L8.5 8L3 13.5" fill="none" stroke="#2a2a2a" stroke-width="1"/></svg>
<svg class="ic" style="left:1744px;top:609px" width="16" height="16" viewBox="0 0 16 16"><g fill="#a9a9a9"><rect x="2" y="3" width="2" height="1"/><rect x="2" y="6" width="2" height="1"/><rect x="2" y="9" width="2" height="1"/><rect x="2" y="12" width="2" height="1"/><rect x="12" y="3" width="2" height="1"/><rect x="12" y="6" width="2" height="1"/><rect x="12" y="9" width="2" height="1"/><rect x="12" y="12" width="2" height="1"/></g><rect x="4" y="1" width="8" height="14" rx="0.8" fill="#444"/><rect x="6.5" y="1" width="3" height="14" fill="#626262"/></svg>
<span class="t b" style="left:1762px;top:610px;">Dysk: Samsung SSD 980 PRO 2TB</span>
<div style="left:1760px;top:626px;width:817px;height:16px;background:#f0f0f0"></div>
<div style="left:1760px;top:642px;width:817px;height:1px;background:#f0f0f0"></div>
<div style="left:1744px;top:642px;width:16px;height:1px;background:#e9e9e9"></div>
<div style="left:1744px;top:643px;width:16px;height:16px;background:#f7f7f7"></div>
<div style="left:1760px;top:643px;width:817px;height:16px;background:#dadada"></div>
<div style="left:1760px;top:659px;width:817px;height:1px;background:#f0f0f0"></div>
<div style="left:1744px;top:659px;width:16px;height:1px;background:#e9e9e9"></div>
<svg class="ic" style="left:1728px;top:643px" width="12" height="16" viewBox="0 0 12 16"><path d="M3 2.5L8.5 8L3 13.5" fill="none" stroke="#2a2a2a" stroke-width="1"/></svg>
<svg class="ic" style="left:1744px;top:643px" width="16" height="16" viewBox="0 0 16 16"><g fill="#a9a9a9"><rect x="2" y="3" width="2" height="1"/><rect x="2" y="6" width="2" height="1"/><rect x="2" y="9" width="2" height="1"/><rect x="2" y="12" width="2" height="1"/><rect x="12" y="3" width="2" height="1"/><rect x="12" y="6" width="2" height="1"/><rect x="12" y="9" width="2" height="1"/><rect x="12" y="12" width="2" height="1"/></g><rect x="4" y="1" width="8" height="14" rx="0.8" fill="#444"/><rect x="6.5" y="1" width="3" height="14" fill="#626262"/></svg>
<span class="t b" style="left:1762px;top:644px;">Dysk: IR-SSDPR-P34B-02T-80</span>
<div style="left:1760px;top:676px;width:817px;height:1px;background:#f0f0f0"></div>
<div style="left:1744px;top:676px;width:16px;height:1px;background:#e9e9e9"></div>
<div style="left:1744px;top:677px;width:16px;height:16px;background:#f7f7f7"></div>
<div style="left:1760px;top:677px;width:817px;height:16px;background:#dadada"></div>
<div style="left:1760px;top:693px;width:817px;height:1px;background:#f0f0f0"></div>
<div style="left:1744px;top:693px;width:16px;height:1px;background:#e9e9e9"></div>
<svg class="ic" style="left:1728px;top:677px" width="12" height="16" viewBox="0 0 12 16"><path d="M3 2.5L8.5 8L3 13.5" fill="none" stroke="#2a2a2a" stroke-width="1"/></svg>
<svg class="ic" style="left:1744px;top:677px" width="16" height="16" viewBox="0 0 16 16"><g fill="#a9a9a9"><rect x="2" y="3" width="2" height="1"/><rect x="2" y="6" width="2" height="1"/><rect x="2" y="9" width="2" height="1"/><rect x="2" y="12" width="2" height="1"/><rect x="12" y="3" width="2" height="1"/><rect x="12" y="6" width="2" height="1"/><rect x="12" y="9" width="2" height="1"/><rect x="12" y="12" width="2" height="1"/></g><rect x="4" y="1" width="8" height="14" rx="0.8" fill="#444"/><rect x="6.5" y="1" width="3" height="14" fill="#626262"/></svg>
<span class="t b" style="left:1762px;top:678px;">Dysk: Samsung SSD 990 PRO 2TB</span>
<div style="left:1760px;top:694px;width:817px;height:16px;background:#f0f0f0"></div>
<div style="left:1760px;top:710px;width:817px;height:1px;background:#f0f0f0"></div>
<div style="left:1744px;top:710px;width:16px;height:1px;background:#e9e9e9"></div>
<div style="left:1744px;top:711px;width:16px;height:16px;background:#f7f7f7"></div>
<div style="left:1760px;top:711px;width:817px;height:16px;background:#dadada"></div>
<div style="left:1760px;top:727px;width:817px;height:1px;background:#f0f0f0"></div>
<div style="left:1744px;top:727px;width:16px;height:1px;background:#e9e9e9"></div>
<svg class="ic" style="left:1726px;top:711px" width="14" height="16" viewBox="0 0 14 16"><path d="M1 5L7 11L13 5" fill="none" stroke="#303030" stroke-width="1"/></svg>
<svg class="ic" style="left:1744px;top:711px" width="16" height="16" viewBox="0 0 16 16"><g fill="#a9a9a9"><rect x="2" y="3" width="2" height="1"/><rect x="2" y="6" width="2" height="1"/><rect x="2" y="9" width="2" height="1"/><rect x="2" y="12" width="2" height="1"/><rect x="12" y="3" width="2" height="1"/><rect x="12" y="6" width="2" height="1"/><rect x="12" y="9" width="2" height="1"/><rect x="12" y="12" width="2" height="1"/></g><rect x="4" y="1" width="8" height="14" rx="0.8" fill="#444"/><rect x="6.5" y="1" width="3" height="14" fill="#626262"/></svg>
<span class="t b" style="left:1762px;top:712px;">GPU [#0]: NVIDIA GeForce RTX 5080</span>
<div style="left:1760px;top:728px;width:817px;height:16px;background:#f0f0f0"></div>
<div style="left:1760px;top:744px;width:817px;height:1px;background:#f0f0f0"></div>
<div style="left:1744px;top:744px;width:16px;height:1px;background:#e9e9e9"></div>
<svg class="ic" style="left:1744px;top:728px" width="16" height="16" viewBox="0 0 16 16"><rect x="7.2" y="1" width="1.8" height="4" fill="#d8d8d8"/><rect x="7.2" y="5" width="1.8" height="7" fill="#cf2a2a"/><circle cx="8.1" cy="12.7" r="2" fill="#d40f0f"/></svg>
<span class="t b" style="left:1762px;top:729px;">Temperatura GPU</span>
<span class="t r b" style="left:2291px;top:729px;width:120px;">8 °C</span>
<span class="t r b" style="left:2371px;top:729px;width:120px;">25.7 °C</span>
<span class="t r b" style="left:2451px;top:729px;width:120px;">28.2 °C</span>
<div style="left:1760px;top:761px;width:817px;height:1px;background:#f0f0f0"></div>
<div style="left:1744px;top:761px;width:16px;height:1px;background:#e9e9e9"></div>
<svg class="ic" style="left:1744px;top:745px" width="16" height="16" viewBox="0 0 16 16"><rect x="7.2" y="1" width="1.8" height="4" fill="#d8d8d8"/><rect x="7.2" y="5" width="1.8" height="7" fill="#cf2a2a"/><circle cx="8.1" cy="12.7" r="2" fill="#d40f0f"/></svg>
<div style="left:2337px;top:745px;width:80px;height:16px;background:#d1e5fb"></div>
<span class="t b" style="left:1762px;top:746px;">Temperatura GPU Hot Spot</span>
<span class="t r b" style="left:2291px;top:746px;width:120px;">0 °C</span>
<span class="t r b" style="left:2371px;top:746px;width:120px;">36.0 °C</span>
<span class="t r b" style="left:2451px;top:746px;width:120px;">40.0 °C</span>
<div style="left:1760px;top:762px;width:817px;height:16px;background:#f0f0f0"></div>
<div style="left:1760px;top:778px;width:817px;height:1px;background:#f0f0f0"></div>
<div style="left:1744px;top:778px;width:16px;height:1px;background:#e9e9e9"></div>
<svg class="ic" style="left:1744px;top:762px" width="16" height="16" viewBox="0 0 16 16"><path d="M8.4 0.8H12.2L9.4 6.2L12.2 6.4L4.2 15.6L7 9.2L4.4 9Z" fill="#e9b30c"/></svg>
<div style="left:2337px;top:762px;width:80px;height:16px;background:#d1e5fb"></div>
<span class="t b" style="left:1762px;top:763px;">Napięcie rdzenia GPU</span>
<span class="t r b" style="left:2291px;top:763px;width:120px;color:#008000">05 V</span>
<span class="t r b" style="left:2371px;top:763px;width:120px;color:#008000">0.800 V</span>
<span class="t r b" style="left:2451px;top:763px;width:120px;color:#008000">0.960 V</span>
<div style="left:1760px;top:795px;width:817px;height:1px;background:#f0f0f0"></div>
<div style="left:1744px;top:795px;width:16px;height:1px;background:#e9e9e9"></div>
<svg class="ic" style="left:1744px;top:779px" width="16" height="16" viewBox="0 0 16 16"><path d="M8.4 0.8H12.2L9.4 6.2L12.2 6.4L4.2 15.6L7 9.2L4.4 9Z" fill="#e9b30c"/></svg>
<span class="t " style="left:1762px;top:779px;">Napięcie GPU</span>
<span class="t r " style="left:2371px;top:779px;width:120px;">0.800 V</span>
<span class="t r " style="left:2451px;top:779px;width:120px;">12.162 V</span>
<div style="left:1760px;top:812px;width:817px;height:1px;background:#f0f0f0"></div>
<div style="left:1744px;top:812px;width:16px;height:1px;background:#e9e9e9"></div>
<svg class="ic" style="left:1744px;top:796px" width="16" height="16" viewBox="0 0 16 16"><g fill="#1f1f1f"><ellipse cx="8" cy="3.6" rx="3" ry="2.4"/><ellipse cx="8" cy="12.4" rx="3" ry="2.4"/><ellipse cx="3.6" cy="8" rx="2.4" ry="3"/><ellipse cx="12.4" cy="8" rx="2.4" ry="3"/><circle cx="8" cy="8" r="1.6"/></g></svg>
<span class="t " style="left:1762px;top:796px;">Wentylator GPU1</span>
<span class="t r " style="left:2291px;top:796px;width:120px;">RPM</span>
<span class="t r " style="left:2371px;top:796px;width:120px;">0 RPM</span>
<span class="t r " style="left:2451px;top:796px;width:120px;">0 RPM</span>
<div style="left:1760px;top:813px;width:817px;height:16px;background:#f0f0f0"></div>
<div style="left:1760px;top:829px;width:817px;height:1px;background:#f0f0f0"></div>
<div style="left:1744px;top:829px;width:16px;height:1px;background:#e9e9e9"></div>
<svg class="ic" style="left:1744px;top:813px" width="16" height="16" viewBox="0 0 16 16"><g fill="#1f1f1f"><ellipse cx="8" cy="3.6" rx="3" ry="2.4"/><ellipse cx="8" cy="12.4" rx="3" ry="2.4"/><ellipse cx="3.6" cy="8" rx="2.4" ry="3"/><ellipse cx="12.4" cy="8" rx="2.4" ry="3"/><circle cx="8" cy="8" r="1.6"/></g></svg>
<span class="t " style="left:1762px;top:813px;">Wentylator GPU2</span>
<span class="t r " style="left:2291px;top:813px;width:120px;">RPM</span>
<span class="t r " style="left:2371px;top:813px;width:120px;">0 RPM</span>
<span class="t r " style="left:2451px;top:813px;width:120px;">0 RPM</span>
<div style="left:1760px;top:846px;width:817px;height:1px;background:#f0f0f0"></div>
<div style="left:1744px;top:846px;width:16px;height:1px;background:#e9e9e9"></div>
<svg class="ic" style="left:1744px;top:830px" width="16" height="16" viewBox="0 0 16 16"><path d="M8.4 0.8H12.2L9.4 6.2L12.2 6.4L4.2 15.6L7 9.2L4.4 9Z" fill="#e9b30c"/></svg>
<div style="left:2337px;top:830px;width:80px;height:16px;background:#d1e5fb"></div>
<span class="t b" style="left:1762px;top:831px;">Moc GPU</span>
<span class="t r b" style="left:2291px;top:831px;width:120px;">2 W</span>
<span class="t r b" style="left:2371px;top:831px;width:120px;">23.745 W</span>
<span class="t r b" style="left:2451px;top:831px;width:120px;">51.867 W</span>
<div style="left:1760px;top:847px;width:817px;height:16px;background:#f0f0f0"></div>
<div style="left:1760px;top:863px;width:817px;height:1px;background:#f0f0f0"></div>
<div style="left:1744px;top:863px;width:16px;height:1px;background:#e9e9e9"></div>
<svg class="ic" style="left:1744px;top:847px" width="16" height="16" viewBox="0 0 16 16"><path d="M8.4 0.8H12.2L9.4 6.2L12.2 6.4L4.2 15.6L7 9.2L4.4 9Z" fill="#e9b30c"/></svg>
<span class="t " style="left:1762px;top:847px;">GPU 12VHPWR</span>
<span class="t r " style="left:2371px;top:847px;width:120px;">0.557 W</span>
<span class="t r " style="left:2451px;top:847px;width:120px;">48.151 W</span>
<div style="left:1760px;top:880px;width:817px;height:1px;background:#f0f0f0"></div>
<div style="left:1744px;top:880px;width:16px;height:1px;background:#e9e9e9"></div>
<svg class="ic" style="left:1744px;top:864px" width="16" height="16" viewBox="0 0 16 16"><path d="M13.2 9.8A5.3 5.3 0 1 1 11.6 4.0" fill="none" stroke="#4d5257" stroke-width="1.4"/><circle cx="12.3" cy="4.6" r="1.3" fill="#1e1e1e"/><path d="M8 5.2V8.6L10 10.4" fill="none" stroke="#3d4247" stroke-width="1.3"/></svg>
<div style="left:2337px;top:864px;width:80px;height:16px;background:#d1e5fb"></div>
<span class="t b" style="left:1762px;top:865px;">Zegar GPU</span>
<span class="t r b" style="left:2291px;top:865px;width:120px;">MHz</span>
<span class="t r b" style="left:2371px;top:865px;width:120px;">172.0 MHz</span>
<span class="t r b" style="left:2451px;top:865px;width:120px;">2,625.0 MHz</span>
<div style="left:1760px;top:881px;width:817px;height:16px;background:#f0f0f0"></div>
<div style="left:1760px;top:897px;width:817px;height:1px;background:#f0f0f0"></div>
<div style="left:1744px;top:897px;width:16px;height:1px;background:#e9e9e9"></div>
<svg class="ic" style="left:1744px;top:881px" width="16" height="16" viewBox="0 0 16 16"><path d="M13.2 9.8A5.3 5.3 0 1 1 11.6 4.0" fill="none" stroke="#4d5257" stroke-width="1.4"/><circle cx="12.3" cy="4.6" r="1.3" fill="#1e1e1e"/><path d="M8 5.2V8.6L10 10.4" fill="none" stroke="#3d4247" stroke-width="1.3"/></svg>
<div style="left:2337px;top:881px;width:80px;height:16px;background:#d1e5fb"></div>
<span class="t b" style="left:1762px;top:882px;">Zegar pamięci GPU</span>
<span class="t r b" style="left:2291px;top:882px;width:120px;">MHz</span>
<span class="t r b" style="left:2371px;top:882px;width:120px;">67.5 MHz</span>
<span class="t r b" style="left:2451px;top:882px;width:120px;">2,500.2 MHz</span>
<div style="left:1760px;top:914px;width:817px;height:1px;background:#f0f0f0"></div>
<div style="left:1744px;top:914px;width:16px;height:1px;background:#e9e9e9"></div>
<svg class="ic" style="left:1744px;top:898px" width="16" height="16" viewBox="0 0 16 16"><path d="M13.2 9.8A5.3 5.3 0 1 1 11.6 4.0" fill="none" stroke="#4d5257" stroke-width="1.4"/><circle cx="12.3" cy="4.6" r="1.3" fill="#1e1e1e"/><path d="M8 5.2V8.6L10 10.4" fill="none" stroke="#3d4247" stroke-width="1.3"/></svg>
<div style="left:2337px;top:898px;width:80px;height:16px;background:#d1e5fb"></div>
<span class="t " style="left:1762px;top:898px;">Zegar GPU Video</span>
<span class="t r " style="left:2291px;top:898px;width:120px;">MHz</span>
<span class="t r " style="left:2371px;top:898px;width:120px;">592.0 MHz</span>
<span class="t r " style="left:2451px;top:898px;width:120px;">2,272.0 MHz</span>
<div style="left:1760px;top:915px;width:817px;height:16px;background:#f0f0f0"></div>
<div style="left:1760px;top:931px;width:817px;height:1px;background:#f0f0f0"></div>
<div style="left:1744px;top:931px;width:16px;height:1px;background:#e9e9e9"></div>
<svg class="ic" style="left:1744px;top:915px" width="16" height="16" viewBox="0 0 16 16"><path d="M13.2 9.8A5.3 5.3 0 1 1 11.6 4.0" fill="none" stroke="#4d5257" stroke-width="1.4"/><circle cx="12.3" cy="4.6" r="1.3" fill="#1e1e1e"/><path d="M8 5.2V8.6L10 10.4" fill="none" stroke="#3d4247" stroke-width="1.3"/></svg>
<div style="left:2337px;top:915px;width:80px;height:16px;background:#d1e5fb"></div>
<span class="t " style="left:1762px;top:915px;">GPU Decoder</span>
<span class="t r " style="left:2291px;top:915px;width:120px;">MHz</span>
<span class="t r " style="left:2371px;top:915px;width:120px;">24.4 MHz</span>
<span class="t r " style="left:2451px;top:915px;width:120px;">2,622.5 MHz</span>
<div style="left:1760px;top:948px;width:817px;height:1px;background:#f0f0f0"></div>
<div style="left:1744px;top:948px;width:16px;height:1px;background:#e9e9e9"></div>
<svg class="ic" style="left:1744px;top:932px" width="16" height="16" viewBox="0 0 16 16"><path d="M13.2 9.8A5.3 5.3 0 1 1 11.6 4.0" fill="none" stroke="#4d5257" stroke-width="1.4"/><circle cx="12.3" cy="4.6" r="1.3" fill="#1e1e1e"/><path d="M8 5.2V8.6L10 10.4" fill="none" stroke="#3d4247" stroke-width="1.3"/></svg>
<div style="left:2337px;top:932px;width:80px;height:16px;background:#d1e5fb"></div>
<span class="t " style="left:1762px;top:932px;">GPU Encoder Usage</span>
<span class="t r " style="left:2291px;top:932px;width:120px;">877.0 MHz</span>
<span class="t r " style="left:2371px;top:932px;width:120px;">877.0 MHz</span>
<span class="t r " style="left:2451px;top:932px;width:120px;">2,347.0 MHz</span>
<div style="left:1760px;top:949px;width:817px;height:16px;background:#f0f0f0"></div>
<div style="left:1760px;top:965px;width:817px;height:1px;background:#f0f0f0"></div>
<div style="left:1744px;top:965px;width:16px;height:1px;background:#e9e9e9"></div>
<svg class="ic" style="left:1744px;top:949px" width="16" height="16" viewBox="0 0 16 16"><path d="M13.2 9.8A5.3 5.3 0 1 1 11.6 4.0" fill="none" stroke="#4d5257" stroke-width="1.4"/><circle cx="12.3" cy="4.6" r="1.3" fill="#1e1e1e"/><path d="M8 5.2V8.6L10 10.4" fill="none" stroke="#3d4247" stroke-width="1.3"/></svg>
<div style="left:2337px;top:949px;width:80px;height:16px;background:#d1e5fb"></div>
<span class="t " style="left:1762px;top:949px;">5080 Usage</span>
<span class="t r " style="left:2291px;top:949px;width:120px;">0.0 %</span>
<span class="t r " style="left:2371px;top:949px;width:120px;">0.0 %</span>
<span class="t r " style="left:2451px;top:949px;width:120px;">3.0 %</span>
<div style="left:1760px;top:982px;width:817px;height:1px;background:#f0f0f0"></div>
<div style="left:1744px;top:982px;width:16px;height:1px;background:#e9e9e9"></div>
<svg class="ic" style="left:1744px;top:966px" width="16" height="16" viewBox="0 0 16 16"><path d="M13.2 9.8A5.3 5.3 0 1 1 11.6 4.0" fill="none" stroke="#4d5257" stroke-width="1.4"/><circle cx="12.3" cy="4.6" r="1.3" fill="#1e1e1e"/><path d="M8 5.2V8.6L10 10.4" fill="none" stroke="#3d4247" stroke-width="1.3"/></svg>
<div style="left:2337px;top:966px;width:80px;height:16px;background:#d1e5fb"></div>
<span class="t " style="left:1762px;top:966px;">Obciążenie kontrolera pamięci GPU</span>
<span class="t r " style="left:2291px;top:966px;width:120px;">25.0 %</span>
<span class="t r " style="left:2371px;top:966px;width:120px;">0.0 %</span>
<span class="t r " style="left:2451px;top:966px;width:120px;">31.0 %</span>
<div style="left:1760px;top:983px;width:817px;height:16px;background:#f0f0f0"></div>
<div style="left:1760px;top:999px;width:817px;height:1px;background:#f0f0f0"></div>
<div style="left:1744px;top:999px;width:16px;height:1px;background:#e9e9e9"></div>
<svg class="ic" style="left:1744px;top:983px" width="16" height="16" viewBox="0 0 16 16"><path d="M13.2 9.8A5.3 5.3 0 1 1 11.6 4.0" fill="none" stroke="#4d5257" stroke-width="1.4"/><circle cx="12.3" cy="4.6" r="1.3" fill="#1e1e1e"/><path d="M8 5.2V8.6L10 10.4" fill="none" stroke="#3d4247" stroke-width="1.3"/></svg>
<span class="t " style="left:1762px;top:983px;">Obciążenie silnika wideo GPU</span>
<span class="t r " style="left:2291px;top:983px;width:120px;">0.0 %</span>
<span class="t r " style="left:2371px;top:983px;width:120px;">0.0 %</span>
<span class="t r " style="left:2451px;top:983px;width:120px;">0.0 %</span>
<div style="left:1760px;top:1016px;width:817px;height:1px;background:#f0f0f0"></div>
<div style="left:1744px;top:1016px;width:16px;height:1px;background:#e9e9e9"></div>
<svg class="ic" style="left:1744px;top:1000px" width="16" height="16" viewBox="0 0 16 16"><path d="M13.2 9.8A5.3 5.3 0 1 1 11.6 4.0" fill="none" stroke="#4d5257" stroke-width="1.4"/><circle cx="12.3" cy="4.6" r="1.3" fill="#1e1e1e"/><path d="M8 5.2V8.6L10 10.4" fill="none" stroke="#3d4247" stroke-width="1.3"/></svg>
<div style="left:2337px;top:1000px;width:80px;height:16px;background:#d1e5fb"></div>
<span class="t " style="left:1762px;top:1000px;">Obciążenie magistrali GPU</span>
<span class="t r " style="left:2291px;top:1000px;width:120px;">2.0 %</span>
<span class="t r " style="left:2371px;top:1000px;width:120px;">0.0 %</span>
<span class="t r " style="left:2451px;top:1000px;width:120px;">100.0 %</span>
<div style="left:1760px;top:1017px;width:817px;height:16px;background:#f0f0f0"></div>
<div style="left:1760px;top:1033px;width:817px;height:1px;background:#f0f0f0"></div>
<div style="left:1744px;top:1033px;width:16px;height:1px;background:#e9e9e9"></div>
<svg class="ic" style="left:1744px;top:1017px" width="16" height="16" viewBox="0 0 16 16"><path d="M13.2 9.8A5.3 5.3 0 1 1 11.6 4.0" fill="none" stroke="#4d5257" stroke-width="1.4"/><circle cx="12.3" cy="4.6" r="1.3" fill="#1e1e1e"/><path d="M8 5.2V8.6L10 10.4" fill="none" stroke="#3d4247" stroke-width="1.3"/></svg>
<span class="t " style="left:1762px;top:1017px;">Memory Usage</span>
<span class="t r " style="left:2291px;top:1017px;width:120px;">5.8 %</span>
<span class="t r " style="left:2371px;top:1017px;width:120px;">5.6 %</span>
<span class="t r " style="left:2451px;top:1017px;width:120px;">5.8 %</span>
<div style="left:1776px;top:1050px;width:801px;height:1px;background:#f0f0f0"></div>
<div style="left:1760px;top:1050px;width:16px;height:1px;background:#e9e9e9"></div>
<svg class="ic" style="left:1742px;top:1034px" width="14" height="16" viewBox="0 0 14 16"><path d="M1 5L7 11L13 5" fill="none" stroke="#303030" stroke-width="1"/></svg>
<svg class="ic" style="left:1760px;top:1034px" width="16" height="16" viewBox="0 0 16 16"><path d="M13.2 9.8A5.3 5.3 0 1 1 11.6 4.0" fill="none" stroke="#4d5257" stroke-width="1.4"/><circle cx="12.3" cy="4.6" r="1.3" fill="#1e1e1e"/><path d="M8 5.2V8.6L10 10.4" fill="none" stroke="#3d4247" stroke-width="1.3"/></svg>
<span class="t " style="left:1778px;top:1034px;">GPU D3D Wykorzystanie</span>
<span class="t r " style="left:2371px;top:1034px;width:120px;">0.0 %</span>
<span class="t r " style="left:2451px;top:1034px;width:120px;">5.8 %</span>
<div style="left:1776px;top:1051px;width:801px;height:16px;background:#f0f0f0"></div>
<div style="left:1776px;top:1067px;width:801px;height:1px;background:#f0f0f0"></div>
<div style="left:1760px;top:1067px;width:16px;height:1px;background:#e9e9e9"></div>
<svg class="ic" style="left:1760px;top:1051px" width="16" height="16" viewBox="0 0 16 16"><path d="M13.2 9.8A5.3 5.3 0 1 1 11.6 4.0" fill="none" stroke="#4d5257" stroke-width="1.4"/><circle cx="12.3" cy="4.6" r="1.3" fill="#1e1e1e"/><path d="M8 5.2V8.6L10 10.4" fill="none" stroke="#3d4247" stroke-width="1.3"/></svg>
<div style="left:2337px;top:1051px;width:80px;height:16px;background:#d1e5fb"></div>
<span class="t " style="left:1778px;top:1051px;">Wykorzystanie GPU D3D</span>
<span class="t r " style="left:2291px;top:1051px;width:120px;">0.4 %</span>
<span class="t r " style="left:2371px;top:1051px;width:120px;">0.1 %</span>
<span class="t r " style="left:2451px;top:1051px;width:120px;">5.8 %</span>
<div style="left:1776px;top:1084px;width:801px;height:1px;background:#f0f0f0"></div>
<div style="left:1760px;top:1084px;width:16px;height:1px;background:#e9e9e9"></div>
<svg class="ic" style="left:1760px;top:1068px" width="16" height="16" viewBox="0 0 16 16"><path d="M13.2 9.8A5.3 5.3 0 1 1 11.6 4.0" fill="none" stroke="#4d5257" stroke-width="1.4"/><circle cx="12.3" cy="4.6" r="1.3" fill="#1e1e1e"/><path d="M8 5.2V8.6L10 10.4" fill="none" stroke="#3d4247" stroke-width="1.3"/></svg>
<span class="t " style="left:1778px;top:1068px;">GPU Video Decode 0 Wykorzystanie</span>
<span class="t r " style="left:2291px;top:1068px;width:120px;">0.0 %</span>
<span class="t r " style="left:2371px;top:1068px;width:120px;">0.0 %</span>
<span class="t r " style="left:2451px;top:1068px;width:120px;">0.0 %</span>
<div style="left:1776px;top:1085px;width:801px;height:16px;background:#f0f0f0"></div>
<div style="left:1776px;top:1101px;width:801px;height:1px;background:#f0f0f0"></div>
<div style="left:1760px;top:1101px;width:16px;height:1px;background:#e9e9e9"></div>
<svg class="ic" style="left:1760px;top:1085px" width="16" height="16" viewBox="0 0 16 16"><path d="M13.2 9.8A5.3 5.3 0 1 1 11.6 4.0" fill="none" stroke="#4d5257" stroke-width="1.4"/><circle cx="12.3" cy="4.6" r="1.3" fill="#1e1e1e"/><path d="M8 5.2V8.6L10 10.4" fill="none" stroke="#3d4247" stroke-width="1.3"/></svg>
<span class="t " style="left:1778px;top:1085px;">GPU Video Decode 1 Wykorzystanie</span>
<span class="t r " style="left:2291px;top:1085px;width:120px;">0.0 %</span>
<span class="t r " style="left:2371px;top:1085px;width:120px;">0.0 %</span>
<span class="t r " style="left:2451px;top:1085px;width:120px;">0.0 %</span>
<div style="left:1776px;top:1118px;width:801px;height:1px;background:#f0f0f0"></div>
<div style="left:1760px;top:1118px;width:16px;height:1px;background:#e9e9e9"></div>
<svg class="ic" style="left:1760px;top:1102px" width="16" height="16" viewBox="0 0 16 16"><path d="M13.2 9.8A5.3 5.3 0 1 1 11.6 4.0" fill="none" stroke="#4d5257" stroke-width="1.4"/><circle cx="12.3" cy="4.6" r="1.3" fill="#1e1e1e"/><path d="M8 5.2V8.6L10 10.4" fill="none" stroke="#3d4247" stroke-width="1.3"/></svg>
<span class="t " style="left:1778px;top:1102px;">GPU Video Encode 0 Wykorzystanie</span>
<span class="t r " style="left:2291px;top:1102px;width:120px;">0.0 %</span>
<span class="t r " style="left:2371px;top:1102px;width:120px;">0.0 %</span>
<span class="t r " style="left:2451px;top:1102px;width:120px;">0.0 %</span>
<div style="left:1776px;top:1119px;width:801px;height:16px;background:#f0f0f0"></div>
<div style="left:1776px;top:1135px;width:801px;height:1px;background:#f0f0f0"></div>
<div style="left:1760px;top:1135px;width:16px;height:1px;background:#e9e9e9"></div>
<svg class="ic" style="left:1760px;top:1119px" width="16" height="16" viewBox="0 0 16 16"><path d="M13.2 9.8A5.3 5.3 0 1 1 11.6 4.0" fill="none" stroke="#4d5257" stroke-width="1.4"/><circle cx="12.3" cy="4.6" r="1.3" fill="#1e1e1e"/><path d="M8 5.2V8.6L10 10.4" fill="none" stroke="#3d4247" stroke-width="1.3"/></svg>
<span class="t " style="left:1778px;top:1119px;">GPU Video Encode 1 Wykorzystanie</span>
<span class="t r " style="left:2291px;top:1119px;width:120px;">0.0 %</span>
<span class="t r " style="left:2371px;top:1119px;width:120px;">0.0 %</span>
<span class="t r " style="left:2451px;top:1119px;width:120px;">0.0 %</span>
<div style="left:1776px;top:1152px;width:801px;height:1px;background:#f0f0f0"></div>
<div style="left:1760px;top:1152px;width:16px;height:1px;background:#e9e9e9"></div>
<svg class="ic" style="left:1760px;top:1136px" width="16" height="16" viewBox="0 0 16 16"><path d="M13.2 9.8A5.3 5.3 0 1 1 11.6 4.0" fill="none" stroke="#4d5257" stroke-width="1.4"/><circle cx="12.3" cy="4.6" r="1.3" fill="#1e1e1e"/><path d="M8 5.2V8.6L10 10.4" fill="none" stroke="#3d4247" stroke-width="1.3"/></svg>
<span class="t " style="left:1778px;top:1136px;">GPU VR Wykorzystanie</span>
<span class="t r " style="left:2291px;top:1136px;width:120px;">0.0 %</span>
<span class="t r " style="left:2371px;top:1136px;width:120px;">0.0 %</span>
<span class="t r " style="left:2451px;top:1136px;width:120px;">0.0 %</span>
<div style="left:1760px;top:1153px;width:817px;height:16px;background:#f0f0f0"></div>
<div style="left:1760px;top:1169px;width:817px;height:1px;background:#f0f0f0"></div>
<div style="left:1744px;top:1169px;width:16px;height:1px;background:#e9e9e9"></div>
<svg class="ic" style="left:1744px;top:1153px" width="16" height="16" viewBox="0 0 16 16"><path d="M13.2 9.8A5.3 5.3 0 1 1 11.6 4.0" fill="none" stroke="#4d5257" stroke-width="1.4"/><circle cx="12.3" cy="4.6" r="1.3" fill="#1e1e1e"/><path d="M8 5.2V8.6L10 10.4" fill="none" stroke="#3d4247" stroke-width="1.3"/></svg>
<span class="t " style="left:1762px;top:1153px;">GPU Wentylator1</span>
<span class="t r " style="left:2291px;top:1153px;width:120px;">0 %</span>
<span class="t r " style="left:2371px;top:1153px;width:120px;">0 %</span>
<span class="t r " style="left:2451px;top:1153px;width:120px;">0 %</span>
<div style="left:1760px;top:1186px;width:817px;height:1px;background:#f0f0f0"></div>
<div style="left:1744px;top:1186px;width:16px;height:1px;background:#e9e9e9"></div>
<svg class="ic" style="left:1744px;top:1170px" width="16" height="16" viewBox="0 0 16 16"><path d="M13.2 9.8A5.3 5.3 0 1 1 11.6 4.0" fill="none" stroke="#4d5257" stroke-width="1.4"/><circle cx="12.3" cy="4.6" r="1.3" fill="#1e1e1e"/><path d="M8 5.2V8.6L10 10.4" fill="none" stroke="#3d4247" stroke-width="1.3"/></svg>
<span class="t " style="left:1762px;top:1170px;">GPU Wentylator2</span>
<span class="t r " style="left:2291px;top:1170px;width:120px;">0 %</span>
<span class="t r " style="left:2371px;top:1170px;width:120px;">0 %</span>
<span class="t r " style="left:2451px;top:1170px;width:120px;">0 %</span>
<div style="left:1776px;top:1187px;width:801px;height:16px;background:#f0f0f0"></div>
<div style="left:1776px;top:1203px;width:801px;height:1px;background:#f0f0f0"></div>
<div style="left:1760px;top:1203px;width:16px;height:1px;background:#e9e9e9"></div>
<svg class="ic" style="left:1744px;top:1187px" width="12" height="16" viewBox="0 0 12 16"><path d="M3 2.5L8.5 8L3 13.5" fill="none" stroke="#2a2a2a" stroke-width="1"/></svg>
<svg class="ic" style="left:1760px;top:1187px" width="16" height="16" viewBox="0 0 16 16"><path d="M13.2 9.8A5.3 5.3 0 1 1 11.6 4.0" fill="none" stroke="#4d5257" stroke-width="1.4"/><circle cx="12.3" cy="4.6" r="1.3" fill="#1e1e1e"/><path d="M8 5.2V8.6L10 10.4" fill="none" stroke="#3d4247" stroke-width="1.3"/></svg>
<span class="t " style="left:1778px;top:1187px;">GPU Ograniczniki wydajności</span>
<span class="t r " style="left:2291px;top:1187px;width:120px;">Tak</span>
<span class="t r " style="left:2371px;top:1187px;width:120px;">Nie</span>
<span class="t r " style="left:2451px;top:1187px;width:120px;">Tak</span>
<div style="left:1760px;top:1220px;width:817px;height:1px;background:#f0f0f0"></div>
<div style="left:1744px;top:1220px;width:16px;height:1px;background:#e9e9e9"></div>
<svg class="ic" style="left:1744px;top:1204px" width="16" height="16" viewBox="0 0 16 16"><path d="M13.2 9.8A5.3 5.3 0 1 1 11.6 4.0" fill="none" stroke="#4d5257" stroke-width="1.4"/><circle cx="12.3" cy="4.6" r="1.3" fill="#1e1e1e"/><path d="M8 5.2V8.6L10 10.4" fill="none" stroke="#3d4247" stroke-width="1.3"/></svg>
<div style="left:2337px;top:1204px;width:80px;height:16px;background:#d1e5fb"></div>
<span class="t " style="left:1762px;top:1204px;">Całkowita moc GPU [% of TDP]</span>
<span class="t r " style="left:2291px;top:1204px;width:120px;">6.8 %</span>
<span class="t r " style="left:2371px;top:1204px;width:120px;">6.5 %</span>
<span class="t r " style="left:2451px;top:1204px;width:120px;">14.8 %</span>
<div style="left:1760px;top:1221px;width:817px;height:16px;background:#f0f0f0"></div>
<div style="left:1760px;top:1237px;width:817px;height:1px;background:#f0f0f0"></div>
<div style="left:1744px;top:1237px;width:16px;height:1px;background:#e9e9e9"></div>
<svg class="ic" style="left:1744px;top:1221px" width="16" height="16" viewBox="0 0 16 16"><path d="M13.2 9.8A5.3 5.3 0 1 1 11.6 4.0" fill="none" stroke="#4d5257" stroke-width="1.4"/><circle cx="12.3" cy="4.6" r="1.3" fill="#1e1e1e"/><path d="M8 5.2V8.6L10 10.4" fill="none" stroke="#3d4247" stroke-width="1.3"/></svg>
<div style="left:2337px;top:1221px;width:80px;height:16px;background:#d1e5fb"></div>
<span class="t " style="left:1762px;top:1221px;">Całkowita moc GPU (znormalizowana) [% of TDP]</span>
<span class="t r " style="left:2291px;top:1221px;width:120px;">7.9 %</span>
<span class="t r " style="left:2371px;top:1221px;width:120px;">6.5 %</span>
<span class="t r " style="left:2451px;top:1221px;width:120px;">15.3 %</span>
<div style="left:1760px;top:1254px;width:817px;height:1px;background:#f0f0f0"></div>
<div style="left:1744px;top:1254px;width:16px;height:1px;background:#e9e9e9"></div>
<svg class="ic" style="left:1744px;top:1238px" width="16" height="16" viewBox="0 0 16 16"><path d="M13.2 9.8A5.3 5.3 0 1 1 11.6 4.0" fill="none" stroke="#4d5257" stroke-width="1.4"/><circle cx="12.3" cy="4.6" r="1.3" fill="#1e1e1e"/><path d="M8 5.2V8.6L10 10.4" fill="none" stroke="#3d4247" stroke-width="1.3"/></svg>
<span class="t " style="left:1762px;top:1238px;">Dostępna pamięć GPU</span>
<span class="t r " style="left:2291px;top:1238px;width:120px;">15,364 MB</span>
<span class="t r " style="left:2371px;top:1238px;width:120px;">15,353 MB</span>
<span class="t r " style="left:2451px;top:1238px;width:120px;">15,398 MB</span>
<div style="left:1760px;top:1255px;width:817px;height:16px;background:#f0f0f0"></div>
<div style="left:1760px;top:1271px;width:817px;height:1px;background:#f0f0f0"></div>
<div style="left:1744px;top:1271px;width:16px;height:1px;background:#e9e9e9"></div>
<svg class="ic" style="left:1744px;top:1255px" width="16" height="16" viewBox="0 0 16 16"><path d="M13.2 9.8A5.3 5.3 0 1 1 11.6 4.0" fill="none" stroke="#4d5257" stroke-width="1.4"/><circle cx="12.3" cy="4.6" r="1.3" fill="#1e1e1e"/><path d="M8 5.2V8.6L10 10.4" fill="none" stroke="#3d4247" stroke-width="1.3"/></svg>
<div style="left:2337px;top:1255px;width:80px;height:16px;background:#d1e5fb"></div>
<span class="t " style="left:1762px;top:1255px;">Przydzielono pamięć GPU</span>
<span class="t r " style="left:2291px;top:1255px;width:120px;">939 MB</span>
<span class="t r " style="left:2371px;top:1255px;width:120px;">905 MB</span>
<span class="t r " style="left:2451px;top:1255px;width:120px;">950 MB</span>
<div style="left:1760px;top:1288px;width:817px;height:1px;background:#f0f0f0"></div>
<div style="left:1744px;top:1288px;width:16px;height:1px;background:#e9e9e9"></div>
<svg class="ic" style="left:1744px;top:1272px" width="16" height="16" viewBox="0 0 16 16"><path d="M13.2 9.8A5.3 5.3 0 1 1 11.6 4.0" fill="none" stroke="#4d5257" stroke-width="1.4"/><circle cx="12.3" cy="4.6" r="1.3" fill="#1e1e1e"/><path d="M8 5.2V8.6L10 10.4" fill="none" stroke="#3d4247" stroke-width="1.3"/></svg>
<span class="t " style="left:1762px;top:1272px;">Dedykowana pamięć GPU D3D</span>
<span class="t r " style="left:2291px;top:1272px;width:120px;">622 MB</span>
<span class="t r " style="left:2371px;top:1272px;width:120px;">589 MB</span>
<span class="t r " style="left:2451px;top:1272px;width:120px;">634 MB</span>
<div style="left:1760px;top:1289px;width:817px;height:16px;background:#f0f0f0"></div>
<div style="left:1760px;top:1305px;width:817px;height:1px;background:#f0f0f0"></div>
<div style="left:1744px;top:1305px;width:16px;height:1px;background:#e9e9e9"></div>
<svg class="ic" style="left:1744px;top:1289px" width="16" height="16" viewBox="0 0 16 16"><path d="M13.2 9.8A5.3 5.3 0 1 1 11.6 4.0" fill="none" stroke="#4d5257" stroke-width="1.4"/><circle cx="12.3" cy="4.6" r="1.3" fill="#1e1e1e"/><path d="M8 5.2V8.6L10 10.4" fill="none" stroke="#3d4247" stroke-width="1.3"/></svg>
<span class="t " style="left:1762px;top:1289px;">Dynamiczna pamięć GPU D3D</span>
<span class="t r " style="left:2291px;top:1289px;width:120px;">61 MB</span>
<span class="t r " style="left:2371px;top:1289px;width:120px;">61 MB</span>
<span class="t r " style="left:2451px;top:1289px;width:120px;">70 MB</span>
<div style="left:1760px;top:1322px;width:817px;height:1px;background:#f0f0f0"></div>
<div style="left:1744px;top:1322px;width:16px;height:1px;background:#e9e9e9"></div>
<svg class="ic" style="left:1744px;top:1306px" width="16" height="16" viewBox="0 0 16 16"><path d="M13.2 9.8A5.3 5.3 0 1 1 11.6 4.0" fill="none" stroke="#4d5257" stroke-width="1.4"/><circle cx="12.3" cy="4.6" r="1.3" fill="#1e1e1e"/><path d="M8 5.2V8.6L10 10.4" fill="none" stroke="#3d4247" stroke-width="1.3"/></svg>
<span class="t " style="left:1762px;top:1306px;">Szybkość łącza PCIe</span>
<span class="t r " style="left:2291px;top:1306px;width:120px;">2.5 GT/s</span>
<span class="t r " style="left:2371px;top:1306px;width:120px;">2.5 GT/s</span>
<span class="t r " style="left:2451px;top:1306px;width:120px;">32.0 GT/s</span>
<div style="left:1760px;top:1323px;width:817px;height:16px;background:#f0f0f0"></div>
<div style="left:1760px;top:1339px;width:817px;height:1px;background:#f0f0f0"></div>
<div style="left:1744px;top:1339px;width:16px;height:1px;background:#e9e9e9"></div>
<div style="left:1744px;top:1340px;width:16px;height:16px;background:#f7f7f7"></div>
<div style="left:1760px;top:1340px;width:817px;height:16px;background:#dadada"></div>
<div style="left:1760px;top:1356px;width:817px;height:1px;background:#f0f0f0"></div>
<div style="left:1744px;top:1356px;width:16px;height:1px;background:#e9e9e9"></div>
<svg class="ic" style="left:1726px;top:1340px" width="14" height="16" viewBox="0 0 14 16"><path d="M1 5L7 11L13 5" fill="none" stroke="#303030" stroke-width="1"/></svg>
<svg class="ic" style="left:1744px;top:1340px" width="16" height="16" viewBox="0 0 16 16"><g fill="#a9a9a9"><rect x="2" y="3" width="2" height="1"/><rect x="2" y="6" width="2" height="1"/><rect x="2" y="9" width="2" height="1"/><rect x="2" y="12" width="2" height="1"/><rect x="12" y="3" width="2" height="1"/><rect x="12" y="6" width="2" height="1"/><rect x="12" y="9" width="2" height="1"/><rect x="12" y="12" width="2" height="1"/></g><rect x="4" y="1" width="8" height="14" rx="0.8" fill="#444"/><rect x="6.5" y="1" width="3" height="14" fill="#626262"/></svg>
<span class="t b" style="left:1762px;top:1341px;">Aquacomputer highflow NEXT</span>
<div style="left:1760px;top:1357px;width:817px;height:16px;background:#f0f0f0"></div>
<div style="left:1760px;top:1373px;width:817px;height:1px;background:#f0f0f0"></div>
<div style="left:1744px;top:1373px;width:16px;height:1px;background:#e9e9e9"></div>
<svg class="ic" style="left:1744px;top:1357px" width="16" height="16" viewBox="0 0 16 16"><rect x="7.2" y="1" width="1.8" height="4" fill="#d8d8d8"/><rect x="7.2" y="5" width="1.8" height="7" fill="#cf2a2a"/><circle cx="8.1" cy="12.7" r="2" fill="#d40f0f"/></svg>
<span class="t b" style="left:1762px;top:1358px;">Loop Temp</span>
<span class="t r b" style="left:2291px;top:1358px;width:120px;">27.3 °C</span>
<span class="t r b" style="left:2371px;top:1358px;width:120px;">26.0 °C</span>
<span class="t r b" style="left:2451px;top:1358px;width:120px;">27.6 °C</span>
</div>
<div style="left:0px;top:0px;width:860px;height:1px;background:#606060"></div>
<div style="left:0px;top:1361px;width:860px;height:1px;background:#606060"></div>
<div style="left:0px;top:0px;width:1px;height:1362px;background:#606060"></div>
<div style="left:859px;top:0px;width:1px;height:1362px;background:#606060"></div>
</div>
<div class="pn" style="left:2580px;top:23px;width:860px;height:1362px">
<div style="position:absolute;left:-2580px;top:-23px;width:3440px;height:1440px">
<span class="t hd" style="left:2587px;top:26px;">Czujnik</span>
<span class="t r hd" style="left:3178px;top:26px;width:90px;">Aktualny</span>
<span class="t r hd" style="left:3258px;top:26px;width:90px;">Minimum</span>
<span class="t r hd" style="left:3338px;top:26px;width:90px;">Maksimum</span>
<div style="left:3193px;top:25px;width:1px;height:23px;background:#e5e5e5"></div>
<div style="left:3273px;top:25px;width:1px;height:23px;background:#e5e5e5"></div>
<div style="left:3353px;top:25px;width:1px;height:23px;background:#e5e5e5"></div>
<div style="left:3433px;top:25px;width:1px;height:23px;background:#e5e5e5"></div>
<div style="left:2620px;top:64px;width:814px;height:1px;background:#f0f0f0"></div>
<div style="left:2604px;top:64px;width:16px;height:1px;background:#e9e9e9"></div>
<svg class="ic" style="left:2604px;top:48px" width="16" height="16" viewBox="0 0 16 16"><path d="M8.4 0.8H12.2L9.4 6.2L12.2 6.4L4.2 15.6L7 9.2L4.4 9Z" fill="#e9b30c"/></svg>
<span class="t " style="left:2622px;top:48px;">VCC5</span>
<span class="t r " style="left:3148px;top:48px;width:120px;">4.740 V</span>
<span class="t r " style="left:3228px;top:48px;width:120px;">4.740 V</span>
<span class="t r " style="left:3308px;top:48px;width:120px;">4.740 V</span>
<div style="left:2620px;top:65px;width:814px;height:16px;background:#f0f0f0"></div>
<div style="left:2620px;top:81px;width:814px;height:1px;background:#f0f0f0"></div>
<div style="left:2604px;top:81px;width:16px;height:1px;background:#e9e9e9"></div>
<svg class="ic" style="left:2604px;top:65px" width="16" height="16" viewBox="0 0 16 16"><path d="M8.4 0.8H12.2L9.4 6.2L12.2 6.4L4.2 15.6L7 9.2L4.4 9Z" fill="#e9b30c"/></svg>
<span class="t " style="left:2622px;top:65px;">VCC5 USB</span>
<span class="t r " style="left:3148px;top:65px;width:120px;">4.940 V</span>
<span class="t r " style="left:3228px;top:65px;width:120px;">4.940 V</span>
<span class="t r " style="left:3308px;top:65px;width:120px;">4.940 V</span>
<div style="left:2620px;top:98px;width:814px;height:1px;background:#f0f0f0"></div>
<div style="left:2604px;top:98px;width:16px;height:1px;background:#e9e9e9"></div>
<svg class="ic" style="left:2604px;top:82px" width="16" height="16" viewBox="0 0 16 16"><path d="M13.2 9.8A5.3 5.3 0 1 1 11.6 4.0" fill="none" stroke="#4d5257" stroke-width="1.4"/><circle cx="12.3" cy="4.6" r="1.3" fill="#1e1e1e"/><path d="M8 5.2V8.6L10 10.4" fill="none" stroke="#3d4247" stroke-width="1.3"/></svg>
<span class="t " style="left:2622px;top:82px;">Jakość wody</span>
<span class="t r " style="left:3148px;top:82px;width:120px;">100.0 %</span>
<span class="t r " style="left:3228px;top:82px;width:120px;">100.0 %</span>
<span class="t r " style="left:3308px;top:82px;width:120px;">100.0 %</span>
<div style="left:2620px;top:99px;width:814px;height:16px;background:#f0f0f0"></div>
<div style="left:2620px;top:115px;width:814px;height:1px;background:#f0f0f0"></div>
<div style="left:2604px;top:115px;width:16px;height:1px;background:#e9e9e9"></div>
<svg class="ic" style="left:2604px;top:99px" width="16" height="16" viewBox="0 0 16 16"><path d="M13.2 9.8A5.3 5.3 0 1 1 11.6 4.0" fill="none" stroke="#4d5257" stroke-width="1.4"/><circle cx="12.3" cy="4.6" r="1.3" fill="#1e1e1e"/><path d="M8 5.2V8.6L10 10.4" fill="none" stroke="#3d4247" stroke-width="1.3"/></svg>
<span class="t b" style="left:2622px;top:100px;">Water Flow</span>
<span class="t r b" style="left:3148px;top:100px;width:120px;">97.4 l/h</span>
<span class="t r b" style="left:3228px;top:100px;width:120px;">96.9 l/h</span>
<span class="t r b" style="left:3308px;top:100px;width:120px;">97.6 l/h</span>
<div style="left:2620px;top:132px;width:814px;height:1px;background:#f0f0f0"></div>
<div style="left:2604px;top:132px;width:16px;height:1px;background:#e9e9e9"></div>
<svg class="ic" style="left:2604px;top:116px" width="16" height="16" viewBox="0 0 16 16"><path d="M13.2 9.8A5.3 5.3 0 1 1 11.6 4.0" fill="none" stroke="#4d5257" stroke-width="1.4"/><circle cx="12.3" cy="4.6" r="1.3" fill="#1e1e1e"/><path d="M8 5.2V8.6L10 10.4" fill="none" stroke="#3d4247" stroke-width="1.3"/></svg>
<span class="t " style="left:2622px;top:116px;">Przewodność</span>
<span class="t r " style="left:3148px;top:116px;width:120px;">11.900 uS/cm</span>
<span class="t r " style="left:3228px;top:116px;width:120px;">11.900 uS/cm</span>
<span class="t r " style="left:3308px;top:116px;width:120px;">12.200 uS/cm</span>
<div style="left:2620px;top:133px;width:814px;height:16px;background:#f0f0f0"></div>
<div style="left:2620px;top:149px;width:814px;height:1px;background:#f0f0f0"></div>
<div style="left:2604px;top:149px;width:16px;height:1px;background:#e9e9e9"></div>
<div style="left:2604px;top:150px;width:16px;height:16px;background:#f7f7f7"></div>
<div style="left:2620px;top:150px;width:814px;height:16px;background:#dadada"></div>
<div style="left:2620px;top:166px;width:814px;height:1px;background:#f0f0f0"></div>
<div style="left:2604px;top:166px;width:16px;height:1px;background:#e9e9e9"></div>
<svg class="ic" style="left:2586px;top:150px" width="14" height="16" viewBox="0 0 14 16"><path d="M1 5L7 11L13 5" fill="none" stroke="#303030" stroke-width="1"/></svg>
<svg class="ic" style="left:2604px;top:150px" width="16" height="16" viewBox="0 0 16 16"><g fill="#a9a9a9"><rect x="2" y="3" width="2" height="1"/><rect x="2" y="6" width="2" height="1"/><rect x="2" y="9" width="2" height="1"/><rect x="2" y="12" width="2" height="1"/><rect x="12" y="3" width="2" height="1"/><rect x="12" y="6" width="2" height="1"/><rect x="12" y="9" width="2" height="1"/><rect x="12" y="12" width="2" height="1"/></g><rect x="4" y="1" width="8" height="14" rx="0.8" fill="#444"/><rect x="6.5" y="1" width="3" height="14" fill="#626262"/></svg>
<span class="t b" style="left:2622px;top:151px;">Aquacomputer Octo</span>
<div style="left:2620px;top:167px;width:814px;height:16px;background:#f0f0f0"></div>
<div style="left:2620px;top:183px;width:814px;height:1px;background:#f0f0f0"></div>
<div style="left:2604px;top:183px;width:16px;height:1px;background:#e9e9e9"></div>
<svg class="ic" style="left:2604px;top:167px" width="16" height="16" viewBox="0 0 16 16"><rect x="7.2" y="1" width="1.8" height="4" fill="#d8d8d8"/><rect x="7.2" y="5" width="1.8" height="7" fill="#cf2a2a"/><circle cx="8.1" cy="12.7" r="2" fill="#d40f0f"/></svg>
<span class="t " style="left:2622px;top:167px;">Soft. Temperatura 1</span>
<span class="t r " style="left:3148px;top:167px;width:120px;">27.3 °C</span>
<span class="t r " style="left:3228px;top:167px;width:120px;">26.0 °C</span>
<span class="t r " style="left:3308px;top:167px;width:120px;">27.6 °C</span>
<div style="left:2620px;top:200px;width:814px;height:1px;background:#f0f0f0"></div>
<div style="left:2604px;top:200px;width:16px;height:1px;background:#e9e9e9"></div>
<svg class="ic" style="left:2604px;top:184px" width="16" height="16" viewBox="0 0 16 16"><rect x="7.2" y="1" width="1.8" height="4" fill="#d8d8d8"/><rect x="7.2" y="5" width="1.8" height="7" fill="#cf2a2a"/><circle cx="8.1" cy="12.7" r="2" fill="#d40f0f"/></svg>
<div style="left:3194px;top:184px;width:80px;height:16px;background:#d1e5fb"></div>
<span class="t " style="left:2622px;top:184px;">Soft. Temperatura 2</span>
<span class="t r " style="left:3148px;top:184px;width:120px;">58.1 °C</span>
<span class="t r " style="left:3228px;top:184px;width:120px;">28.1 °C</span>
<span class="t r " style="left:3308px;top:184px;width:120px;">73.9 °C</span>
<div style="left:2620px;top:201px;width:814px;height:16px;background:#f0f0f0"></div>
<div style="left:2620px;top:217px;width:814px;height:1px;background:#f0f0f0"></div>
<div style="left:2604px;top:217px;width:16px;height:1px;background:#e9e9e9"></div>
<svg class="ic" style="left:2604px;top:201px" width="16" height="16" viewBox="0 0 16 16"><rect x="7.2" y="1" width="1.8" height="4" fill="#d8d8d8"/><rect x="7.2" y="5" width="1.8" height="7" fill="#cf2a2a"/><circle cx="8.1" cy="12.7" r="2" fill="#d40f0f"/></svg>
<span class="t " style="left:2622px;top:201px;">Soft. Temperatura 9</span>
<span class="t r " style="left:3148px;top:201px;width:120px;">27.3 °C</span>
<span class="t r " style="left:3228px;top:201px;width:120px;">26.0 °C</span>
<span class="t r " style="left:3308px;top:201px;width:120px;">27.6 °C</span>
<div style="left:2620px;top:234px;width:814px;height:1px;background:#f0f0f0"></div>
<div style="left:2604px;top:234px;width:16px;height:1px;background:#e9e9e9"></div>
<svg class="ic" style="left:2604px;top:218px" width="16" height="16" viewBox="0 0 16 16"><path d="M8.4 0.8H12.2L9.4 6.2L12.2 6.4L4.2 15.6L7 9.2L4.4 9Z" fill="#e9b30c"/></svg>
<span class="t " style="left:2622px;top:218px;">Wentylator Napięcie 1</span>
<span class="t r " style="left:3148px;top:218px;width:120px;">12.120 V</span>
<span class="t r " style="left:3228px;top:218px;width:120px;">12.110 V</span>
<span class="t r " style="left:3308px;top:218px;width:120px;">12.130 V</span>
<div style="left:2620px;top:235px;width:814px;height:16px;background:#f0f0f0"></div>
<div style="left:2620px;top:251px;width:814px;height:1px;background:#f0f0f0"></div>
<div style="left:2604px;top:251px;width:16px;height:1px;background:#e9e9e9"></div>
<svg class="ic" style="left:2604px;top:235px" width="16" height="16" viewBox="0 0 16 16"><path d="M8.4 0.8H12.2L9.4 6.2L12.2 6.4L4.2 15.6L7 9.2L4.4 9Z" fill="#e9b30c"/></svg>
<span class="t " style="left:2622px;top:235px;">Wentylator Napięcie 2</span>
<span class="t r " style="left:3148px;top:235px;width:120px;">12.120 V</span>
<span class="t r " style="left:3228px;top:235px;width:120px;">12.110 V</span>
<span class="t r " style="left:3308px;top:235px;width:120px;">12.130 V</span>
<div style="left:2620px;top:268px;width:814px;height:1px;background:#f0f0f0"></div>
<div style="left:2604px;top:268px;width:16px;height:1px;background:#e9e9e9"></div>
<svg class="ic" style="left:2604px;top:252px" width="16" height="16" viewBox="0 0 16 16"><path d="M8.4 0.8H12.2L9.4 6.2L12.2 6.4L4.2 15.6L7 9.2L4.4 9Z" fill="#e9b30c"/></svg>
<span class="t " style="left:2622px;top:252px;">Wentylator Napięcie 3</span>
<span class="t r " style="left:3148px;top:252px;width:120px;">12.120 V</span>
<span class="t r " style="left:3228px;top:252px;width:120px;">12.110 V</span>
<span class="t r " style="left:3308px;top:252px;width:120px;">12.130 V</span>
<div style="left:2620px;top:269px;width:814px;height:16px;background:#f0f0f0"></div>
<div style="left:2620px;top:285px;width:814px;height:1px;background:#f0f0f0"></div>
<div style="left:2604px;top:285px;width:16px;height:1px;background:#e9e9e9"></div>
<svg class="ic" style="left:2604px;top:269px" width="16" height="16" viewBox="0 0 16 16"><g fill="#1f1f1f"><ellipse cx="8" cy="3.6" rx="3" ry="2.4"/><ellipse cx="8" cy="12.4" rx="3" ry="2.4"/><ellipse cx="3.6" cy="8" rx="2.4" ry="3"/><ellipse cx="12.4" cy="8" rx="2.4" ry="3"/><circle cx="8" cy="8" r="1.6"/></g></svg>
<span class="t " style="left:2622px;top:269px;">560/60 Rad Push/Pull</span>
<span class="t r " style="left:3148px;top:269px;width:120px;">649 RPM</span>
<span class="t r " style="left:3228px;top:269px;width:120px;">647 RPM</span>
<span class="t r " style="left:3308px;top:269px;width:120px;">649 RPM</span>
<div style="left:2620px;top:302px;width:814px;height:1px;background:#f0f0f0"></div>
<div style="left:2604px;top:302px;width:16px;height:1px;background:#e9e9e9"></div>
<svg class="ic" style="left:2604px;top:286px" width="16" height="16" viewBox="0 0 16 16"><g fill="#1f1f1f"><ellipse cx="8" cy="3.6" rx="3" ry="2.4"/><ellipse cx="8" cy="12.4" rx="3" ry="2.4"/><ellipse cx="3.6" cy="8" rx="2.4" ry="3"/><ellipse cx="12.4" cy="8" rx="2.4" ry="3"/><circle cx="8" cy="8" r="1.6"/></g></svg>
<span class="t " style="left:2622px;top:286px;">560/60 Rad Push/Pull</span>
<span class="t r " style="left:3148px;top:286px;width:120px;">675 RPM</span>
<span class="t r " style="left:3228px;top:286px;width:120px;">673 RPM</span>
<span class="t r " style="left:3308px;top:286px;width:120px;">675 RPM</span>
<div style="left:2620px;top:303px;width:814px;height:16px;background:#f0f0f0"></div>
<div style="left:2620px;top:319px;width:814px;height:1px;background:#f0f0f0"></div>
<div style="left:2604px;top:319px;width:16px;height:1px;background:#e9e9e9"></div>
<svg class="ic" style="left:2604px;top:303px" width="16" height="16" viewBox="0 0 16 16"><g fill="#1f1f1f"><ellipse cx="8" cy="3.6" rx="3" ry="2.4"/><ellipse cx="8" cy="12.4" rx="3" ry="2.4"/><ellipse cx="3.6" cy="8" rx="2.4" ry="3"/><ellipse cx="12.4" cy="8" rx="2.4" ry="3"/><circle cx="8" cy="8" r="1.6"/></g></svg>
<span class="t " style="left:2622px;top:303px;">D5 Pump</span>
<span class="t r " style="left:3148px;top:303px;width:120px;">4,816 RPM</span>
<span class="t r " style="left:3228px;top:303px;width:120px;">4,814 RPM</span>
<span class="t r " style="left:3308px;top:303px;width:120px;">4,816 RPM</span>
<div style="left:2620px;top:336px;width:814px;height:1px;background:#f0f0f0"></div>
<div style="left:2604px;top:336px;width:16px;height:1px;background:#e9e9e9"></div>
<svg class="ic" style="left:2604px;top:320px" width="16" height="16" viewBox="0 0 16 16"><path d="M8.4 0.8H12.2L9.4 6.2L12.2 6.4L4.2 15.6L7 9.2L4.4 9Z" fill="#e9b30c"/></svg>
<span class="t " style="left:2622px;top:320px;">Wentylator Pobór mocy 1</span>
<span class="t r " style="left:3148px;top:320px;width:120px;">0.840 W</span>
<span class="t r " style="left:3228px;top:320px;width:120px;">0.830 W</span>
<span class="t r " style="left:3308px;top:320px;width:120px;">0.870 W</span>
<div style="left:2620px;top:337px;width:814px;height:16px;background:#f0f0f0"></div>
<div style="left:2620px;top:353px;width:814px;height:1px;background:#f0f0f0"></div>
<div style="left:2604px;top:353px;width:16px;height:1px;background:#e9e9e9"></div>
<svg class="ic" style="left:2604px;top:337px" width="16" height="16" viewBox="0 0 16 16"><path d="M8.4 0.8H12.2L9.4 6.2L12.2 6.4L4.2 15.6L7 9.2L4.4 9Z" fill="#e9b30c"/></svg>
<div style="left:3194px;top:337px;width:80px;height:16px;background:#d1e5fb"></div>
<span class="t " style="left:2622px;top:337px;">Wentylator Pobór mocy 2</span>
<span class="t r " style="left:3148px;top:337px;width:120px;">0.930 W</span>
<span class="t r " style="left:3228px;top:337px;width:120px;">0.870 W</span>
<span class="t r " style="left:3308px;top:337px;width:120px;">0.930 W</span>
<div style="left:2620px;top:370px;width:814px;height:1px;background:#f0f0f0"></div>
<div style="left:2604px;top:370px;width:16px;height:1px;background:#e9e9e9"></div>
<svg class="ic" style="left:2604px;top:354px" width="16" height="16" viewBox="0 0 16 16"><path d="M13.2 9.8A5.3 5.3 0 1 1 11.6 4.0" fill="none" stroke="#4d5257" stroke-width="1.4"/><circle cx="12.3" cy="4.6" r="1.3" fill="#1e1e1e"/><path d="M8 5.2V8.6L10 10.4" fill="none" stroke="#3d4247" stroke-width="1.3"/></svg>
<span class="t " style="left:2622px;top:354px;">Przepływ</span>
<span class="t r " style="left:3148px;top:354px;width:120px;">0.000 l/h</span>
<span class="t r " style="left:3228px;top:354px;width:120px;">0.000 l/h</span>
<span class="t r " style="left:3308px;top:354px;width:120px;">0.000 l/h</span>
<div style="left:2620px;top:371px;width:814px;height:16px;background:#f0f0f0"></div>
<div style="left:2620px;top:387px;width:814px;height:1px;background:#f0f0f0"></div>
<div style="left:2604px;top:387px;width:16px;height:1px;background:#e9e9e9"></div>
<div style="left:2604px;top:388px;width:16px;height:16px;background:#f7f7f7"></div>
<div style="left:2620px;top:388px;width:814px;height:16px;background:#dadada"></div>
<div style="left:2620px;top:404px;width:814px;height:1px;background:#f0f0f0"></div>
<div style="left:2604px;top:404px;width:16px;height:1px;background:#e9e9e9"></div>
<svg class="ic" style="left:2588px;top:388px" width="12" height="16" viewBox="0 0 12 16"><path d="M3 2.5L8.5 8L3 13.5" fill="none" stroke="#2a2a2a" stroke-width="1"/></svg>
<svg class="ic" style="left:2604px;top:388px" width="16" height="16" viewBox="0 0 16 16"><g fill="#a9a9a9"><rect x="2" y="3" width="2" height="1"/><rect x="2" y="6" width="2" height="1"/><rect x="2" y="9" width="2" height="1"/><rect x="2" y="12" width="2" height="1"/><rect x="12" y="3" width="2" height="1"/><rect x="12" y="6" width="2" height="1"/><rect x="12" y="9" width="2" height="1"/><rect x="12" y="12" width="2" height="1"/></g><rect x="4" y="1" width="8" height="14" rx="0.8" fill="#444"/><rect x="6.5" y="1" width="3" height="14" fill="#626262"/></svg>
<span class="t b" style="left:2622px;top:389px;">PresentMon [dwm.exe]</span>
<div style="left:2620px;top:421px;width:814px;height:1px;background:#f0f0f0"></div>
<div style="left:2604px;top:421px;width:16px;height:1px;background:#e9e9e9"></div>
<div style="left:2604px;top:422px;width:16px;height:16px;background:#f7f7f7"></div>
<div style="left:2620px;top:422px;width:814px;height:16px;background:#dadada"></div>
<div style="left:2620px;top:438px;width:814px;height:1px;background:#f0f0f0"></div>
<div style="left:2604px;top:438px;width:16px;height:1px;background:#e9e9e9"></div>
<svg class="ic" style="left:2588px;top:422px" width="12" height="16" viewBox="0 0 12 16"><path d="M3 2.5L8.5 8L3 13.5" fill="none" stroke="#2a2a2a" stroke-width="1"/></svg>
<svg class="ic" style="left:2604px;top:422px" width="16" height="16" viewBox="0 0 16 16"><g fill="#a9a9a9"><rect x="2" y="3" width="2" height="1"/><rect x="2" y="6" width="2" height="1"/><rect x="2" y="9" width="2" height="1"/><rect x="2" y="12" width="2" height="1"/><rect x="12" y="3" width="2" height="1"/><rect x="12" y="6" width="2" height="1"/><rect x="12" y="9" width="2" height="1"/><rect x="12" y="12" width="2" height="1"/></g><rect x="4" y="1" width="8" height="14" rx="0.8" fill="#444"/><rect x="6.5" y="1" width="3" height="14" fill="#626262"/></svg>
<span class="t b" style="left:2622px;top:423px;">Sieć: Intel Ethernet Controller I225-V</span>
<div style="left:2620px;top:455px;width:814px;height:1px;background:#f0f0f0"></div>
<div style="left:2604px;top:455px;width:16px;height:1px;background:#e9e9e9"></div>
<div style="left:2604px;top:456px;width:16px;height:16px;background:#f7f7f7"></div>
<div style="left:2620px;top:456px;width:814px;height:16px;background:#dadada"></div>
<div style="left:2620px;top:472px;width:814px;height:1px;background:#f0f0f0"></div>
<div style="left:2604px;top:472px;width:16px;height:1px;background:#e9e9e9"></div>
<svg class="ic" style="left:2588px;top:456px" width="12" height="16" viewBox="0 0 12 16"><path d="M3 2.5L8.5 8L3 13.5" fill="none" stroke="#2a2a2a" stroke-width="1"/></svg>
<svg class="ic" style="left:2604px;top:456px" width="16" height="16" viewBox="0 0 16 16"><g fill="#a9a9a9"><rect x="2" y="3" width="2" height="1"/><rect x="2" y="6" width="2" height="1"/><rect x="2" y="9" width="2" height="1"/><rect x="2" y="12" width="2" height="1"/><rect x="12" y="3" width="2" height="1"/><rect x="12" y="6" width="2" height="1"/><rect x="12" y="9" width="2" height="1"/><rect x="12" y="12" width="2" height="1"/></g><rect x="4" y="1" width="8" height="14" rx="0.8" fill="#444"/><rect x="6.5" y="1" width="3" height="14" fill="#626262"/></svg>
<span class="t b" style="left:2622px;top:457px;">Sieć: MediaTek Wi-Fi 6E MT7922 (RZ616) 160MHz Wireless LAN Card - Wi-Fi 2</span>
<div style="left:2620px;top:489px;width:814px;height:1px;background:#f0f0f0"></div>
<div style="left:2604px;top:489px;width:16px;height:1px;background:#e9e9e9"></div>
<div style="left:2604px;top:490px;width:16px;height:16px;background:#f7f7f7"></div>
<div style="left:2620px;top:490px;width:814px;height:16px;background:#dadada"></div>
<div style="left:2620px;top:506px;width:814px;height:1px;background:#f0f0f0"></div>
<div style="left:2604px;top:506px;width:16px;height:1px;background:#e9e9e9"></div>
<svg class="ic" style="left:2586px;top:490px" width="14" height="16" viewBox="0 0 14 16"><path d="M1 5L7 11L13 5" fill="none" stroke="#303030" stroke-width="1"/></svg>
<svg class="ic" style="left:2604px;top:490px" width="16" height="16" viewBox="0 0 16 16"><g fill="#a9a9a9"><rect x="2" y="3" width="2" height="1"/><rect x="2" y="6" width="2" height="1"/><rect x="2" y="9" width="2" height="1"/><rect x="2" y="12" width="2" height="1"/><rect x="12" y="3" width="2" height="1"/><rect x="12" y="6" width="2" height="1"/><rect x="12" y="9" width="2" height="1"/><rect x="12" y="12" width="2" height="1"/></g><rect x="4" y="1" width="8" height="14" rx="0.8" fill="#444"/><rect x="6.5" y="1" width="3" height="14" fill="#626262"/></svg>
<span class="t b" style="left:2622px;top:491px;">Windows Hardware Errors (WHEA)</span>
<div style="left:2620px;top:523px;width:814px;height:1px;background:#f0f0f0"></div>
<div style="left:2604px;top:523px;width:16px;height:1px;background:#e9e9e9"></div>
<svg class="ic" style="left:2604px;top:507px" width="16" height="16" viewBox="0 0 16 16"><path d="M13.2 9.8A5.3 5.3 0 1 1 11.6 4.0" fill="none" stroke="#4d5257" stroke-width="1.4"/><circle cx="12.3" cy="4.6" r="1.3" fill="#1e1e1e"/><path d="M8 5.2V8.6L10 10.4" fill="none" stroke="#3d4247" stroke-width="1.3"/></svg>
<span class="t " style="left:2622px;top:507px;">Całkowita liczba błędów</span>
<span class="t r " style="left:3148px;top:507px;width:120px;">0 </span>
<span class="t r " style="left:3228px;top:507px;width:120px;">0 </span>
<span class="t r " style="left:3308px;top:507px;width:120px;">0 </span>
<div style="left:2604px;top:523px;width:830px;height:1px;background:#ebebeb"></div>
</div>
<div style="left:0px;top:0px;width:860px;height:1px;background:#606060"></div>
<div style="left:0px;top:1361px;width:860px;height:1px;background:#606060"></div>
<div style="left:0px;top:0px;width:1px;height:1362px;background:#606060"></div>
<div style="left:859px;top:0px;width:1px;height:1362px;background:#606060"></div>
</div>
<svg style="left:2px;top:3px" width="16" height="16" viewBox="0 0 16 16"><rect x="0" y="0" width="16" height="16" rx="2.5" fill="#1e1e1e"/><path d="M2.5 0H13.5A2.5 2.5 0 0 1 16 2.5V9H0V2.5A2.5 2.5 0 0 1 2.5 0Z" fill="#2a8ab8"/><rect x="3.2" y="1.3" width="1.6" height="7.2" fill="#fff"/><rect x="6.8" y="3" width="1.6" height="5.5" fill="#fff"/><rect x="10.3" y="6" width="1.6" height="2.5" fill="#fff"/><rect x="3.2" y="10.3" width="1.6" height="4.5" rx="0.8" fill="#fff"/><rect x="6.8" y="10.3" width="1.6" height="4.5" rx="0.8" fill="#fff"/><rect x="10.3" y="10.3" width="1.6" height="4.5" rx="0.8" fill="#fff"/></svg>
<span class="u" style="left:23px;top:4px;font-size:12px;line-height:16px;color:#8a8a8a">HWiNFO® 64 v8.22-5670 - Stan czujników</span>
<div style="left:3319px;top:10px;width:10px;height:1px;background:#6a6a6a"></div>
<svg style="left:3362px;top:4px" width="14" height="13"><rect x="1.5" y="3.5" width="8" height="8" rx="1.5" fill="none" stroke="#6a6a6a"/><path d="M3.5 1.5H10A2 2 0 0 1 12 3.5V10" fill="none" stroke="#6a6a6a"/></svg>
<svg style="left:3409px;top:4px" width="12" height="12"><path d="M1 1L11 11M11 1L1 11" stroke="#6a6a6a" stroke-width="1"/></svg>
<div style="left:2px;top:1392px;width:41px;height:35px;background:#fbfbfb;border:1px solid #cdcdcd;border-radius:4px"></div>
<div style="left:45px;top:1392px;width:41px;height:35px;background:#fbfbfb;border:1px solid #cdcdcd;border-radius:4px"></div>
<svg style="left:7px;top:1400px" width="32" height="18" viewBox="0 0 32 18"><path d="M0.5 9L7 2.5V6H14V12H7V15.5Z" fill="#3a93de" stroke="#9aa" stroke-width="0.5" stroke-dasharray="1 1"/><path d="M31.5 9L25 2.5V6H18V12H25V15.5Z" fill="#3a93de" stroke="#9aa" stroke-width="0.5" stroke-dasharray="1 1"/></svg>
<svg style="left:50px;top:1400px" width="32" height="18" viewBox="0 0 32 18"><path d="M15.5 9L9 2.5V6H1V12H9V15.5Z" fill="#3a93de" stroke="#9aa" stroke-width="0.5" stroke-dasharray="1 1"/><path d="M16.5 9L23 2.5V6H31V12H23V15.5Z" fill="#3a93de" stroke="#9aa" stroke-width="0.5" stroke-dasharray="1 1"/></svg>
<div style="left:3120px;top:1392px;width:41px;height:35px;background:#fbfbfb;border:1px solid #cdcdcd;border-radius:4px"></div>
<div style="left:3248px;top:1392px;width:41px;height:35px;background:#fbfbfb;border:1px solid #cdcdcd;border-radius:4px"></div>
<div style="left:3294px;top:1392px;width:41px;height:35px;background:#fbfbfb;border:1px solid #cdcdcd;border-radius:4px"></div>
<div style="left:3340px;top:1392px;width:41px;height:35px;background:#fbfbfb;border:1px solid #cdcdcd;border-radius:4px"></div>
<div style="left:3386px;top:1392px;width:41px;height:35px;background:#fbfbfb;border:1px solid #cdcdcd;border-radius:4px"></div>
<svg style="left:3124px;top:1394px" width="34" height="32" viewBox="0 0 34 32"><path d="M11 9H23V20" fill="none" stroke="#888" stroke-width="1"/><g><path d="M2 3L14 5V14L4 13Z" fill="#1f78d8" stroke="#555" stroke-width="0.6"/><ellipse cx="9" cy="16" rx="4" ry="1.5" fill="#aaa"/></g><g transform="translate(14,12)"><path d="M2 3L14 5V14L4 13Z" fill="#1f78d8" stroke="#555" stroke-width="0.6"/><ellipse cx="9" cy="16" rx="4" ry="1.5" fill="#aaa"/></g></svg>
<span class="u" style="left:3208px;top:1402px;font-size:12px;line-height:16px;letter-spacing:-0.3px">1:05:20</span>
<svg style="left:3252px;top:1394px" width="33" height="32" viewBox="0 0 33 32"><circle cx="16.5" cy="16" r="15" fill="#fff" stroke="#222" stroke-width="1"/><path d="M16.5 16V4.5M16.5 16H25" stroke="#111" stroke-width="1.6"/><line x1="16.50" y1="4.00" x2="16.50" y2="1.50" stroke="#222" stroke-width="1"/><line x1="22.50" y1="5.61" x2="23.75" y2="3.44" stroke="#222" stroke-width="1"/><line x1="26.89" y1="10.00" x2="29.06" y2="8.75" stroke="#222" stroke-width="1"/><line x1="28.50" y1="16.00" x2="31.00" y2="16.00" stroke="#222" stroke-width="1"/><line x1="26.89" y1="22.00" x2="29.06" y2="23.25" stroke="#222" stroke-width="1"/><line x1="22.50" y1="26.39" x2="23.75" y2="28.56" stroke="#222" stroke-width="1"/><line x1="16.50" y1="28.00" x2="16.50" y2="30.50" stroke="#222" stroke-width="1"/><line x1="10.50" y1="26.39" x2="9.25" y2="28.56" stroke="#222" stroke-width="1"/><line x1="6.11" y1="22.00" x2="3.94" y2="23.25" stroke="#222" stroke-width="1"/><line x1="4.50" y1="16.00" x2="2.00" y2="16.00" stroke="#222" stroke-width="1"/><line x1="6.11" y1="10.00" x2="3.94" y2="8.75" stroke="#222" stroke-width="1"/><line x1="10.50" y1="5.61" x2="9.25" y2="3.44" stroke="#222" stroke-width="1"/></svg>
<svg style="left:3300px;top:1394px" width="30" height="32" viewBox="0 0 30 32"><path d="M4 2H18L23 7V28H4Z" fill="#f4f4f4" stroke="#aaa"/><g stroke="#ccc" stroke-width="0.8"><line x1="6" y1="8.0" x2="20" y2="8.0"/><line x1="6" y1="10.5" x2="20" y2="10.5"/><line x1="6" y1="13.0" x2="20" y2="13.0"/><line x1="6" y1="15.5" x2="20" y2="15.5"/><line x1="6" y1="18.0" x2="20" y2="18.0"/><line x1="6" y1="20.5" x2="20" y2="20.5"/><line x1="6" y1="23.0" x2="20" y2="23.0"/><line x1="6" y1="25.5" x2="20" y2="25.5"/></g><path d="M18 18H22V22H26V26H22V30H18V26H14V22H18Z" fill="#8cc63f" stroke="#6a9a2a" stroke-width="0.6"/></svg>
<svg style="left:3344px;top:1394px" width="33" height="32" viewBox="0 0 33 32"><g transform="translate(16.5,16)"><path d="M13.00 0.00 L12.94 1.27 L12.75 2.54 L12.44 3.77 L12.01 4.97 L11.46 6.13 L10.81 7.22 L10.05 8.25 L9.19 9.19 L8.25 10.05 L7.22 10.81 L6.13 11.46 L4.97 12.01 L3.77 12.44 L2.54 12.75 L1.27 12.94 L0.00 13.00 L-1.27 12.94 L-2.54 12.75 L-3.77 12.44 L-4.97 12.01 L-6.13 11.46 L-7.22 10.81 L-8.25 10.05 L-9.19 9.19 L-10.05 8.25 L-10.81 7.22 L-11.46 6.13 L-12.01 4.97 L-12.44 3.77 L-12.75 2.54 L-12.94 1.27 L-13.00 0.00 L-12.94 -1.27 L-12.75 -2.54 L-12.44 -3.77 L-12.01 -4.97 L-11.46 -6.13 L-10.81 -7.22 L-10.05 -8.25 L-9.19 -9.19 L-8.25 -10.05 L-7.22 -10.81 L-6.13 -11.46 L-4.97 -12.01 L-3.77 -12.44 L-2.54 -12.75 L-1.27 -12.94 L-0.00 -13.00 L1.27 -12.94 L2.54 -12.75 L3.77 -12.44 L4.97 -12.01 L6.13 -11.46 L7.22 -10.81 L8.25 -10.05 L9.19 -9.19 L10.05 -8.25 L10.81 -7.22 L11.46 -6.13 L12.01 -4.97 L12.44 -3.77 L12.75 -2.54 L12.94 -1.27Z" fill="none"/><rect x="-3" y="-14.5" width="6" height="6" fill="#b5b5b5" transform="rotate(0)"/><rect x="-3" y="-14.5" width="6" height="6" fill="#b5b5b5" transform="rotate(45)"/><rect x="-3" y="-14.5" width="6" height="6" fill="#b5b5b5" transform="rotate(90)"/><rect x="-3" y="-14.5" width="6" height="6" fill="#b5b5b5" transform="rotate(135)"/><rect x="-3" y="-14.5" width="6" height="6" fill="#b5b5b5" transform="rotate(180)"/><rect x="-3" y="-14.5" width="6" height="6" fill="#b5b5b5" transform="rotate(225)"/><rect x="-3" y="-14.5" width="6" height="6" fill="#b5b5b5" transform="rotate(270)"/><rect x="-3" y="-14.5" width="6" height="6" fill="#b5b5b5" transform="rotate(315)"/><circle r="11" fill="#c4c4c4"/><circle r="6.5" fill="#fbfbfb" stroke="#9a9a9a" stroke-width="1.5"/></g></svg>
<svg style="left:3392px;top:1397px" width="30" height="26" viewBox="0 0 30 26"><path d="M3 3L27 23M27 3L3 23" stroke="#2e8fd0" stroke-width="6.5"/></svg>
<div style="left:1470px;top:283px;width:919px;height:662px;background:#fff;border:1px solid #b9b9b9;border-radius:8px 8px 6px 6px;box-shadow:0 10px 40px rgba(0,0,0,0.38);overflow:hidden">
<div style="left:-1471px;top:-284px;width:3440px;height:1440px">
<div style="left:1470px;top:283px;width:919px;height:30px;background:#f3f3f3"></div>
<div style="left:1470px;top:313px;width:919px;height:48px;background:#f0f0f0"></div>
<div style="left:1470px;top:361px;width:919px;height:1px;background:#a9a9a9"></div>
<div style="left:2270px;top:297px;width:10px;height:1px;background:#8a8a8a"></div>
<svg style="left:2314px;top:291px" width="12" height="12"><rect x="1.5" y="1.5" width="9" height="9" fill="none" stroke="#8a8a8a"/></svg>
<svg style="left:2360px;top:291px" width="12" height="12"><path d="M1 1L11 11M11 1L1 11" stroke="#8a8a8a" stroke-width="1"/></svg>
<div style="left:2196px;top:325px;width:148px;height:22px;background:#fff;border-bottom:1px solid #888;border-radius:3px"></div>
<span class="u" style="left:2199px;top:328px;font-size:12px;line-height:16px;color:#666">Szukaj</span>
<div style="left:2363px;top:329px;width:3px;height:3px;background:#333;border-radius:2px"></div>
<div style="left:2363px;top:336px;width:3px;height:3px;background:#333;border-radius:2px"></div>
<div style="left:2363px;top:343px;width:3px;height:3px;background:#333;border-radius:2px"></div>
<div style="left:1661px;top:362px;width:4px;height:582px;background:#efefef"></div>
<div style="left:1665px;top:362px;width:1px;height:582px;background:#6e7580"></div>
<div style="left:1665px;top:943px;width:740px;height:1px;background:#6e7580"></div>
<svg style="left:2041px;top:366px" width="24" height="30" viewBox="0 0 24 30"><path d="M0 4L10 1L22 4L12 7Z" fill="#a9aeb5"/><path d="M12 7L22 4V26L12 29Z" fill="#8a9099"/><path d="M0 4L12 7V29L0 26Z" fill="#0d1118"/><g stroke="#2a8cff" stroke-width="1"><line x1="2" y1="10" x2="10" y2="12.5"/><line x1="2" y1="14" x2="10" y2="16.5"/><line x1="2" y1="18" x2="10" y2="20.5"/></g><g fill="#49c0ff"><circle cx="2.8" cy="11" r="0.9"/><circle cx="2.8" cy="15" r="0.9"/><circle cx="8" cy="26" r="0.9"/></g></svg>
<span class="u" style="left:2022.0px;top:400px;width:60px;text-align:center;font-size:12px;line-height:16px">IPMI</span>
<svg style="left:2149px;top:365px" width="26" height="32" viewBox="0 0 26 32"><defs><linearGradient id="fl1" x1="0" y1="0" x2="0" y2="1"><stop offset="0" stop-color="#f39a1c"/><stop offset="1" stop-color="#f05a0a"/></linearGradient></defs><path d="M12 31C6 31 1 27 2 21L0 16.5L5 18.5C4 13 6 8 5 0.5C10 6 13 11 13.5 16C15 13 16 10 16 6C19.5 10 21.5 15 20.5 19.5L25.5 12C26.5 20 24.5 27 18 30C16 31 14 31 12 31Z" fill="url(#fl1)"/><path d="M12 31C8 31 5.5 28 6.5 24.5L4.5 21.5L8.5 22.5C8.5 19.5 10 17.5 11 14.5C13 17.5 14 20 14 23L17.5 19.5C18.5 24 17.5 28 15 30Z" fill="#ffd21a"/></svg>
<span class="u" style="left:2102.0px;top:400px;width:120px;text-align:center;font-size:12px;line-height:16px">Przetaktowanie</span>
<svg style="left:2261px;top:366px" width="26" height="30" viewBox="0 0 26 30"><defs><linearGradient id="bg1" x1="0" x2="1"><stop offset="0" stop-color="#2e9e2e"/><stop offset="0.35" stop-color="#7ee07e"/><stop offset="1" stop-color="#24a024"/></linearGradient></defs><path d="M3 3.5A7 2.5 0 0 1 17 3.5V22A7 2.5 0 0 1 3 22Z" fill="url(#bg1)"/><ellipse cx="10" cy="3.5" rx="7" ry="2.3" fill="#b8f0b8"/><ellipse cx="10" cy="3.2" rx="3" ry="1" fill="#e8ffe8"/><path d="M16 17C22 14 26 17 23 21C21 23 18 23 15 24" fill="none" stroke="#2a2a2a" stroke-width="2.2"/><path d="M5 24L15 22L17 27L7 29.5Z" fill="#3a3a3a"/><path d="M3 26L6 25.2M4 28.5L7 27.7" stroke="#777" stroke-width="1.2"/></svg>
<span class="u" style="left:2207.0px;top:400px;width:130px;text-align:center;font-size:12px;line-height:16px">Opcje zasilania</span>
</div></div>
<div style="left:1030px;top:157px;width:960px;height:593px;background:#f0f0f0;border:1px solid #b0b0b0;border-radius:8px;box-shadow:0 16px 42px rgba(0,0,0,0.34);overflow:hidden">
<div style="left:-1031px;top:-158px;width:3440px;height:1440px">
<div style="left:1031px;top:158px;width:959px;height:30px;background:#eef3f9"></div>
<svg style="left:1040px;top:163px" width="16" height="18" viewBox="0 0 26 32"><defs><linearGradient id="fl1" x1="0" y1="0" x2="0" y2="1"><stop offset="0" stop-color="#f39a1c"/><stop offset="1" stop-color="#f05a0a"/></linearGradient></defs><path d="M12 31C6 31 1 27 2 21L0 16.5L5 18.5C4 13 6 8 5 0.5C10 6 13 11 13.5 16C15 13 16 10 16 6C19.5 10 21.5 15 20.5 19.5L25.5 12C26.5 20 24.5 27 18 30C16 31 14 31 12 31Z" fill="url(#fl1)"/><path d="M12 31C8 31 5.5 28 6.5 24.5L4.5 21.5L8.5 22.5C8.5 19.5 10 17.5 11 14.5C13 17.5 14 20 14 23L17.5 19.5C18.5 24 17.5 28 15 30Z" fill="#ffd21a"/></svg>
<span class="u" style="left:1061px;top:165px;font-size:12px;line-height:16px;letter-spacing:-0.15px">System Stability Test - AIDA64</span>
<div style="left:1870px;top:172px;width:10px;height:1px;background:#111"></div>
<svg style="left:1914px;top:166px" width="12" height="12"><rect x="1.5" y="1.5" width="9" height="9" fill="none" stroke="#111"/></svg>
<svg style="left:1960px;top:166px" width="12" height="12"><path d="M1 1L11 11M11 1L1 11" stroke="#111" stroke-width="1"/></svg>
<svg style="left:1047px;top:204px" width="16" height="16" viewBox="0 0 16 16"><rect x="1" y="0.5" width="14" height="14" fill="#d89a3a"/><rect x="1.8" y="1.3" width="12.4" height="12.4" fill="#2f6b4a"/><rect x="4" y="3.5" width="8" height="8" fill="#e4e4e4"/><rect x="4" y="3.5" width="8" height="1.2" fill="#cfcfcf"/></svg>
<div style="left:1071px;top:206px;width:13px;height:13px;background:#0b5cc4;border-radius:3px"></div>
<svg style="left:1071px;top:206px" width="13" height="13"><path d="M3.8 6.6L5.6 8.4L9.4 4.6" fill="none" stroke="#fff" stroke-width="1"/></svg>
<span class="u" style="left:1087px;top:204px;font-size:12px;line-height:18px;letter-spacing:-0.2px">Stress CPU</span>
<svg style="left:1047px;top:224px" width="16" height="16" viewBox="0 0 16 16"><rect x="1" y="0.5" width="14" height="14" fill="#d89a3a"/><rect x="1.8" y="1.3" width="12.4" height="12.4" fill="#2f6b4a"/><rect x="3.5" y="3" width="9" height="9" fill="#e8e8e8"/><text x="8" y="11" font-size="9" text-anchor="middle" font-family="Liberation Sans" fill="#111">%</text></svg>
<div style="left:1071px;top:226px;width:13px;height:13px;background:#0b5cc4;border-radius:3px"></div>
<svg style="left:1071px;top:226px" width="13" height="13"><path d="M3.8 6.6L5.6 8.4L9.4 4.6" fill="none" stroke="#fff" stroke-width="1"/></svg>
<span class="u" style="left:1087px;top:224px;font-size:12px;line-height:18px;letter-spacing:-0.2px">Stress FPU</span>
<svg style="left:1047px;top:244px" width="16" height="16" viewBox="0 0 16 16"><rect x="2.5" y="0" width="11" height="15.5" rx="1" fill="#111"/><rect x="4" y="1.5" width="8" height="12.5" fill="#5a5a5a"/><rect x="6.5" y="0" width="3" height="2" fill="#eee"/><g fill="#ddd"><rect x="2.5" y="3" width="1" height="1"/><rect x="2.5" y="6" width="1" height="1"/><rect x="2.5" y="9" width="1" height="1"/><rect x="2.5" y="12" width="1" height="1"/><rect x="12.5" y="3" width="1" height="1"/><rect x="12.5" y="6" width="1" height="1"/><rect x="12.5" y="9" width="1" height="1"/><rect x="12.5" y="12" width="1" height="1"/></g></svg>
<div style="left:1071px;top:246px;width:13px;height:13px;background:#0b5cc4;border-radius:3px"></div>
<svg style="left:1071px;top:246px" width="13" height="13"><path d="M3.8 6.6L5.6 8.4L9.4 4.6" fill="none" stroke="#fff" stroke-width="1"/></svg>
<span class="u" style="left:1087px;top:244px;font-size:12px;line-height:18px;letter-spacing:-0.2px">Stress cache</span>
<svg style="left:1047px;top:264px" width="16" height="16" viewBox="0 0 16 16"><rect x="0" y="2" width="16" height="10" fill="#4f9a6e"/><g fill="#2a2a2a"><rect x="2" y="4" width="3" height="5"/><rect x="6.5" y="4" width="3" height="5"/><rect x="11" y="4" width="3" height="5"/></g><rect x="1" y="10" width="14" height="1.5" fill="#c88a3a"/></svg>
<div style="left:1071px;top:266px;width:13px;height:13px;background:#fff;border:1px solid #333;border-radius:3px"></div>
<span class="u" style="left:1087px;top:264px;font-size:12px;line-height:18px;letter-spacing:-0.2px">Stress system memory</span>
<svg style="left:1047px;top:284px" width="16" height="16" viewBox="0 0 16 16"><rect x="1" y="5" width="14" height="4" rx="1.5" fill="#c9c9c9"/><rect x="1" y="8" width="14" height="4.5" rx="1" fill="#2b2b2b"/><rect x="11" y="9.5" width="2" height="1.5" fill="#3f3"/></svg>
<div style="left:1071px;top:286px;width:13px;height:13px;background:#fff;border:1px solid #333;border-radius:3px"></div>
<span class="u" style="left:1087px;top:284px;font-size:12px;line-height:18px;letter-spacing:-0.2px">Stress local disks</span>
<svg style="left:1047px;top:304px" width="16" height="16" viewBox="0 0 16 16"><rect x="0" y="0.5" width="16" height="11" fill="#1f7fd0"/><rect x="1" y="1.5" width="14" height="9" fill="#5bb3f0"/><rect x="7" y="8" width="9" height="6" fill="#2e8b4a"/><rect x="9" y="9.5" width="5" height="2.5" fill="#1b5a2e"/><rect x="8.5" y="14" width="6" height="2" fill="#e0a000"/></svg>
<div style="left:1071px;top:306px;width:13px;height:13px;background:#fff;border:1px solid #333;border-radius:3px"></div>
<span class="u" style="left:1087px;top:304px;font-size:12px;line-height:18px;letter-spacing:-0.2px">Stress GPU(s)</span>
<div style="left:1229px;top:204px;width:443px;height:115px;background:#fff;border:1px solid #7f858c"></div>
<div style="left:1381px;top:206px;width:1px;height:24px;background:#e5e5e5"></div>
<div style="left:1650px;top:206px;width:1px;height:24px;background:#e5e5e5"></div>
<span class="u" style="left:1237px;top:211px;font-size:12px;line-height:16px">Date / Time</span>
<span class="u" style="left:1387px;top:211px;font-size:12px;line-height:16px">Status</span>
<div style="left:1235px;top:230px;width:415px;height:18px;background:#f0f0f0"></div>
<span class="u" style="left:1237px;top:233px;font-size:12px;line-height:16px;letter-spacing:-0.6px">10.01.2026 12:56:20</span>
<span class="u" style="left:1387px;top:233px;font-size:12px;line-height:16px;letter-spacing:-0.2px">Stability Test: Started</span>
<div style="left:1231px;top:248px;width:439px;height:1px;background:#efefef"></div>
<div style="left:1231px;top:267px;width:439px;height:1px;background:#efefef"></div>
<div style="left:1231px;top:286px;width:439px;height:1px;background:#efefef"></div>
<div style="left:1231px;top:305px;width:439px;height:1px;background:#efefef"></div>
<div style="left:1381px;top:248px;width:1px;height:69px;background:#efefef"></div>
<div style="left:1650px;top:248px;width:1px;height:69px;background:#efefef"></div>
<div style="left:1047px;top:353px;width:926px;height:307px;background:#f9f9f9;border:1px solid #dcdcdc"></div>
<div style="left:1048px;top:332px;width:86px;height:23px;background:#f9f9f9;border:1px solid #dcdcdc;border-bottom:none"></div>
<span class="u" style="left:1055px;top:335px;font-size:12px;line-height:14px;letter-spacing:-0.2px">Temperatures</span>
<div style="left:1134px;top:334px;width:80px;height:20px;background:#f0f0f0;border:1px solid #e0e0e0;border-bottom:none"></div>
<span class="u" style="left:1139px;top:338px;font-size:12px;line-height:14px;letter-spacing:-0.2px">Cooling Fans</span>
<div style="left:1213px;top:334px;width:57px;height:20px;background:#f0f0f0;border:1px solid #e0e0e0;border-bottom:none"></div>
<span class="u" style="left:1218px;top:338px;font-size:12px;line-height:14px;letter-spacing:-0.2px">Voltages</span>
<div style="left:1269px;top:334px;width:51px;height:20px;background:#f0f0f0;border:1px solid #e0e0e0;border-bottom:none"></div>
<span class="u" style="left:1274px;top:338px;font-size:12px;line-height:14px;letter-spacing:-0.2px">Powers</span>
<div style="left:1319px;top:334px;width:50px;height:20px;background:#f0f0f0;border:1px solid #e0e0e0;border-bottom:none"></div>
<span class="u" style="left:1324px;top:338px;font-size:12px;line-height:14px;letter-spacing:-0.2px">Clocks</span>
<div style="left:1368px;top:334px;width:50px;height:20px;background:#f0f0f0;border:1px solid #e0e0e0;border-bottom:none"></div>
<span class="u" style="left:1373px;top:338px;font-size:12px;line-height:14px;letter-spacing:-0.2px">Unified</span>
<div style="left:1417px;top:334px;width:57px;height:20px;background:#f0f0f0;border:1px solid #e0e0e0;border-bottom:none"></div>
<span class="u" style="left:1422px;top:338px;font-size:12px;line-height:14px;letter-spacing:-0.2px">Statistics</span>
<div style="left:1051px;top:357px;width:918px;height:150px;background:#000"></div>
<svg style="left:1101px;top:387px" width="819" height="92"><g stroke="#008a00" stroke-width="1" shape-rendering="crispEdges"><line x1="6.5" y1="0" x2="6.5" y2="91" /><line x1="16.5" y1="0" x2="16.5" y2="91" /><line x1="26.5" y1="0" x2="26.5" y2="91" /><line x1="36.5" y1="0" x2="36.5" y2="91" /><line x1="46.5" y1="0" x2="46.5" y2="91" /><line x1="56.5" y1="0" x2="56.5" y2="91" /><line x1="66.5" y1="0" x2="66.5" y2="91" /><line x1="76.5" y1="0" x2="76.5" y2="91" /><line x1="86.5" y1="0" x2="86.5" y2="91" /><line x1="96.5" y1="0" x2="96.5" y2="91" /><line x1="106.5" y1="0" x2="106.5" y2="91" /><line x1="116.5" y1="0" x2="116.5" y2="91" /><line x1="126.5" y1="0" x2="126.5" y2="91" /><line x1="136.5" y1="0" x2="136.5" y2="91" /><line x1="146.5" y1="0" x2="146.5" y2="91" /><line x1="156.5" y1="0" x2="156.5" y2="91" /><line x1="166.5" y1="0" x2="166.5" y2="91" /><line x1="176.5" y1="0" x2="176.5" y2="91" /><line x1="186.5" y1="0" x2="186.5" y2="91" /><line x1="196.5" y1="0" x2="196.5" y2="91" /><line x1="206.5" y1="0" x2="206.5" y2="91" /><line x1="216.5" y1="0" x2="216.5" y2="91" /><line x1="226.5" y1="0" x2="226.5" y2="91" /><line x1="236.5" y1="0" x2="236.5" y2="91" /><line x1="246.5" y1="0" x2="246.5" y2="91" /><line x1="256.5" y1="0" x2="256.5" y2="91" /><line x1="266.5" y1="0" x2="266.5" y2="91" /><line x1="276.5" y1="0" x2="276.5" y2="91" /><line x1="286.5" y1="0" x2="286.5" y2="91" /><line x1="296.5" y1="0" x2="296.5" y2="91" /><line x1="306.5" y1="0" x2="306.5" y2="91" /><line x1="316.5" y1="0" x2="316.5" y2="91" /><line x1="326.5" y1="0" x2="326.5" y2="91" /><line x1="336.5" y1="0" x2="336.5" y2="91" /><line x1="346.5" y1="0" x2="346.5" y2="91" /><line x1="356.5" y1="0" x2="356.5" y2="91" /><line x1="366.5" y1="0" x2="366.5" y2="91" /><line x1="376.5" y1="0" x2="376.5" y2="91" /><line x1="386.5" y1="0" x2="386.5" y2="91" /><line x1="396.5" y1="0" x2="396.5" y2="91" /><line x1="406.5" y1="0" x2="406.5" y2="91" /><line x1="416.5" y1="0" x2="416.5" y2="91" /><line x1="426.5" y1="0" x2="426.5" y2="91" /><line x1="436.5" y1="0" x2="436.5" y2="91" /><line x1="446.5" y1="0" x2="446.5" y2="91" /><line x1="456.5" y1="0" x2="456.5" y2="91" /><line x1="466.5" y1="0" x2="466.5" y2="91" /><line x1="476.5" y1="0" x2="476.5" y2="91" /><line x1="486.5" y1="0" x2="486.5" y2="91" /><line x1="496.5" y1="0" x2="496.5" y2="91" /><line x1="506.5" y1="0" x2="506.5" y2="91" /><line x1="516.5" y1="0" x2="516.5" y2="91" /><line x1="526.5" y1="0" x2="526.5" y2="91" /><line x1="536.5" y1="0" x2="536.5" y2="91" /><line x1="546.5" y1="0" x2="546.5" y2="91" /><line x1="556.5" y1="0" x2="556.5" y2="91" /><line x1="566.5" y1="0" x2="566.5" y2="91" /><line x1="576.5" y1="0" x2="576.5" y2="91" /><line x1="586.5" y1="0" x2="586.5" y2="91" /><line x1="596.5" y1="0" x2="596.5" y2="91" /><line x1="606.5" y1="0" x2="606.5" y2="91" /><line x1="616.5" y1="0" x2="616.5" y2="91" /><line x1="626.5" y1="0" x2="626.5" y2="91" /><line x1="636.5" y1="0" x2="636.5" y2="91" /><line x1="646.5" y1="0" x2="646.5" y2="91" /><line x1="656.5" y1="0" x2="656.5" y2="91" /><line x1="666.5" y1="0" x2="666.5" y2="91" /><line x1="676.5" y1="0" x2="676.5" y2="91" /><line x1="686.5" y1="0" x2="686.5" y2="91" /><line x1="696.5" y1="0" x2="696.5" y2="91" /><line x1="706.5" y1="0" x2="706.5" y2="91" /><line x1="716.5" y1="0" x2="716.5" y2="91" /><line x1="726.5" y1="0" x2="726.5" y2="91" /><line x1="736.5" y1="0" x2="736.5" y2="91" /><line x1="746.5" y1="0" x2="746.5" y2="91" /><line x1="756.5" y1="0" x2="756.5" y2="91" /><line x1="766.5" y1="0" x2="766.5" y2="91" /><line x1="776.5" y1="0" x2="776.5" y2="91" /><line x1="786.5" y1="0" x2="786.5" y2="91" /><line x1="796.5" y1="0" x2="796.5" y2="91" /><line x1="806.5" y1="0" x2="806.5" y2="91" /><line x1="816.5" y1="0" x2="816.5" y2="91" /><line x1="0" y1="0.5" x2="818" y2="0.5" /><line x1="0" y1="9.5" x2="818" y2="9.5" /><line x1="0" y1="18.5" x2="818" y2="18.5" /><line x1="0" y1="27.5" x2="818" y2="27.5" /><line x1="0" y1="36.5" x2="818" y2="36.5" /><line x1="0" y1="45.5" x2="818" y2="45.5" /><line x1="0" y1="54.5" x2="818" y2="54.5" /><line x1="0" y1="63.5" x2="818" y2="63.5" /><line x1="0" y1="72.5" x2="818" y2="72.5" /><line x1="0" y1="81.5" x2="818" y2="81.5" /><line x1="0" y1="90.5" x2="818" y2="90.5" /></g><polyline points="0,31.5 6,31.5 12,31.5 18,31.5 24,31.5 30,31.5 36,31.5 42,31.5 48,31.5 54,31.5 60,32.5 66,31.5 72,30.5 78,31.5 84,31.5 90,32.5 96,30.5 102,31.5 108,31.5 114,30.5 120,30.5 126,31.5 132,31.5 138,31.5 144,30.5 150,31.5 156,31.5 162,31.5 168,31.5 174,32.5 180,31.5 186,30.5 192,31.5 198,32.5 204,30.5 210,32.5 216,32.5 222,31.5 228,31.5 234,32.5 240,31.5 246,30.5 252,31.5 258,31.5 264,32.5 270,32.5 276,31.5 282,32.5 288,31.5 294,32.5 300,31.5 306,32.5 312,31.5 318,32.5 324,32.5 330,32.5 336,31.5 342,31.5 348,31.5 354,31.5 360,31.5 366,32.5 372,31.5 378,31.5 384,31.5 390,31.5 396,30.5 402,31.5 408,31.5 414,31.5 420,30.5 426,31.5 432,31.5 438,30.5 444,31.5 450,31.5 456,32.5 462,31.5 468,31.5 474,31.5 480,30.5 486,30.5 492,31.5 498,32.5 504,31.5 510,31.5 516,30.5 522,32.5 528,31.5 534,32.5 540,31.5 546,30.5 552,31.5 558,30.5 564,30.5 570,30.5 576,32.5 582,32.5 588,32.5 594,32.5 600,31.5 606,31.5 612,31.5 618,31.5 624,30.5 630,31.5 636,31.5 642,31.5 648,31.5 654,30.5 660,32.5 666,30.5 672,31.5 678,31.5 684,30.5 690,30.5 696,31.5 702,31.5 708,31.5 714,31.5 720,32.5 726,31.5 732,31.5 738,31.5 744,32.5 750,31.5 756,30.5 762,30.5 768,31.5 774,31.5 780,31.5 786,31.5 792,31.5 798,31.5 804,31.5 810,31.5 816,32.5" fill="none" stroke="#ff2a2a" stroke-width="1" shape-rendering="crispEdges"/><polyline points="0.0,32.8 4.0,41.1 11.0,32.8 15.0,41.1 17.0,31.4 21.0,38.9 25.0,34.5 27.0,38.7 29.0,31.0 36.0,41.3 41.0,30.7 44.0,41.8 49.0,34.2 54.0,36.9 56.0,34.7 58.0,36.4 60.0,34.9 64.0,36.2 67.0,32.1 71.0,41.1 75.0,31.7 78.0,39.0 83.0,30.9 88.0,37.7 92.0,35.5 99.0,36.5 102.0,32.1 104.0,39.1 106.0,30.9 113.0,36.6 115.0,34.7 118.0,36.4 120.0,34.7 122.0,37.3 124.0,32.8 129.0,38.4 131.0,33.3 133.0,40.7 136.0,32.2 139.0,38.0 142.0,34.3 144.0,36.8 149.0,31.0 151.0,38.8 154.0,31.4 158.0,37.1 162.0,31.5 167.0,40.6 170.0,33.7 172.0,38.4 174.0,30.5 181.0,41.8 188.0,33.5 190.0,37.3 193.0,35.5 197.0,39.9 199.0,30.7 201.0,37.3 204.0,30.5 208.0,38.0 211.0,32.4 213.0,36.5 217.0,33.7 219.0,39.6 222.0,33.6 224.0,41.8 227.0,34.7 229.0,41.2 231.0,33.6 234.0,41.5 241.0,33.6 246.0,37.1 251.0,33.6 255.0,37.2 258.0,34.9 262.0,36.5 264.0,31.0 266.0,39.1 269.0,31.7 274.0,38.3 277.0,34.6 281.0,38.9 285.0,31.4 290.0,41.9 292.0,31.6 296.0,39.9 300.0,33.6 303.0,37.3 305.0,34.2 307.0,37.6 310.0,31.7 312.0,37.1 315.0,33.2 317.0,36.6 319.0,35.0 322.0,39.9 327.0,33.1 329.0,39.5 331.0,32.9 334.0,40.2 336.0,30.6 341.0,36.4 343.0,34.2 346.0,36.8 348.0,30.9 352.0,38.2 354.0,35.0 359.0,40.4 361.0,34.5 364.0,38.1 369.0,32.9 371.0,41.2 374.0,35.2 376.0,41.2 380.0,30.6 385.0,38.3 389.0,30.6 391.0,36.5 396.0,31.1 399.0,41.3 404.0,32.2 409.0,40.2 412.0,32.7 419.0,39.2 423.0,34.3 425.0,37.9 427.0,32.9 429.0,41.7 431.0,33.0 435.0,40.0 438.0,31.8 440.0,38.2 442.0,33.9 444.0,39.1 451.0,35.0 456.0,41.6 459.0,35.0 462.0,38.4 465.0,31.5 468.0,40.8 475.0,35.1 477.0,38.3 481.0,35.1 483.0,36.8 486.0,32.3 493.0,36.2 495.0,35.3 498.0,40.9 500.0,32.8 503.0,41.6 510.0,32.6 515.0,39.1 520.0,32.1 527.0,41.1 531.0,32.8 533.0,41.0 536.0,34.9 538.0,40.1 541.0,33.4 544.0,39.9 548.0,30.6 550.0,38.4 552.0,30.6 559.0,37.6 566.0,31.2 568.0,41.9 570.0,32.7 575.0,39.2 580.0,34.5 582.0,40.1 584.0,34.6 587.0,37.1 589.0,34.3 593.0,40.3 595.0,31.6 602.0,38.1 607.0,35.2 611.0,39.7 618.0,31.3 625.0,40.8 627.0,30.9 632.0,38.3 635.0,32.8 640.0,41.3 642.0,32.4 646.0,39.9 650.0,34.5 653.0,38.8 658.0,35.4 660.0,40.3 667.0,34.5 672.0,36.7 674.0,35.0 676.0,41.9 680.0,35.4 683.0,37.6 688.0,34.8 691.0,39.0 693.0,32.7 697.0,38.5 700.0,32.9 702.0,37.3 709.0,30.8 716.0,36.2 720.0,32.2 727.0,41.5 730.0,31.2 734.0,41.4 738.0,34.7 743.0,38.6 746.0,33.4 751.0,36.5 753.0,32.7 757.0,37.7 762.0,33.3 764.0,39.1 771.0,35.0 774.0,37.9 777.0,35.3 784.0,41.4 786.0,32.0 788.0,41.8 792.0,31.9 795.0,37.2 799.0,31.1 801.0,39.6 803.0,33.2 805.0,39.1 808.0,33.2 812.0,36.7 814.0,34.0 816.0,41.6" fill="none" stroke="#fff" stroke-width="1" shape-rendering="crispEdges"/></svg>
<span class="u" style="left:1037px;top:381px;width:60px;text-align:right;font-size:11px;line-height:14px;color:#fff;letter-spacing:-0.3px">100°C</span>
<span class="u" style="left:1037px;top:471px;width:60px;text-align:right;font-size:11px;line-height:14px;color:#fff;letter-spacing:-0.3px">0°C</span>
<span class="u" style="left:1921px;top:422px;font-size:11px;line-height:14px;color:#fff">56</span>
<span class="u" style="left:1934px;top:413px;font-size:11px;line-height:14px;color:#ff3030">66</span>
<div style="left:1438px;top:368px;width:11px;height:11px;background:#fff"></div>
<svg style="left:1438px;top:368px" width="11" height="11"><path d="M2 5.5L4.5 8L9.5 2.5" fill="none" stroke="#000" stroke-width="1.3"/></svg>
<span class="u" style="left:1453px;top:366px;font-size:11px;line-height:14px;color:#ff2020;letter-spacing:-0.2px">CPU Diode</span>
<div style="left:1519px;top:368px;width:11px;height:11px;background:#fff"></div>
<svg style="left:1519px;top:368px" width="11" height="11"><path d="M2 5.5L4.5 8L9.5 2.5" fill="none" stroke="#000" stroke-width="1.3"/></svg>
<span class="u" style="left:1534px;top:366px;font-size:11px;line-height:14px;color:#fff;letter-spacing:-0.2px">CCD #1</span>
<div style="left:1051px;top:511px;width:918px;height:146px;background:#000"></div>
<svg style="left:1101px;top:541px" width="819" height="88"><g stroke="#008a00" stroke-width="1" shape-rendering="crispEdges"><line x1="0.5" y1="0" x2="0.5" y2="87" /><line x1="10.5" y1="0" x2="10.5" y2="87" /><line x1="20.5" y1="0" x2="20.5" y2="87" /><line x1="30.5" y1="0" x2="30.5" y2="87" /><line x1="40.5" y1="0" x2="40.5" y2="87" /><line x1="50.5" y1="0" x2="50.5" y2="87" /><line x1="60.5" y1="0" x2="60.5" y2="87" /><line x1="70.5" y1="0" x2="70.5" y2="87" /><line x1="80.5" y1="0" x2="80.5" y2="87" /><line x1="90.5" y1="0" x2="90.5" y2="87" /><line x1="100.5" y1="0" x2="100.5" y2="87" /><line x1="110.5" y1="0" x2="110.5" y2="87" /><line x1="120.5" y1="0" x2="120.5" y2="87" /><line x1="130.5" y1="0" x2="130.5" y2="87" /><line x1="140.5" y1="0" x2="140.5" y2="87" /><line x1="150.5" y1="0" x2="150.5" y2="87" /><line x1="160.5" y1="0" x2="160.5" y2="87" /><line x1="170.5" y1="0" x2="170.5" y2="87" /><line x1="180.5" y1="0" x2="180.5" y2="87" /><line x1="190.5" y1="0" x2="190.5" y2="87" /><line x1="200.5" y1="0" x2="200.5" y2="87" /><line x1="210.5" y1="0" x2="210.5" y2="87" /><line x1="220.5" y1="0" x2="220.5" y2="87" /><line x1="230.5" y1="0" x2="230.5" y2="87" /><line x1="240.5" y1="0" x2="240.5" y2="87" /><line x1="250.5" y1="0" x2="250.5" y2="87" /><line x1="260.5" y1="0" x2="260.5" y2="87" /><line x1="270.5" y1="0" x2="270.5" y2="87" /><line x1="280.5" y1="0" x2="280.5" y2="87" /><line x1="290.5" y1="0" x2="290.5" y2="87" /><line x1="300.5" y1="0" x2="300.5" y2="87" /><line x1="310.5" y1="0" x2="310.5" y2="87" /><line x1="320.5" y1="0" x2="320.5" y2="87" /><line x1="330.5" y1="0" x2="330.5" y2="87" /><line x1="340.5" y1="0" x2="340.5" y2="87" /><line x1="350.5" y1="0" x2="350.5" y2="87" /><line x1="360.5" y1="0" x2="360.5" y2="87" /><line x1="370.5" y1="0" x2="370.5" y2="87" /><line x1="380.5" y1="0" x2="380.5" y2="87" /><line x1="390.5" y1="0" x2="390.5" y2="87" /><line x1="400.5" y1="0" x2="400.5" y2="87" /><line x1="410.5" y1="0" x2="410.5" y2="87" /><line x1="420.5" y1="0" x2="420.5" y2="87" /><line x1="430.5" y1="0" x2="430.5" y2="87" /><line x1="440.5" y1="0" x2="440.5" y2="87" /><line x1="450.5" y1="0" x2="450.5" y2="87" /><line x1="460.5" y1="0" x2="460.5" y2="87" /><line x1="470.5" y1="0" x2="470.5" y2="87" /><line x1="480.5" y1="0" x2="480.5" y2="87" /><line x1="490.5" y1="0" x2="490.5" y2="87" /><line x1="500.5" y1="0" x2="500.5" y2="87" /><line x1="510.5" y1="0" x2="510.5" y2="87" /><line x1="520.5" y1="0" x2="520.5" y2="87" /><line x1="530.5" y1="0" x2="530.5" y2="87" /><line x1="540.5" y1="0" x2="540.5" y2="87" /><line x1="550.5" y1="0" x2="550.5" y2="87" /><line x1="560.5" y1="0" x2="560.5" y2="87" /><line x1="570.5" y1="0" x2="570.5" y2="87" /><line x1="580.5" y1="0" x2="580.5" y2="87" /><line x1="590.5" y1="0" x2="590.5" y2="87" /><line x1="600.5" y1="0" x2="600.5" y2="87" /><line x1="610.5" y1="0" x2="610.5" y2="87" /><line x1="620.5" y1="0" x2="620.5" y2="87" /><line x1="630.5" y1="0" x2="630.5" y2="87" /><line x1="640.5" y1="0" x2="640.5" y2="87" /><line x1="650.5" y1="0" x2="650.5" y2="87" /><line x1="660.5" y1="0" x2="660.5" y2="87" /><line x1="670.5" y1="0" x2="670.5" y2="87" /><line x1="680.5" y1="0" x2="680.5" y2="87" /><line x1="690.5" y1="0" x2="690.5" y2="87" /><line x1="700.5" y1="0" x2="700.5" y2="87" /><line x1="710.5" y1="0" x2="710.5" y2="87" /><line x1="720.5" y1="0" x2="720.5" y2="87" /><line x1="730.5" y1="0" x2="730.5" y2="87" /><line x1="740.5" y1="0" x2="740.5" y2="87" /><line x1="750.5" y1="0" x2="750.5" y2="87" /><line x1="760.5" y1="0" x2="760.5" y2="87" /><line x1="770.5" y1="0" x2="770.5" y2="87" /><line x1="780.5" y1="0" x2="780.5" y2="87" /><line x1="790.5" y1="0" x2="790.5" y2="87" /><line x1="800.5" y1="0" x2="800.5" y2="87" /><line x1="810.5" y1="0" x2="810.5" y2="87" /><line x1="0" y1="6.5" x2="818" y2="6.5" /><line x1="0" y1="14.5" x2="818" y2="14.5" /><line x1="0" y1="22.5" x2="818" y2="22.5" /><line x1="0" y1="30.5" x2="818" y2="30.5" /><line x1="0" y1="38.5" x2="818" y2="38.5" /><line x1="0" y1="46.5" x2="818" y2="46.5" /><line x1="0" y1="54.5" x2="818" y2="54.5" /><line x1="0" y1="62.5" x2="818" y2="62.5" /><line x1="0" y1="70.5" x2="818" y2="70.5" /><line x1="0" y1="78.5" x2="818" y2="78.5" /><line x1="0" y1="86.5" x2="818" y2="86.5" /></g><line x1="2" y1="0.5" x2="818" y2="0.5" stroke="#ffff00" stroke-width="1" shape-rendering="crispEdges"/></svg>
<span class="u" style="left:1460.0px;top:520px;width:100px;text-align:center;font-size:11px;line-height:14px;color:#fff">CPU Usage</span>
<span class="u" style="left:1037px;top:535px;width:60px;text-align:right;font-size:11px;line-height:14px;color:#fff;letter-spacing:-0.3px">100%</span>
<span class="u" style="left:1037px;top:621px;width:60px;text-align:right;font-size:11px;line-height:14px;color:#fff;letter-spacing:-0.3px">0%</span>
<span class="u" style="left:1922px;top:535px;font-size:11px;line-height:14px;color:#ffff00;letter-spacing:-0.3px">100%</span>
<span class="u" style="left:1047px;top:680px;font-size:12px;line-height:16px;letter-spacing:-0.1px">Remaining Battery:</span>
<div style="left:1159px;top:676px;width:80px;height:24px;background:#000"></div>
<span class="u" style="left:1159.0px;top:680px;width:80px;text-align:center;font-size:12px;line-height:16px;color:#00e000">No battery</span>
<span class="u" style="left:1262px;top:680px;font-size:12px;line-height:16px;letter-spacing:-0.1px">Test Started:</span>
<div style="left:1337px;top:676px;width:140px;height:24px;background:#000"></div>
<span class="u" style="left:1337.0px;top:680px;width:140px;text-align:center;font-size:12px;line-height:16px;color:#00e000;letter-spacing:-0.6px">10.01.2026 12:56:20</span>
<span class="u" style="left:1500px;top:680px;font-size:12px;line-height:16px;letter-spacing:-0.1px">Elapsed Time:</span>
<div style="left:1585px;top:676px;width:80px;height:24px;background:#000"></div>
<span class="u" style="left:1585.0px;top:680px;width:80px;text-align:center;font-size:12px;line-height:16px;color:#00e000;letter-spacing:-0.5px">01:04:57</span>
<div style="left:1049px;top:714px;width:71px;height:20px;background:#f5f5f5;border:1px solid #e6e6e6;border-radius:4px"></div>
<span class="u" style="left:1049.0px;top:716px;width:71px;text-align:center;font-size:12px;line-height:16px;color:#8e8e8e">Start</span>
<div style="left:1129px;top:714px;width:72px;height:20px;background:#fdfdfd;border:1px solid #c9c9c9;border-bottom-color:#aaa;border-radius:4px"></div>
<span class="u" style="left:1129.0px;top:716px;width:72px;text-align:center;font-size:12px;line-height:16px;letter-spacing:-0.1px">Stop</span>
<div style="left:1228px;top:714px;width:72px;height:20px;background:#fdfdfd;border:1px solid #c9c9c9;border-bottom-color:#aaa;border-radius:4px"></div>
<span class="u" style="left:1228.0px;top:716px;width:72px;text-align:center;font-size:12px;line-height:16px;letter-spacing:-0.1px">Clear</span>
<div style="left:1309px;top:714px;width:72px;height:20px;background:#fdfdfd;border:1px solid #c9c9c9;border-bottom-color:#aaa;border-radius:4px"></div>
<span class="u" style="left:1309.0px;top:716px;width:72px;text-align:center;font-size:12px;line-height:16px;letter-spacing:-0.1px">Save</span>
<div style="left:1408px;top:714px;width:72px;height:20px;background:#fdfdfd;border:1px solid #c9c9c9;border-bottom-color:#aaa;border-radius:4px"></div>
<span class="u" style="left:1408.0px;top:716px;width:72px;text-align:center;font-size:12px;line-height:16px;letter-spacing:-0.1px">CPUID</span>
<div style="left:1489px;top:714px;width:72px;height:20px;background:#fdfdfd;border:1px solid #c9c9c9;border-bottom-color:#aaa;border-radius:4px"></div>
<span class="u" style="left:1489.0px;top:716px;width:72px;text-align:center;font-size:12px;line-height:16px;letter-spacing:-0.1px">Preferences</span>
<div style="left:1900px;top:714px;width:71px;height:20px;background:#f5f5f5;border:1px solid #e6e6e6;border-radius:4px"></div>
<span class="u" style="left:1900.0px;top:716px;width:71px;text-align:center;font-size:12px;line-height:16px;color:#8e8e8e">Close</span>
</div></div>
</body></html>
